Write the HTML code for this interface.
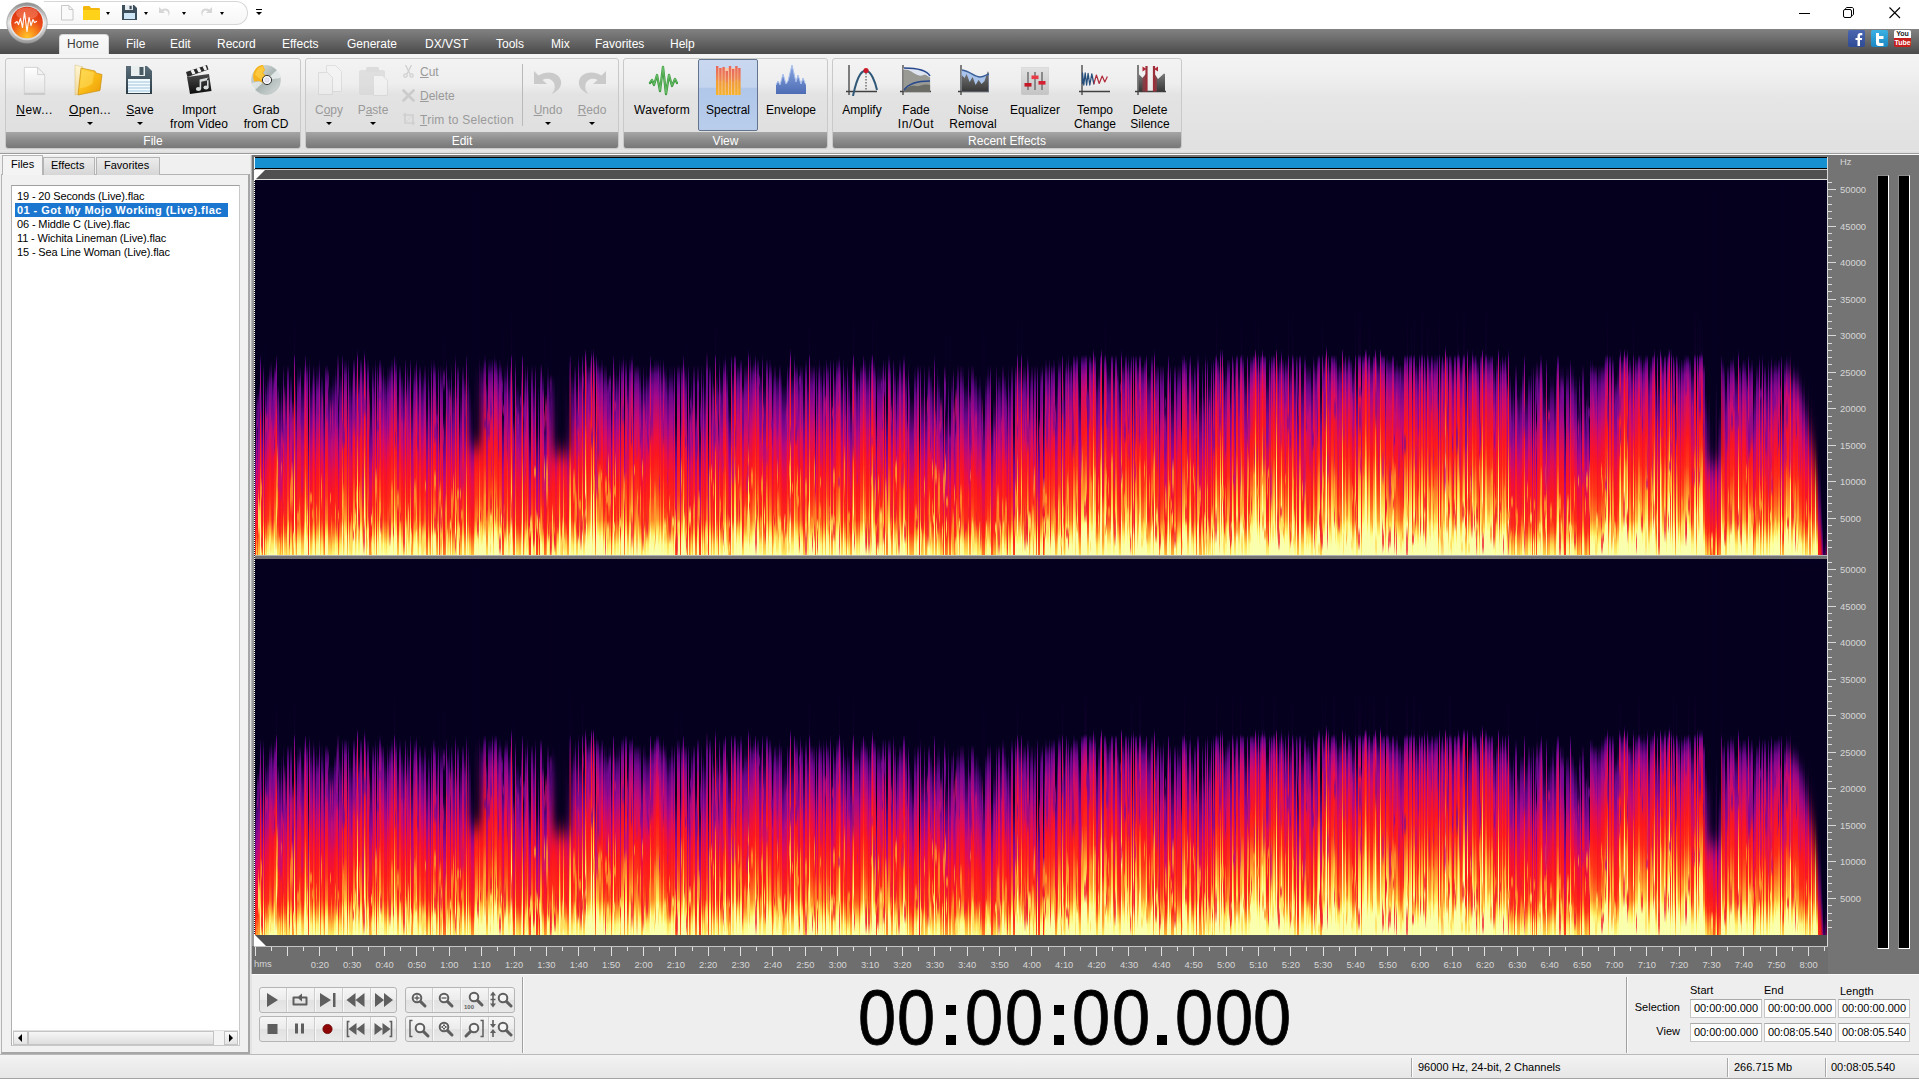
<!DOCTYPE html>
<html><head><meta charset="utf-8"><title>Audio Editor</title>
<style>

html,body{margin:0;padding:0;}
body{width:1919px;height:1079px;overflow:hidden;background:#f0f0f0;font-family:"Liberation Sans",sans-serif;font-size:12px;color:#000;}
#app{position:relative;width:1919px;height:1079px;overflow:hidden;background:#efefef;}
.abs{position:absolute;}
.t{position:absolute;white-space:nowrap;line-height:14px;}
.c{text-align:center;}
/* title */
#title{left:0;top:0;width:1919px;height:29px;background:#fff;}
#menubar{left:0;top:29px;width:1919px;height:25px;background:linear-gradient(#828282 0%,#6a6a6a 45%,#4a4a4a 100%);}
#menubar .m{position:absolute;top:9px;color:#fff;font-size:12px;line-height:14px;white-space:nowrap;}
#hometab{left:59px;top:34px;width:48px;height:21px;background:linear-gradient(#fafafa,#f1f1f1);border:1px solid #d8d8d8;border-bottom:none;border-radius:4px 4px 0 0;}
#ribbon{left:0;top:54px;width:1919px;height:99px;background:linear-gradient(#f4f4f4 0%,#f0f0f0 20%,#e6e6e6 45%,#e0e0e0 100%);}
.grp{position:absolute;top:58px;height:91px;border:1px solid #c9c9c9;border-radius:3px;background:linear-gradient(#f3f3f3 0%,#eeeeee 28%,#e3e3e3 40%,#dedede 100%);box-sizing:border-box;overflow:hidden;}
.grp .lbl{position:absolute;left:0;right:0;bottom:0;height:16px;background:linear-gradient(#a6a6a6,#8c8c8c 50%,#787878);color:#fff;text-align:center;font-size:12px;line-height:18px;}
.rl{position:absolute;font-size:12px;line-height:14px;text-align:center;white-space:nowrap;color:#000;transform:translateX(-50%);}
.rl.dis{color:#9a9a9a;}
.arr{position:absolute;width:0;height:0;border-left:3px solid transparent;border-right:3px solid transparent;border-top:3px solid #000;}
u{text-decoration:underline;}

</style></head>
<body>
<div id="app">
<svg width="0" height="0" style="position:absolute"><defs>
<linearGradient id="gPaper" x1="0" y1="0" x2="0" y2="1"><stop offset="0" stop-color="#ffffff"/><stop offset="1" stop-color="#e4e4e4"/></linearGradient>
<linearGradient id="gFold" x1="0" y1="0" x2="1" y2="1"><stop offset="0" stop-color="#ffd84a"/><stop offset="0.55" stop-color="#f9b915"/><stop offset="1" stop-color="#e99a08"/></linearGradient>
<linearGradient id="gFoldB" x1="0" y1="0" x2="0" y2="1"><stop offset="0" stop-color="#fff6d0"/><stop offset="1" stop-color="#f0d89a"/></linearGradient>
<linearGradient id="gDisk" x1="0" y1="0" x2="0" y2="1"><stop offset="0" stop-color="#5a6d78"/><stop offset="1" stop-color="#2c3d47"/></linearGradient>
<linearGradient id="gClap" x1="0" y1="0" x2="0" y2="1"><stop offset="0" stop-color="#4a4a4a"/><stop offset="1" stop-color="#0c0c0c"/></linearGradient>
<linearGradient id="gCD" x1="0" y1="0" x2="1" y2="1"><stop offset="0" stop-color="#e8ecec"/><stop offset="0.5" stop-color="#a9b5b3"/><stop offset="1" stop-color="#d8dedd"/></linearGradient>
<linearGradient id="gSpec" x1="0" y1="0" x2="0" y2="1"><stop offset="0" stop-color="#e8665e"/><stop offset="0.45" stop-color="#ee8850"/><stop offset="0.5" stop-color="#f09a3a"/><stop offset="1" stop-color="#f4b428"/></linearGradient>
<linearGradient id="gEnv" x1="0" y1="0" x2="0" y2="1"><stop offset="0" stop-color="#8aa6e0"/><stop offset="1" stop-color="#4d6cb4"/></linearGradient>
<linearGradient id="gDk" x1="0" y1="0" x2="0" y2="1"><stop offset="0" stop-color="#7a7a7a"/><stop offset="1" stop-color="#383838"/></linearGradient>
<linearGradient id="gEq" x1="0" y1="0" x2="0" y2="1"><stop offset="0" stop-color="#e2e2e2"/><stop offset="1" stop-color="#c4c4c4"/></linearGradient>
<radialGradient id="gLogo" cx="0.5" cy="0.95" r="0.95"><stop offset="0" stop-color="#ffc42a"/><stop offset="0.30" stop-color="#f98a1c"/><stop offset="0.60" stop-color="#ea4a18"/><stop offset="1" stop-color="#d62e12"/></radialGradient>
<linearGradient id="gRing" x1="0" y1="0" x2="0" y2="1"><stop offset="0" stop-color="#8f8f8f"/><stop offset="0.5" stop-color="#e8e8e8"/><stop offset="1" stop-color="#9a9a9a"/></linearGradient>
</defs></svg>
<div id="title" class="abs"></div>
<div id="menubar" class="abs"></div>
<div class="abs" style="left:44px;top:1px;width:203px;height:22px;border:1px solid #d6d6d6;border-radius:0 12px 12px 0;border-left:none;background:linear-gradient(#ffffff,#f6f6f6);"></div>
<svg class="abs" style="left:61px;top:5px" width="13" height="16" viewBox="0 0 13 16" ><path d="M.5 .5h7.500l4 4v10.500H.5z" fill="#fafafa" stroke="#c8c8c8"/><path d="M8 .5v4h4" fill="none" stroke="#c8c8c8"/></svg>
<svg class="abs" style="left:83px;top:6px" width="17" height="15" viewBox="0 0 17 15" ><path d="M0 1.500c0-1 .5-1.500 1.500-1.500h5l1.500 2h7.500c1 0 1.500.5 1.500 1.500V14H0z" fill="#f4b70c"/><path d="M0 4h17v10H0z" fill="#fdd219"/></svg>
<svg class="abs" style="left:122px;top:5px" width="15" height="15" viewBox="0 0 15 15" ><path d="M0 0h12l3 3v12H0z" fill="#3d4f5a"/><rect x="3" y="0" width="8" height="5" fill="#e8eef2"/><rect x="7.500" y=".8" width="2.200" height="3.400" fill="#3d4f5a"/><rect x="2" y="8" width="11" height="6" fill="#cfe6f7"/></svg>
<svg class="abs" style="left:158px;top:6px" width="16" height="13" viewBox="0 0 16 13" ><path d="M1 1v6h6l-2-2c3-1.500 6 0 5.500 5.500 3-5 0-10-7-7z" fill="#d6d6d6"/></svg>
<svg class="abs" style="left:197px;top:6px" width="16" height="13" viewBox="0 0 16 13" ><path d="M15 1v6H9l2-2C8 3.500 5 5 5.500 10.500 2.500 5.500 5.500 .5 12.500 3.500z" fill="#d6d6d6"/></svg>
<div class="arr" style="left:106px;top:12px;border-width:3px 2.500px 0 2.500px"></div>
<div class="arr" style="left:144px;top:12px;border-width:3px 2.500px 0 2.500px"></div>
<div class="arr" style="left:182px;top:12px;border-width:3px 2.500px 0 2.500px"></div>
<div class="arr" style="left:220px;top:12px;border-width:3px 2.500px 0 2.500px"></div>
<div class="abs" style="left:256px;top:9px;width:6px;height:1px;background:#000"></div>
<div class="arr" style="left:256px;top:12px"></div>
<div class="abs" style="left:1799px;top:13px;width:11px;height:1px;background:#000"></div>
<svg class="abs" style="left:1843px;top:7px" width="12" height="12" viewBox="0 0 12 12" ><rect x=".5" y="2.500" width="8" height="8" rx="1.500" fill="none" stroke="#000"/><path d="M2.500 2.500V2c0-.8.700-1.500 1.500-1.500h5c.8 0 1.500.7 1.500 1.500v5c0 .8-.7 1.500-1.500 1.500H8.500" fill="none" stroke="#000"/></svg>
<svg class="abs" style="left:1889px;top:7px" width="12" height="12" viewBox="0 0 12 12" ><path d="M.5 .5l10.500 10.500M11 .5L.5 11" stroke="#000" stroke-width="1.100"/></svg>
<svg class="abs" style="left:6px;top:2px" width="42" height="42" viewBox="0 0 42 42" ><circle cx="21" cy="21" r="20.200" fill="url(#gRing)" stroke="#8a8a8a" stroke-width=".6"/><circle cx="21" cy="21" r="17.300" fill="#fff" opacity=".55"/><circle cx="21" cy="20.500" r="15.800" fill="url(#gLogo)"/><ellipse cx="21" cy="11.500" rx="11" ry="6" fill="#ff9a78" opacity=".45"/><path d="M9 21l2-1.500 1.500 3 2-6 2 9 2-15 2.500 19 2-14 2 8 2-6 1.500 3 2-1" fill="none" stroke="#fff" stroke-width="1.200" stroke-linejoin="round" stroke-linecap="round" opacity=".95"/></svg>
<div id="hometab" class="abs"></div>
<div id="ribbon" class="abs"></div>
<div class="t mi" style="left:67px;top:37px;color:#3c3c3c;font-size:12px">Home</div>
<div class="t mi" style="left:126px;top:37px;color:#fff;font-size:12px">File</div>
<div class="t mi" style="left:170px;top:37px;color:#fff;font-size:12px">Edit</div>
<div class="t mi" style="left:217px;top:37px;color:#fff;font-size:12px">Record</div>
<div class="t mi" style="left:282px;top:37px;color:#fff;font-size:12px">Effects</div>
<div class="t mi" style="left:347px;top:37px;color:#fff;font-size:12px">Generate</div>
<div class="t mi" style="left:425px;top:37px;color:#fff;font-size:12px">DX/VST</div>
<div class="t mi" style="left:496px;top:37px;color:#fff;font-size:12px">Tools</div>
<div class="t mi" style="left:551px;top:37px;color:#fff;font-size:12px">Mix</div>
<div class="t mi" style="left:595px;top:37px;color:#fff;font-size:12px">Favorites</div>
<div class="t mi" style="left:670px;top:37px;color:#fff;font-size:12px">Help</div>
<div class="abs" style="left:1848px;top:30px;width:17px;height:17px;background:linear-gradient(#4a66b0,#2f4a96);border-radius:2px;"></div>
<svg class="abs" style="left:1848px;top:30px" width="17" height="17" viewBox="0 0 17 17" ><path d="M9.500 16V10H7.500V8h2V6c0-2 1.200-3 3-3h1.800v2.200H13c-.7 0-1 .4-1 1V8h2.200l-.3 2H12v6z" fill="#fff"/></svg>
<div class="abs" style="left:1871px;top:30px;width:17px;height:17px;background:linear-gradient(#3cb2e4,#1a86c2);border-radius:2px;"></div>
<svg class="abs" style="left:1871px;top:30px" width="17" height="17" viewBox="0 0 17 17" ><path d="M5 3h3v3h4.500v3H8v2.500c0 1 .5 1.500 1.500 1.500h3v3H8c-2 0-3-1-3-3z" fill="#fff"/></svg>
<div class="abs" style="left:1894px;top:30px;width:17px;height:9px;background:#fff;border-radius:2px 2px 0 0"></div>
<div class="abs" style="left:1894px;top:38px;width:17px;height:9px;background:#c8201c;border-radius:0 0 2px 2px"></div>
<div class="t" style="left:1894px;top:29px;width:17px;text-align:center;font-size:7px;font-weight:bold;line-height:9px;color:#222">You</div>
<div class="t" style="left:1894px;top:38px;width:17px;text-align:center;font-size:7px;font-weight:bold;line-height:9px;color:#fff">Tube</div>
<div class="grp" style="left:5px;width:296px"><div class="lbl">File</div></div>
<div class="grp" style="left:305px;width:314px"><div class="lbl">Edit</div></div>
<div class="grp" style="left:623px;width:205px"><div class="lbl">View</div></div>
<div class="grp" style="left:832px;width:350px"><div class="lbl">Recent Effects</div></div>
<svg class="abs" style="left:23px;top:66px" width="23" height="29" viewBox="0 0 26 32" preserveAspectRatio="none"><path d="M1.5 1.5h15l8 8v20.5h-23z" fill="url(#gPaper)" stroke="#cfcfcf" stroke-width="1"/><path d="M16.5 1.5v8h8z" fill="#f2f2f2" stroke="#cfcfcf" stroke-width="1"/><path d="M1 31h24" stroke="#c4c4c4" stroke-width="1.5"/></svg>
<svg class="abs" style="left:74px;top:64px" width="30" height="32" viewBox="0 0 30 32" ><path d="M1 1l8 2 -3 27 -5 1z" fill="url(#gFoldB)" stroke="#d9c58a" stroke-width=".6"/><path d="M7 4l14 3 1 2 6 1.5 -2 16 -22 4.5z" fill="url(#gFold)" stroke="#c98f10" stroke-width=".7"/><path d="M8 6l12 2.5-1.5 11c-5 4-9 4-13 5z" fill="#ffe36a" opacity=".45"/></svg>
<svg class="abs" style="left:125px;top:65px" width="28" height="30" viewBox="0 0 28 30" ><path d="M1 1h21l5 5v23H1z" fill="url(#gDisk)"/><rect x="6" y="1" width="14" height="10" fill="#e9eeee"/><rect x="14.5" y="2" width="4" height="8" fill="#4a5a62"/><rect x="3" y="14" width="22" height="14" fill="#f4fbff"/><path d="M3 17h22M3 20h22M3 23h22M3 26h22" stroke="#9fc3dd" stroke-width="1"/></svg>
<svg class="abs" style="left:184px;top:64px" width="30" height="31" viewBox="0 0 30 31" ><path d="M2 8L23 1l1.5 4.5L3.5 13z" fill="#2a2a2a"/><path d="M6.5 6.6l3-1 2 4-3 1zM12.5 4.6l3-1 2 4-3 1zM18.5 2.6l3-1 1.6 4-2.6 1z" fill="#f4f4f4"/><path d="M3 13l22-3 2.5 17L6 30z" fill="url(#gClap)"/><g fill="#d8dcdc"><ellipse cx="14.5" cy="25" rx="2.6" ry="2"/><ellipse cx="22" cy="23.6" rx="2.6" ry="2"/><path d="M15.6 15.5l9-2v2.5l-7.4 1.7v7.3h-1.6zM23 15v8.6h1.6V13.5z"/></g></svg>
<svg class="abs" style="left:251px;top:64px" width="31" height="32" viewBox="0 0 31 32" ><circle cx="15" cy="16" r="14.5" fill="url(#gCD)" stroke="#b8c2c0" stroke-width=".6"/><path d="M15 16L27 5A16 16 0 0 1 29.4 14z" fill="#eef2f1" opacity=".8"/><path d="M15 16L3 27A16 16 0 0 1 .8 19z" fill="#eef2f1" opacity=".7"/><path d="M2 13C2 6 7 1 12 1l2 5-2 3 3 3-1 8-6-3-5 .5z" fill="#f5b320"/><path d="M4 11c1-5 4-8 8-9l1 4-2 3 2 3-1 5-4-3z" fill="#ffd24a" opacity=".7"/><circle cx="16" cy="16" r="4.6" fill="#f4f6f8" stroke="#333" stroke-width="1"/><circle cx="16" cy="16" r="2.2" fill="#e9e4f4" stroke="#c8c8d8" stroke-width=".5"/></svg>
<div class="rl " style="left:34.5px;top:103px"><span style="letter-spacing:.55px"><u>N</u>ew...</span></div>
<div class="rl " style="left:90px;top:103px"><span style="letter-spacing:.35px"><u>O</u>pen...</span></div>
<div class="rl " style="left:140px;top:103px"><u>S</u>ave</div>
<div class="rl " style="left:199px;top:103px">Import<br>from Video</div>
<div class="rl " style="left:266px;top:103px">Grab<br>from CD</div>
<div class="arr" style="left:87px;top:122px;border-top-color:#000"></div>
<div class="arr" style="left:137px;top:122px;border-top-color:#000"></div>
<svg class="abs" style="left:316px;top:64px" width="27" height="32" viewBox="0 0 27 32" ><g opacity=".55"><path d="M10.5 1.5h9l6 6v20h-15z" fill="#f6f6f6" stroke="#d0d0d0"/><path d="M2.5 8.5h9l5 5v17h-14z" fill="#f1f1f1" stroke="#cdcdcd"/></g></svg>
<svg class="abs" style="left:358px;top:65px" width="31" height="31" viewBox="0 0 31 31" ><g opacity=".6"><rect x="1" y="5" width="26" height="25" rx="2" fill="#d4d4d4"/><rect x="8" y="2" width="13" height="5" rx="1.5" fill="#cfcfcf"/><path d="M15.5 10.5h9l5 5v15h-14z" fill="#f3f3f3" stroke="#d2d2d2"/></g></svg>
<div class="rl dis" style="left:329px;top:103px">C<u>o</u>py</div>
<div class="rl dis" style="left:373px;top:103px">P<u>a</u>ste</div>
<div class="arr" style="left:326px;top:122px;border-top-color:#000"></div>
<div class="arr" style="left:370px;top:122px;border-top-color:#000"></div>
<svg class="abs" style="left:403px;top:65px" width="11" height="13" viewBox="0 0 11 13" ><path d="M2.500 0l4.500 9M8.500 0L4 9" stroke="#cfcfcf" stroke-width="1.300"/><circle cx="2.500" cy="10.500" r="1.700" fill="none" stroke="#cfcfcf" stroke-width="1.200"/><circle cx="8.500" cy="10.500" r="1.700" fill="none" stroke="#cfcfcf" stroke-width="1.200"/></svg>
<svg class="abs" style="left:402px;top:89px" width="13" height="13" viewBox="0 0 13 13" ><path d="M1.500 1.500l10 10M11.500 1.500l-10 10" stroke="#cbcbcb" stroke-width="2.600" stroke-linecap="round"/></svg>
<svg class="abs" style="left:403px;top:113px" width="12" height="12" viewBox="0 0 12 12" ><path d="M2 0v10h10M0 2h10v10" fill="none" stroke="#cfcfcf" stroke-width="1.600"/><path d="M3 9l6-6" stroke="#d6d6d6" stroke-width="1"/></svg>
<div class="t" style="left:420px;top:65px;color:#9a9a9a"><u>C</u>ut</div>
<div class="t" style="left:420px;top:89px;color:#9a9a9a"><u>D</u>elete</div>
<div class="t" style="left:420px;top:113px;color:#9a9a9a"><span style="letter-spacing:.25px"><u>T</u>rim to Selection</span></div>
<div class="abs" style="left:522px;top:64px;width:1px;height:62px;background:#b9b9b9"></div>
<svg class="abs" style="left:533px;top:70px" width="30" height="26" viewBox="0 0 30 26" ><path d="M1 1V14H14L9.500 10C14 7.500 20 9 21.500 14.500 22.300 18.500 21 21.500 18.500 24 25.500 21.500 29 16 28 11 26 2.500 14.500 0 5.500 5.500Z" fill="#cacaca"/></svg>
<svg class="abs" style="left:577px;top:70px" width="30" height="26" viewBox="0 0 30 26" ><g transform="translate(30,0) scale(-1,1)"><path d="M1 1V14H14L9.500 10C14 7.500 20 9 21.500 14.500 22.300 18.500 21 21.500 18.500 24 25.500 21.500 29 16 28 11 26 2.500 14.500 0 5.500 5.500Z" fill="#cacaca"/></g></svg>
<div class="rl dis" style="left:548px;top:103px"><u>U</u>ndo</div>
<div class="rl dis" style="left:592px;top:103px"><u>R</u>edo</div>
<div class="arr" style="left:545px;top:122px;border-top-color:#000"></div>
<div class="arr" style="left:589px;top:122px;border-top-color:#000"></div>
<div class="abs" style="left:698px;top:59px;width:58px;height:70px;border:1px solid #63748f;border-radius:2px;background:linear-gradient(#c9d8ef 0%,#c3d4ee 39%,#b0c7ea 40%,#b9cdeb 100%);"></div>
<svg class="abs" style="left:648px;top:65px" width="30" height="32" viewBox="0 0 30 32" ><path d="M2 18l2-3 2 5 3-10 3 16 3-24 3 27 3-19 3 11 3-7 2 4" fill="none" stroke="#3f9a3f" stroke-width="2.300" stroke-linejoin="round" stroke-linecap="round"/><path d="M2 17.500l2-3 2 5 3-10 3 16 3-24 3 27 3-19 3 11 3-7 2 4" fill="none" stroke="#7cd07c" stroke-width=".8" stroke-linejoin="round" opacity=".8"/></svg>
<svg class="abs" style="left:714px;top:64px" width="28" height="32" viewBox="0 0 28 32" ><rect x="2" y="4" width="24" height="27" fill="#f6c8a8"/><g fill="url(#gSpec)"><rect x="2" y="2" width="2.4" height="29"/><rect x="5.2" y="4" width="2.4" height="27"/><rect x="8.4" y="3" width="2.4" height="28"/><rect x="11.6" y="7" width="2.4" height="24"/><rect x="14.8" y="2" width="2.4" height="29"/><rect x="18" y="5" width="2.4" height="26"/><rect x="21.2" y="2" width="2.4" height="29"/><rect x="24.2" y="4" width="2.4" height="27"/></g></svg>
<svg class="abs" style="left:775px;top:64px" width="32" height="32" viewBox="0 0 32 32" ><path d="M1 30V21l2-4 2 4 3-11 3 10 2-3 4-16 4 17 2-7 3 9 2-6 2 5 1 2v9z" fill="url(#gEnv)"/><path d="M1 21l2-4 2 4 3-11 3 10 2-3 4-16 4 17 2-7 3 9 2-6 2 5" fill="none" stroke="#a9c0ee" stroke-width="1"/></svg>
<div class="rl " style="left:662px;top:103px"><span style="letter-spacing:.2px">Waveform</span></div>
<div class="rl " style="left:728px;top:103px">Spectral</div>
<div class="rl " style="left:791px;top:103px">Envelope</div>
<svg class="abs" style="left:846px;top:64px" width="32" height="32" viewBox="0 0 32 32" ><path d="M3 1v30M0 27.5h31" stroke="#404040" stroke-width="1.3"/><path d="M7 32C12 8 17 6 21 7s8 10 10 19" fill="none" stroke="#2f5878" stroke-width="2"/><path d="M20 9v18" stroke="#333" stroke-width="1" stroke-dasharray="1.5 1.5"/><circle cx="20" cy="6.5" r="2.6" fill="#cc1a2a"/></svg>
<svg class="abs" style="left:900px;top:64px" width="32" height="32" viewBox="0 0 32 32" ><path d="M3 1v30M0 27.5h31" stroke="#404040" stroke-width="1.3"/><path d="M3.6 5.5c6-1 10 3 14 5s5-2 8 0l4.5 3v14H3.6z" fill="#9a9a94"/><path d="M3.6 27c4-5 8-6 12-5s8-3 14.5-1v6z" fill="#6c6c66"/><path d="M3.6 6c4-2 9 3 14 5s5-1 8-.5l4.4 2.500V8C22 4 12 3.500 3.600 4z" fill="#dfe6f2"/><path d="M4 4c10 0 22 1 26 8" fill="none" stroke="#27488c" stroke-width="1.5"/><path d="M4 26c4-6 14-9 26-9" fill="none" stroke="#27488c" stroke-width="1.5"/></svg>
<svg class="abs" style="left:958px;top:64px" width="32" height="32" viewBox="0 0 32 32" ><path d="M3 1v30M0 27.5h31" stroke="#404040" stroke-width="1.3"/><path d="M3.600 6c8 1 12 7 18 7 4 0 6-2 9.400-3v17.400H3.600z" fill="#a9c3ea"/><path d="M3.600 11l3 3 2-4 3 8 3-5 3 8 3-5 3 4 3-3 3-9.500 1 .5v19.400H3.600z" fill="url(#gDk)"/><path d="M4 6c8 1 12 7 18 7 4 0 6-2 9-3" fill="none" stroke="#3a5f9a" stroke-width="1.4"/></svg>
<svg class="abs" style="left:1021px;top:67px" width="28" height="28" viewBox="0 0 28 28" ><rect x="0" y="0" width="28" height="28" rx="2" fill="url(#gEq)" stroke="#cfcfcf" stroke-width=".6"/><path d="M7 5v18M14 5v18M21 5v18" stroke="#777" stroke-width="1.6"/><rect x="3.500" y="16" width="7" height="3.600" fill="#c41826"/><rect x="10.500" y="8.500" width="7" height="3.600" fill="#e83a44"/><rect x="17.500" y="14" width="7" height="3.600" fill="#d42030"/></svg>
<svg class="abs" style="left:1079px;top:64px" width="32" height="32" viewBox="0 0 32 32" ><path d="M3 1v30M0 27.5h31" stroke="#404040" stroke-width="1.3"/><path d="M3.500 20V9l1.300 12 1.400-12 1.400 12 1.500-11.500 1.700 11.500 2-11 2.200 10.500" fill="none" stroke="#274f7c" stroke-width="1.3" stroke-linejoin="round"/><path d="M14.800 20l2.600-9 2.800 8.500 3-7.500 2.600 6 2.600-5.500" fill="none" stroke="#b02a3a" stroke-width="1.200" stroke-linejoin="round"/></svg>
<svg class="abs" style="left:1135px;top:64px" width="32" height="32" viewBox="0 0 32 32" ><path d="M3 1v30M0 27.5h31" stroke="#404040" stroke-width="1.3"/><path d="M3.600 10l4 4 4-5v18.400h-8zM19 27.400V9l4 6 6-5.500 1 .5v17.400z" fill="url(#gDk)"/><path d="M7.500 14l4-4.500V27.400h-4z" fill="#8e3b42" opacity=".8"/><path d="M19 9.500l3 4.500v13.400h-3z" fill="#8e3b42" opacity=".8"/><path d="M11.500 2v25.400M19 2v25.400" stroke="#9a2f3a" stroke-width="2.200"/><path d="M7.500 2.500l4 2.500-4 2.500zM23 2.500l-4 2.500 4 2.500z" fill="#b02a3a"/></svg>
<div class="rl " style="left:862px;top:103px">Amplify</div>
<div class="rl " style="left:916px;top:103px">Fade<br><span style="letter-spacing:.6px">In/Out</span></div>
<div class="rl " style="left:973px;top:103px">Noise<br>Removal</div>
<div class="rl " style="left:1035px;top:103px">Equalizer</div>
<div class="rl " style="left:1095px;top:103px">Tempo<br>Change</div>
<div class="rl " style="left:1150px;top:103px">Delete<br>Silence</div>
<div class="abs" style="left:0;top:150px;width:1919px;height:3px;background:linear-gradient(#e9e9e9,#dcdcdc)"></div>
<div class="abs" style="left:0;top:153px;width:1919px;height:1px;background:#9c9c9c"></div>
<div class="abs" style="left:0;top:154px;width:1919px;height:1px;background:#fdfdfd"></div>
<div class="abs" style="left:0;top:155px;width:252px;height:900px;background:#f0f0f0"></div>
<div class="abs" style="left:1px;top:174px;width:249px;height:880px;border:1px solid #b4b4b4;box-sizing:border-box;background:#f1f1f1;border-right:2px solid #a6a6a6;border-bottom:2px solid #a6a6a6"></div>
<div class="abs" style="left:43px;top:157px;width:52px;height:18px;box-sizing:border-box;border:1px solid #b4b4b4;border-bottom:none;background:linear-gradient(#ececec,#d6d6d6)"></div>
<div class="abs" style="left:96px;top:157px;width:64px;height:18px;box-sizing:border-box;border:1px solid #b4b4b4;border-bottom:none;background:linear-gradient(#ececec,#d6d6d6)"></div>
<div class="abs" style="left:2px;top:155px;width:41px;height:20px;box-sizing:border-box;border:1px solid #b4b4b4;border-bottom:none;background:#f4f4f4"></div>
<div class="t" style="left:11px;top:158px;font-size:11px;line-height:13px">Files</div>
<div class="t" style="left:51px;top:159px;font-size:11px;line-height:13px">Effects</div>
<div class="t" style="left:104px;top:159px;font-size:11px;line-height:13px">Favorites</div>
<div class="abs" style="left:11px;top:185px;width:229px;height:861px;box-sizing:border-box;border:1px solid #c8c8c8;border-top-color:#a0a0a0;border-left-color:#b0b0b0;background:#fff"></div>
<div class="abs" style="left:15px;top:203px;width:213px;height:14px;background:#1b76d0"></div>
<div class="t lf" id="lf0" style="left:17px;top:189px;font-size:11px;line-height:14px;letter-spacing:-0.13px;">19 - 20 Seconds (Live).flac</div>
<div class="t lf" id="lf1" style="left:17px;top:203px;font-size:11px;line-height:14px;font-weight:bold;color:#fff;letter-spacing:0.43px;">01 - Got My Mojo Working (Live).flac</div>
<div class="t lf" id="lf2" style="left:17px;top:217px;font-size:11px;line-height:14px;letter-spacing:-0.13px;">06 - Middle C (Live).flac</div>
<div class="t lf" id="lf3" style="left:17px;top:231px;font-size:11px;line-height:14px;letter-spacing:-0.13px;">11 - Wichita Lineman (Live).flac</div>
<div class="t lf" id="lf4" style="left:17px;top:245px;font-size:11px;line-height:14px;letter-spacing:-0.13px;">15 - Sea Line Woman (Live).flac</div>
<div class="abs" style="left:13px;top:1030px;width:225px;height:15px;background:#f4f4f4;border-top:1px solid #e2e2e2;box-sizing:border-box"></div>
<div class="abs" style="left:28px;top:1031px;width:186px;height:14px;box-sizing:border-box;border:1px solid #c4c4c4;background:linear-gradient(#f6f6f6,#dedede)"></div>
<div class="abs" style="left:13px;top:1031px;width:15px;height:14px;box-sizing:border-box;border:1px solid #c4c4c4;background:linear-gradient(#fafafa,#e4e4e4)"></div>
<div class="abs" style="left:224px;top:1031px;width:14px;height:14px;box-sizing:border-box;border:1px solid #c4c4c4;background:linear-gradient(#fafafa,#e4e4e4)"></div>
<div class="abs" style="left:18px;top:1034px;width:0;height:0;border-top:4px solid transparent;border-bottom:4px solid transparent;border-right:4px solid #000"></div>
<div class="abs" style="left:229px;top:1034px;width:0;height:0;border-top:4px solid transparent;border-bottom:4px solid transparent;border-left:4px solid #000"></div>
<div class="abs" style="left:252px;top:155px;width:1667px;height:819px;background:#747474"></div>
<div class="abs" style="left:250px;top:155px;width:2px;height:900px;background:#e4e4e4"></div>
<div class="abs" style="left:251px;top:155px;width:1px;height:819px;background:#b8b8b8"></div>
<div class="abs" style="left:252px;top:180px;width:2px;height:766px;background:#9a9a9a"></div>
<div class="abs" style="left:255px;top:157px;width:1572px;height:12px;background:#000"></div>
<div class="abs" style="left:255px;top:158px;width:1572px;height:10px;background:#1690d0"></div>
<div class="abs" style="left:254px;top:157px;width:1px;height:12px;background:#e8f4ff"></div>
<div class="abs" style="left:255px;top:169px;width:1572px;height:1px;background:#c8c8c8"></div>
<div class="abs" style="left:255px;top:170px;width:1572px;height:9px;background:#505050"></div>
<div class="abs" style="left:255px;top:179px;width:1572px;height:1px;background:#e0e0e0"></div>
<svg class="abs" style="left:254px;top:170px" width="12" height="10"><path d="M0 0h11L1 10H0z" fill="#fff"/></svg>
<div class="abs" style="left:255px;top:555px;width:1572px;height:1px;background:#b0b0b0"></div>
<div class="abs" style="left:255px;top:556px;width:1572px;height:3px;background:#747474"></div>
<svg class="abs" style="left:0;top:0" width="1919" height="1079" viewBox="0 0 1919 1079"><defs><linearGradient id="g0" gradientUnits="userSpaceOnUse" x1="0" y1="555" x2="0" y2="309"><stop offset="0.000" stop-color="#06001f"/><stop offset="1.000" stop-color="#06001f"/></linearGradient><linearGradient id="g1" gradientUnits="userSpaceOnUse" x1="0" y1="555" x2="0" y2="309"><stop offset="0.000" stop-color="#1a013c"/><stop offset="0.041" stop-color="#06001f"/><stop offset="1.000" stop-color="#06001f"/></linearGradient><linearGradient id="g2" gradientUnits="userSpaceOnUse" x1="0" y1="555" x2="0" y2="309"><stop offset="0.000" stop-color="#2f0355"/><stop offset="0.041" stop-color="#06001f"/><stop offset="1.000" stop-color="#06001f"/></linearGradient><linearGradient id="g3" gradientUnits="userSpaceOnUse" x1="0" y1="555" x2="0" y2="309"><stop offset="0.000" stop-color="#46046b"/><stop offset="0.041" stop-color="#1a013c"/><stop offset="0.073" stop-color="#06001f"/><stop offset="1.000" stop-color="#06001f"/></linearGradient><linearGradient id="g4" gradientUnits="userSpaceOnUse" x1="0" y1="555" x2="0" y2="309"><stop offset="0.000" stop-color="#5d0682"/><stop offset="0.041" stop-color="#2f0355"/><stop offset="0.073" stop-color="#06001f"/><stop offset="1.000" stop-color="#06001f"/></linearGradient><linearGradient id="g5" gradientUnits="userSpaceOnUse" x1="0" y1="555" x2="0" y2="309"><stop offset="0.000" stop-color="#720689"/><stop offset="0.041" stop-color="#46046b"/><stop offset="0.081" stop-color="#090023"/><stop offset="1.000" stop-color="#06001f"/></linearGradient><linearGradient id="g6" gradientUnits="userSpaceOnUse" x1="0" y1="555" x2="0" y2="309"><stop offset="0.000" stop-color="#85078a"/><stop offset="0.041" stop-color="#5d0682"/><stop offset="0.093" stop-color="#0c0027"/><stop offset="1.000" stop-color="#06001f"/></linearGradient><linearGradient id="g7" gradientUnits="userSpaceOnUse" x1="0" y1="555" x2="0" y2="309"><stop offset="0.000" stop-color="#98088b"/><stop offset="0.041" stop-color="#720689"/><stop offset="0.093" stop-color="#1f0244"/><stop offset="0.122" stop-color="#06001f"/><stop offset="1.000" stop-color="#06001f"/></linearGradient><linearGradient id="g8" gradientUnits="userSpaceOnUse" x1="0" y1="555" x2="0" y2="309"><stop offset="0.000" stop-color="#aa0885"/><stop offset="0.041" stop-color="#85078a"/><stop offset="0.073" stop-color="#57057b"/><stop offset="0.122" stop-color="#0f012c"/><stop offset="0.142" stop-color="#06001f"/><stop offset="1.000" stop-color="#06001f"/></linearGradient><linearGradient id="g9" gradientUnits="userSpaceOnUse" x1="0" y1="555" x2="0" y2="309"><stop offset="0.000" stop-color="#bc097a"/><stop offset="0.041" stop-color="#98088b"/><stop offset="0.081" stop-color="#610685"/><stop offset="0.122" stop-color="#230249"/><stop offset="0.142" stop-color="#090023"/><stop offset="1.000" stop-color="#06001f"/></linearGradient><linearGradient id="g10" gradientUnits="userSpaceOnUse" x1="0" y1="555" x2="0" y2="309"><stop offset="0.000" stop-color="#ce0a6e"/><stop offset="0.041" stop-color="#aa0885"/><stop offset="0.093" stop-color="#640688"/><stop offset="0.142" stop-color="#1c0240"/><stop offset="0.163" stop-color="#0f012d"/><stop offset="0.203" stop-color="#06001f"/><stop offset="1.000" stop-color="#06001f"/></linearGradient><linearGradient id="g11" gradientUnits="userSpaceOnUse" x1="0" y1="555" x2="0" y2="309"><stop offset="0.000" stop-color="#d90b5d"/><stop offset="0.041" stop-color="#bc097a"/><stop offset="0.093" stop-color="#770789"/><stop offset="0.122" stop-color="#510575"/><stop offset="0.142" stop-color="#330358"/><stop offset="0.203" stop-color="#090023"/><stop offset="1.000" stop-color="#06001f"/></linearGradient><linearGradient id="g12" gradientUnits="userSpaceOnUse" x1="0" y1="555" x2="0" y2="309"><stop offset="0.000" stop-color="#e40d4c"/><stop offset="0.041" stop-color="#ce0a6e"/><stop offset="0.081" stop-color="#9b088c"/><stop offset="0.122" stop-color="#670688"/><stop offset="0.142" stop-color="#4a046e"/><stop offset="0.203" stop-color="#1c0240"/><stop offset="0.244" stop-color="#06001f"/><stop offset="1.000" stop-color="#06001f"/></linearGradient><linearGradient id="g13" gradientUnits="userSpaceOnUse" x1="0" y1="555" x2="0" y2="309"><stop offset="0.000" stop-color="#ef0e3c"/><stop offset="0.041" stop-color="#d90b5d"/><stop offset="0.093" stop-color="#9d088c"/><stop offset="0.142" stop-color="#610685"/><stop offset="0.244" stop-color="#1a013c"/><stop offset="0.285" stop-color="#06001f"/><stop offset="1.000" stop-color="#06001f"/></linearGradient><linearGradient id="g14" gradientUnits="userSpaceOnUse" x1="0" y1="555" x2="0" y2="309"><stop offset="0.000" stop-color="#f41130"/><stop offset="0.041" stop-color="#e40d4c"/><stop offset="0.093" stop-color="#af0982"/><stop offset="0.142" stop-color="#740789"/><stop offset="0.163" stop-color="#680688"/><stop offset="0.285" stop-color="#170138"/><stop offset="0.325" stop-color="#06001f"/><stop offset="1.000" stop-color="#06001f"/></linearGradient><linearGradient id="g15" gradientUnits="userSpaceOnUse" x1="0" y1="555" x2="0" y2="309"><stop offset="0.000" stop-color="#f81424"/><stop offset="0.041" stop-color="#ef0e3c"/><stop offset="0.093" stop-color="#c10976"/><stop offset="0.122" stop-color="#a0088c"/><stop offset="0.142" stop-color="#87078a"/><stop offset="0.203" stop-color="#610685"/><stop offset="0.285" stop-color="#2c0352"/><stop offset="0.325" stop-color="#0e012b"/><stop offset="0.366" stop-color="#06001f"/><stop offset="1.000" stop-color="#06001f"/></linearGradient><linearGradient id="g16" gradientUnits="userSpaceOnUse" x1="0" y1="555" x2="0" y2="309"><stop offset="0.000" stop-color="#fc181c"/><stop offset="0.041" stop-color="#f41130"/><stop offset="0.093" stop-color="#d10a69"/><stop offset="0.142" stop-color="#9b088c"/><stop offset="0.244" stop-color="#5d0682"/><stop offset="0.325" stop-color="#220248"/><stop offset="0.366" stop-color="#06001f"/><stop offset="1.000" stop-color="#06001f"/></linearGradient><linearGradient id="g17" gradientUnits="userSpaceOnUse" x1="0" y1="555" x2="0" y2="309"><stop offset="0.000" stop-color="#fd1e1a"/><stop offset="0.041" stop-color="#f81424"/><stop offset="0.093" stop-color="#dc0c58"/><stop offset="0.142" stop-color="#ad0984"/><stop offset="0.244" stop-color="#720689"/><stop offset="0.285" stop-color="#5a057e"/><stop offset="0.366" stop-color="#1a013c"/><stop offset="0.407" stop-color="#06001f"/><stop offset="1.000" stop-color="#06001f"/></linearGradient><linearGradient id="g18" gradientUnits="userSpaceOnUse" x1="0" y1="555" x2="0" y2="309"><stop offset="0.000" stop-color="#fd2418"/><stop offset="0.041" stop-color="#fc181c"/><stop offset="0.093" stop-color="#e80d48"/><stop offset="0.142" stop-color="#bf0978"/><stop offset="0.203" stop-color="#9b088c"/><stop offset="0.285" stop-color="#6f0689"/><stop offset="0.325" stop-color="#500575"/><stop offset="0.407" stop-color="#11012f"/><stop offset="0.447" stop-color="#06001f"/><stop offset="1.000" stop-color="#06001f"/></linearGradient><linearGradient id="g19" gradientUnits="userSpaceOnUse" x1="0" y1="555" x2="0" y2="309"><stop offset="0.000" stop-color="#fe2917"/><stop offset="0.041" stop-color="#fd1e1a"/><stop offset="0.093" stop-color="#f00f39"/><stop offset="0.142" stop-color="#d00a6c"/><stop offset="0.203" stop-color="#ad0984"/><stop offset="0.325" stop-color="#670688"/><stop offset="0.407" stop-color="#25024b"/><stop offset="0.447" stop-color="#0a0024"/><stop offset="1.000" stop-color="#06001f"/></linearGradient><linearGradient id="g20" gradientUnits="userSpaceOnUse" x1="0" y1="555" x2="0" y2="309"><stop offset="0.000" stop-color="#fe3918"/><stop offset="0.073" stop-color="#fc161c"/><stop offset="0.142" stop-color="#db0c5b"/><stop offset="0.244" stop-color="#aa0885"/><stop offset="0.325" stop-color="#7a0789"/><stop offset="0.366" stop-color="#5d0682"/><stop offset="0.447" stop-color="#1d0241"/><stop offset="0.488" stop-color="#06001f"/><stop offset="1.000" stop-color="#06001f"/></linearGradient><linearGradient id="g21" gradientUnits="userSpaceOnUse" x1="0" y1="555" x2="0" y2="309"><stop offset="0.000" stop-color="#fe501a"/><stop offset="0.041" stop-color="#fe2917"/><stop offset="0.093" stop-color="#fa1521"/><stop offset="0.203" stop-color="#d00a6c"/><stop offset="0.285" stop-color="#a80887"/><stop offset="0.366" stop-color="#720689"/><stop offset="0.407" stop-color="#540578"/><stop offset="0.488" stop-color="#160136"/><stop offset="0.528" stop-color="#06001f"/><stop offset="1.000" stop-color="#06001f"/></linearGradient><linearGradient id="g22" gradientUnits="userSpaceOnUse" x1="0" y1="555" x2="0" y2="309"><stop offset="0.000" stop-color="#fe671d"/><stop offset="0.041" stop-color="#fe3918"/><stop offset="0.093" stop-color="#fc191b"/><stop offset="0.244" stop-color="#ce0a6e"/><stop offset="0.325" stop-color="#a0088c"/><stop offset="0.407" stop-color="#690688"/><stop offset="0.488" stop-color="#2a0350"/><stop offset="0.549" stop-color="#06001f"/><stop offset="1.000" stop-color="#06001f"/></linearGradient><linearGradient id="g23" gradientUnits="userSpaceOnUse" x1="0" y1="555" x2="0" y2="309"><stop offset="0.000" stop-color="#fe8325"/><stop offset="0.073" stop-color="#fe2817"/><stop offset="0.122" stop-color="#fb151f"/><stop offset="0.285" stop-color="#cb0a70"/><stop offset="0.366" stop-color="#98088b"/><stop offset="0.447" stop-color="#620686"/><stop offset="0.569" stop-color="#080022"/><stop offset="1.000" stop-color="#06001f"/></linearGradient><linearGradient id="g24" gradientUnits="userSpaceOnUse" x1="0" y1="555" x2="0" y2="309"><stop offset="0.000" stop-color="#ffa02f"/><stop offset="0.081" stop-color="#fe2a16"/><stop offset="0.203" stop-color="#ef0f3b"/><stop offset="0.285" stop-color="#d80b60"/><stop offset="0.366" stop-color="#aa0885"/><stop offset="0.447" stop-color="#750789"/><stop offset="0.488" stop-color="#59057d"/><stop offset="0.569" stop-color="#1b023e"/><stop offset="0.610" stop-color="#06001f"/><stop offset="1.000" stop-color="#06001f"/></linearGradient><linearGradient id="g25" gradientUnits="userSpaceOnUse" x1="0" y1="555" x2="0" y2="309"><stop offset="0.000" stop-color="#ffbc3c"/><stop offset="0.041" stop-color="#fe8325"/><stop offset="0.093" stop-color="#fe2b16"/><stop offset="0.163" stop-color="#fb151f"/><stop offset="0.285" stop-color="#e30d4f"/><stop offset="0.407" stop-color="#a3088a"/><stop offset="0.488" stop-color="#6e0689"/><stop offset="0.642" stop-color="#06001f"/><stop offset="1.000" stop-color="#06001f"/></linearGradient><linearGradient id="g26" gradientUnits="userSpaceOnUse" x1="0" y1="555" x2="0" y2="309"><stop offset="0.000" stop-color="#ffd84e"/><stop offset="0.041" stop-color="#ffa02f"/><stop offset="0.093" stop-color="#fe4018"/><stop offset="0.122" stop-color="#fd2618"/><stop offset="0.285" stop-color="#ee0e3e"/><stop offset="0.366" stop-color="#ce0a6e"/><stop offset="0.447" stop-color="#9b088c"/><stop offset="0.528" stop-color="#660688"/><stop offset="0.650" stop-color="#10012e"/><stop offset="0.691" stop-color="#06001f"/><stop offset="1.000" stop-color="#06001f"/></linearGradient><linearGradient id="g27" gradientUnits="userSpaceOnUse" x1="0" y1="555" x2="0" y2="309"><stop offset="0.000" stop-color="#feed65"/><stop offset="0.041" stop-color="#ffbc3c"/><stop offset="0.093" stop-color="#fe571b"/><stop offset="0.122" stop-color="#fe2d16"/><stop offset="0.244" stop-color="#f81424"/><stop offset="0.325" stop-color="#e90d45"/><stop offset="0.447" stop-color="#ae0983"/><stop offset="0.549" stop-color="#6c0689"/><stop offset="0.569" stop-color="#600684"/><stop offset="0.650" stop-color="#24024a"/><stop offset="0.691" stop-color="#06001f"/><stop offset="1.000" stop-color="#06001f"/></linearGradient><linearGradient id="g28" gradientUnits="userSpaceOnUse" x1="0" y1="555" x2="0" y2="309"><stop offset="0.000" stop-color="#fdf884"/><stop offset="0.041" stop-color="#ffd84e"/><stop offset="0.093" stop-color="#fe6e1e"/><stop offset="0.142" stop-color="#fe2a16"/><stop offset="0.244" stop-color="#fc181c"/><stop offset="0.366" stop-color="#e40d4c"/><stop offset="0.488" stop-color="#a70888"/><stop offset="0.569" stop-color="#730789"/><stop offset="0.610" stop-color="#5a057e"/><stop offset="0.650" stop-color="#3b0461"/><stop offset="0.691" stop-color="#170138"/><stop offset="0.732" stop-color="#06001f"/><stop offset="1.000" stop-color="#06001f"/></linearGradient><linearGradient id="g29" gradientUnits="userSpaceOnUse" x1="0" y1="555" x2="0" y2="309"><stop offset="0.000" stop-color="#fcff9a"/><stop offset="0.041" stop-color="#feed65"/><stop offset="0.081" stop-color="#ffa430"/><stop offset="0.142" stop-color="#fe3d18"/><stop offset="0.163" stop-color="#fe2d16"/><stop offset="0.285" stop-color="#fc171c"/><stop offset="0.366" stop-color="#ef0e3c"/><stop offset="0.447" stop-color="#d00a6b"/><stop offset="0.528" stop-color="#a0088c"/><stop offset="0.610" stop-color="#6f0689"/><stop offset="0.650" stop-color="#520577"/><stop offset="0.691" stop-color="#2c0352"/><stop offset="0.732" stop-color="#06001f"/><stop offset="1.000" stop-color="#06001f"/></linearGradient><linearGradient id="g30" gradientUnits="userSpaceOnUse" x1="0" y1="555" x2="0" y2="309"><stop offset="0.000" stop-color="#fbffa3"/><stop offset="0.041" stop-color="#fdf884"/><stop offset="0.081" stop-color="#ffc03e"/><stop offset="0.122" stop-color="#fe7320"/><stop offset="0.142" stop-color="#fe541b"/><stop offset="0.203" stop-color="#fe2a16"/><stop offset="0.325" stop-color="#fb151f"/><stop offset="0.407" stop-color="#eb0e43"/><stop offset="0.549" stop-color="#a50889"/><stop offset="0.650" stop-color="#690688"/><stop offset="0.691" stop-color="#430468"/><stop offset="0.732" stop-color="#170138"/><stop offset="0.772" stop-color="#06001f"/><stop offset="1.000" stop-color="#06001f"/></linearGradient><linearGradient id="g31" gradientUnits="userSpaceOnUse" x1="0" y1="555" x2="0" y2="309"><stop offset="0.000" stop-color="#faffac"/><stop offset="0.041" stop-color="#fcff9a"/><stop offset="0.073" stop-color="#ffea5c"/><stop offset="0.093" stop-color="#ffc441"/><stop offset="0.142" stop-color="#fe6b1e"/><stop offset="0.203" stop-color="#fe3d18"/><stop offset="0.244" stop-color="#fe2917"/><stop offset="0.366" stop-color="#f81424"/><stop offset="0.488" stop-color="#d70b61"/><stop offset="0.569" stop-color="#ac0984"/><stop offset="0.650" stop-color="#7c078a"/><stop offset="0.691" stop-color="#5a057e"/><stop offset="0.772" stop-color="#06001f"/><stop offset="1.000" stop-color="#06001f"/></linearGradient><linearGradient id="g32" gradientUnits="userSpaceOnUse" x1="0" y1="555" x2="0" y2="309"><stop offset="0.000" stop-color="#faffb0"/><stop offset="0.041" stop-color="#fbffa3"/><stop offset="0.073" stop-color="#fdf57b"/><stop offset="0.093" stop-color="#ffe053"/><stop offset="0.122" stop-color="#ffad33"/><stop offset="0.142" stop-color="#fe8726"/><stop offset="0.244" stop-color="#fe3918"/><stop offset="0.366" stop-color="#fc181c"/><stop offset="0.447" stop-color="#f00f3a"/><stop offset="0.569" stop-color="#be0979"/><stop offset="0.650" stop-color="#8f078b"/><stop offset="0.691" stop-color="#6f0689"/><stop offset="0.732" stop-color="#430468"/><stop offset="0.772" stop-color="#06001f"/><stop offset="1.000" stop-color="#06001f"/></linearGradient><linearGradient id="g33" gradientUnits="userSpaceOnUse" x1="0" y1="555" x2="0" y2="309"><stop offset="0.000" stop-color="#faffb0"/><stop offset="0.041" stop-color="#faffac"/><stop offset="0.073" stop-color="#fcff97"/><stop offset="0.093" stop-color="#fef06e"/><stop offset="0.122" stop-color="#ffc944"/><stop offset="0.142" stop-color="#ffa430"/><stop offset="0.203" stop-color="#fe6b1e"/><stop offset="0.285" stop-color="#fe3617"/><stop offset="0.407" stop-color="#fb161e"/><stop offset="0.488" stop-color="#ed0e3f"/><stop offset="0.650" stop-color="#a2088b"/><stop offset="0.691" stop-color="#82078a"/><stop offset="0.732" stop-color="#5a057e"/><stop offset="0.772" stop-color="#1a013c"/><stop offset="0.797" stop-color="#06001f"/><stop offset="1.000" stop-color="#06001f"/></linearGradient><linearGradient id="g34" gradientUnits="userSpaceOnUse" x1="0" y1="555" x2="0" y2="309"><stop offset="0.000" stop-color="#faffb0"/><stop offset="0.041" stop-color="#faffb0"/><stop offset="0.081" stop-color="#fcff9b"/><stop offset="0.093" stop-color="#fcfc8d"/><stop offset="0.122" stop-color="#ffe556"/><stop offset="0.142" stop-color="#ffc03e"/><stop offset="0.244" stop-color="#fe671d"/><stop offset="0.325" stop-color="#fe2c16"/><stop offset="0.447" stop-color="#f91522"/><stop offset="0.610" stop-color="#cb0a70"/><stop offset="0.691" stop-color="#95088b"/><stop offset="0.732" stop-color="#6f0689"/><stop offset="0.772" stop-color="#2f0355"/><stop offset="0.797" stop-color="#06001f"/><stop offset="1.000" stop-color="#06001f"/></linearGradient><linearGradient id="g35" gradientUnits="userSpaceOnUse" x1="0" y1="555" x2="0" y2="309"><stop offset="0.000" stop-color="#faffb0"/><stop offset="0.093" stop-color="#fcff9d"/><stop offset="0.122" stop-color="#fef273"/><stop offset="0.142" stop-color="#ffdc50"/><stop offset="0.203" stop-color="#ffa430"/><stop offset="0.366" stop-color="#fe2917"/><stop offset="0.447" stop-color="#fc191b"/><stop offset="0.650" stop-color="#c50a74"/><stop offset="0.691" stop-color="#a80887"/><stop offset="0.732" stop-color="#82078a"/><stop offset="0.772" stop-color="#46046b"/><stop offset="0.797" stop-color="#140134"/><stop offset="0.817" stop-color="#06001f"/><stop offset="1.000" stop-color="#06001f"/></linearGradient><linearGradient id="g36" gradientUnits="userSpaceOnUse" x1="0" y1="555" x2="0" y2="309"><stop offset="0.000" stop-color="#faffb0"/><stop offset="0.081" stop-color="#faffad"/><stop offset="0.122" stop-color="#fcfe92"/><stop offset="0.142" stop-color="#feef6a"/><stop offset="0.163" stop-color="#ffe556"/><stop offset="0.244" stop-color="#ffa02f"/><stop offset="0.366" stop-color="#fe3918"/><stop offset="0.488" stop-color="#fc161c"/><stop offset="0.650" stop-color="#d40b65"/><stop offset="0.691" stop-color="#ba097b"/><stop offset="0.732" stop-color="#95088b"/><stop offset="0.772" stop-color="#5d0682"/><stop offset="0.797" stop-color="#29024e"/><stop offset="0.813" stop-color="#06001f"/><stop offset="1.000" stop-color="#06001f"/></linearGradient><linearGradient id="g37" gradientUnits="userSpaceOnUse" x1="0" y1="555" x2="0" y2="309"><stop offset="0.000" stop-color="#faffb0"/><stop offset="0.093" stop-color="#faffaf"/><stop offset="0.122" stop-color="#fbff9e"/><stop offset="0.203" stop-color="#ffdc50"/><stop offset="0.285" stop-color="#ff9b2d"/><stop offset="0.407" stop-color="#fe2f16"/><stop offset="0.528" stop-color="#fa1520"/><stop offset="0.650" stop-color="#df0c54"/><stop offset="0.691" stop-color="#cb0a70"/><stop offset="0.732" stop-color="#a80887"/><stop offset="0.772" stop-color="#720689"/><stop offset="0.797" stop-color="#400465"/><stop offset="0.813" stop-color="#06001f"/><stop offset="1.000" stop-color="#06001f"/></linearGradient><linearGradient id="g38" gradientUnits="userSpaceOnUse" x1="0" y1="555" x2="0" y2="309"><stop offset="0.000" stop-color="#faffb0"/><stop offset="0.093" stop-color="#faffb0"/><stop offset="0.163" stop-color="#fcfe93"/><stop offset="0.203" stop-color="#feef6a"/><stop offset="0.285" stop-color="#ffb839"/><stop offset="0.366" stop-color="#fe671d"/><stop offset="0.447" stop-color="#fe2b16"/><stop offset="0.569" stop-color="#f91423"/><stop offset="0.650" stop-color="#ea0e44"/><stop offset="0.691" stop-color="#d80b60"/><stop offset="0.732" stop-color="#ba097b"/><stop offset="0.772" stop-color="#85078a"/><stop offset="0.797" stop-color="#57057b"/><stop offset="0.817" stop-color="#0c0027"/><stop offset="1.000" stop-color="#06001f"/></linearGradient><linearGradient id="g39" gradientUnits="userSpaceOnUse" x1="0" y1="555" x2="0" y2="309"><stop offset="0.000" stop-color="#faffb0"/><stop offset="0.122" stop-color="#faffb0"/><stop offset="0.203" stop-color="#fdfa89"/><stop offset="0.244" stop-color="#feed65"/><stop offset="0.285" stop-color="#ffd44b"/><stop offset="0.366" stop-color="#fe8325"/><stop offset="0.447" stop-color="#fe3d18"/><stop offset="0.488" stop-color="#fe2817"/><stop offset="0.569" stop-color="#fc181b"/><stop offset="0.650" stop-color="#f11036"/><stop offset="0.732" stop-color="#cb0a70"/><stop offset="0.772" stop-color="#98088b"/><stop offset="0.797" stop-color="#6c0689"/><stop offset="0.817" stop-color="#1f0244"/><stop offset="0.837" stop-color="#06001f"/><stop offset="1.000" stop-color="#06001f"/></linearGradient><linearGradient id="g40" gradientUnits="userSpaceOnUse" x1="0" y1="555" x2="0" y2="309"><stop offset="0.000" stop-color="#faffb0"/><stop offset="0.163" stop-color="#fbffa7"/><stop offset="0.203" stop-color="#fcff9b"/><stop offset="0.244" stop-color="#fdf884"/><stop offset="0.285" stop-color="#ffeb61"/><stop offset="0.366" stop-color="#ffa02f"/><stop offset="0.488" stop-color="#fe3417"/><stop offset="0.610" stop-color="#fc171c"/><stop offset="0.691" stop-color="#ee0e3e"/><stop offset="0.732" stop-color="#d80b60"/><stop offset="0.772" stop-color="#aa0885"/><stop offset="0.797" stop-color="#7f078a"/><stop offset="0.813" stop-color="#46046b"/><stop offset="0.817" stop-color="#36035b"/><stop offset="0.837" stop-color="#06001f"/><stop offset="1.000" stop-color="#06001f"/></linearGradient><linearGradient id="g41" gradientUnits="userSpaceOnUse" x1="0" y1="555" x2="0" y2="309"><stop offset="0.000" stop-color="#faffb0"/><stop offset="0.163" stop-color="#faffb0"/><stop offset="0.244" stop-color="#fcff9a"/><stop offset="0.285" stop-color="#fdf780"/><stop offset="0.325" stop-color="#ffe455"/><stop offset="0.407" stop-color="#ff932a"/><stop offset="0.528" stop-color="#fe2c16"/><stop offset="0.650" stop-color="#fb151e"/><stop offset="0.732" stop-color="#e30d4f"/><stop offset="0.772" stop-color="#bc097a"/><stop offset="0.797" stop-color="#92088b"/><stop offset="0.813" stop-color="#5d0681"/><stop offset="0.837" stop-color="#06001f"/><stop offset="1.000" stop-color="#06001f"/></linearGradient><linearGradient id="g42" gradientUnits="userSpaceOnUse" x1="0" y1="555" x2="0" y2="309"><stop offset="0.000" stop-color="#faffb0"/><stop offset="0.203" stop-color="#faffad"/><stop offset="0.285" stop-color="#fcff99"/><stop offset="0.325" stop-color="#fef273"/><stop offset="0.366" stop-color="#ffd84e"/><stop offset="0.407" stop-color="#ffb034"/><stop offset="0.549" stop-color="#fe3317"/><stop offset="0.650" stop-color="#fc1b1b"/><stop offset="0.691" stop-color="#f81426"/><stop offset="0.732" stop-color="#ee0e3e"/><stop offset="0.772" stop-color="#ce0a6e"/><stop offset="0.797" stop-color="#a50889"/><stop offset="0.817" stop-color="#640688"/><stop offset="0.837" stop-color="#06001f"/><stop offset="1.000" stop-color="#06001f"/></linearGradient><linearGradient id="g43" gradientUnits="userSpaceOnUse" x1="0" y1="555" x2="0" y2="309"><stop offset="0.000" stop-color="#faffb0"/><stop offset="0.244" stop-color="#faffac"/><stop offset="0.325" stop-color="#fcfd92"/><stop offset="0.366" stop-color="#feed65"/><stop offset="0.447" stop-color="#ffa530"/><stop offset="0.569" stop-color="#fe3b18"/><stop offset="0.691" stop-color="#fc171c"/><stop offset="0.732" stop-color="#f31132"/><stop offset="0.772" stop-color="#d90b5d"/><stop offset="0.797" stop-color="#b7097d"/><stop offset="0.817" stop-color="#770789"/><stop offset="0.837" stop-color="#090023"/><stop offset="1.000" stop-color="#06001f"/></linearGradient><linearGradient id="g44" gradientUnits="userSpaceOnUse" x1="0" y1="555" x2="0" y2="309"><stop offset="0.000" stop-color="#faffb0"/><stop offset="0.285" stop-color="#faffab"/><stop offset="0.325" stop-color="#fbff9e"/><stop offset="0.366" stop-color="#fdf884"/><stop offset="0.407" stop-color="#ffe858"/><stop offset="0.528" stop-color="#fe721f"/><stop offset="0.610" stop-color="#fe3617"/><stop offset="0.691" stop-color="#fd1d1a"/><stop offset="0.732" stop-color="#f81426"/><stop offset="0.772" stop-color="#e40d4c"/><stop offset="0.797" stop-color="#c90a71"/><stop offset="0.813" stop-color="#97088b"/><stop offset="0.817" stop-color="#8a078b"/><stop offset="0.837" stop-color="#1c0240"/><stop offset="0.854" stop-color="#06001f"/><stop offset="1.000" stop-color="#06001f"/></linearGradient><linearGradient id="g45" gradientUnits="userSpaceOnUse" x1="0" y1="555" x2="0" y2="309"><stop offset="0.000" stop-color="#faffb0"/><stop offset="0.285" stop-color="#faffb0"/><stop offset="0.366" stop-color="#fcff9a"/><stop offset="0.407" stop-color="#fef477"/><stop offset="0.447" stop-color="#ffdd51"/><stop offset="0.569" stop-color="#fe6a1d"/><stop offset="0.650" stop-color="#fe2e16"/><stop offset="0.732" stop-color="#fc171c"/><stop offset="0.772" stop-color="#ef0e3c"/><stop offset="0.797" stop-color="#d60b62"/><stop offset="0.817" stop-color="#9d088c"/><stop offset="0.837" stop-color="#330358"/><stop offset="0.854" stop-color="#06001f"/><stop offset="1.000" stop-color="#06001f"/></linearGradient><linearGradient id="g46" gradientUnits="userSpaceOnUse" x1="0" y1="555" x2="0" y2="309"><stop offset="0.000" stop-color="#faffb0"/><stop offset="0.325" stop-color="#faffb0"/><stop offset="0.407" stop-color="#fcff96"/><stop offset="0.447" stop-color="#feef6b"/><stop offset="0.528" stop-color="#ffab32"/><stop offset="0.691" stop-color="#fe2917"/><stop offset="0.732" stop-color="#fd1d1a"/><stop offset="0.772" stop-color="#f41130"/><stop offset="0.797" stop-color="#e10c51"/><stop offset="0.817" stop-color="#af0982"/><stop offset="0.837" stop-color="#4a046e"/><stop offset="0.854" stop-color="#06001f"/><stop offset="1.000" stop-color="#06001f"/></linearGradient><linearGradient id="g47" gradientUnits="userSpaceOnUse" x1="0" y1="555" x2="0" y2="309"><stop offset="0.000" stop-color="#faffb0"/><stop offset="0.366" stop-color="#faffac"/><stop offset="0.447" stop-color="#fdfb8a"/><stop offset="0.488" stop-color="#ffeb5f"/><stop offset="0.569" stop-color="#ffa22f"/><stop offset="0.691" stop-color="#fe3617"/><stop offset="0.772" stop-color="#f81424"/><stop offset="0.797" stop-color="#ec0e40"/><stop offset="0.817" stop-color="#c10976"/><stop offset="0.837" stop-color="#610685"/><stop offset="0.854" stop-color="#06001f"/><stop offset="1.000" stop-color="#06001f"/></linearGradient><linearGradient id="g48" gradientUnits="userSpaceOnUse" x1="0" y1="555" x2="0" y2="309"><stop offset="0.000" stop-color="#faffb0"/><stop offset="0.366" stop-color="#faffb0"/><stop offset="0.447" stop-color="#fcff9c"/><stop offset="0.488" stop-color="#fdf67e"/><stop offset="0.528" stop-color="#ffe355"/><stop offset="0.610" stop-color="#ff9b2d"/><stop offset="0.732" stop-color="#fe2917"/><stop offset="0.772" stop-color="#fc181c"/><stop offset="0.797" stop-color="#f21034"/><stop offset="0.817" stop-color="#d10a69"/><stop offset="0.837" stop-color="#740789"/><stop offset="0.854" stop-color="#06001f"/><stop offset="1.000" stop-color="#06001f"/></linearGradient><filter id="bx" color-interpolation-filters="sRGB" x="0" y="0" width="1" height="1" filterUnits="objectBoundingBox"><feGaussianBlur stdDeviation="0.5 0"/></filter><filter id="bm" color-interpolation-filters="sRGB" x="-0.05" y="-0.05" width="1.1" height="1.1"><feGaussianBlur stdDeviation="3 10"/></filter><clipPath id="cl0"><rect x="255" y="180" width="1572" height="375"/></clipPath><clipPath id="cl1"><rect x="255" y="179" width="1572" height="376"/></clipPath><linearGradient id="sh" x1="0" y1="0" x2="0" y2="1"><stop offset="0" stop-color="#ff9a2c" stop-opacity="0"/><stop offset="0.35" stop-color="#ff9a2c" stop-opacity="1"/><stop offset="0.65" stop-color="#ff9a2c" stop-opacity="1"/><stop offset="1" stop-color="#ff9a2c" stop-opacity="0"/></linearGradient><linearGradient id="sy" x1="0" y1="0" x2="0" y2="1"><stop offset="0" stop-color="#ffe060" stop-opacity="0"/><stop offset="0.35" stop-color="#ffe060" stop-opacity="1"/><stop offset="0.65" stop-color="#ffe060" stop-opacity="1"/><stop offset="1" stop-color="#ffe060" stop-opacity="0"/></linearGradient><linearGradient id="sr" x1="0" y1="0" x2="0" y2="1"><stop offset="0" stop-color="#f0182c" stop-opacity="0"/><stop offset="0.35" stop-color="#f0182c" stop-opacity="1"/><stop offset="0.65" stop-color="#f0182c" stop-opacity="1"/><stop offset="1" stop-color="#f0182c" stop-opacity="0"/></linearGradient><linearGradient id="sp" x1="0" y1="0" x2="0" y2="1"><stop offset="0" stop-color="#7a0a96" stop-opacity="0"/><stop offset="0.35" stop-color="#7a0a96" stop-opacity="1"/><stop offset="0.65" stop-color="#7a0a96" stop-opacity="1"/><stop offset="1" stop-color="#7a0a96" stop-opacity="0"/></linearGradient><linearGradient id="sm" x1="0" y1="0" x2="0" y2="1"><stop offset="0" stop-color="#c80e70" stop-opacity="0"/><stop offset="0.35" stop-color="#c80e70" stop-opacity="1"/><stop offset="0.65" stop-color="#c80e70" stop-opacity="1"/><stop offset="1" stop-color="#c80e70" stop-opacity="0"/></linearGradient><rect id="h00" width="1" height="14" fill="url(#sh)" opacity="0.8"/><rect id="h01" width="2" height="14" fill="url(#sh)" opacity="0.8"/><rect id="h10" width="1" height="24" fill="url(#sh)" opacity="0.8"/><rect id="h11" width="2" height="24" fill="url(#sh)" opacity="0.8"/><rect id="h20" width="1" height="38" fill="url(#sh)" opacity="0.8"/><rect id="h21" width="2" height="38" fill="url(#sh)" opacity="0.8"/><rect id="h30" width="1" height="56" fill="url(#sh)" opacity="0.8"/><rect id="h31" width="2" height="56" fill="url(#sh)" opacity="0.8"/><rect id="y00" width="1" height="14" fill="url(#sy)" opacity="0.85"/><rect id="y01" width="2" height="14" fill="url(#sy)" opacity="0.85"/><rect id="y10" width="1" height="24" fill="url(#sy)" opacity="0.85"/><rect id="y11" width="2" height="24" fill="url(#sy)" opacity="0.85"/><rect id="y20" width="1" height="38" fill="url(#sy)" opacity="0.85"/><rect id="y21" width="2" height="38" fill="url(#sy)" opacity="0.85"/><rect id="y30" width="1" height="56" fill="url(#sy)" opacity="0.85"/><rect id="y31" width="2" height="56" fill="url(#sy)" opacity="0.85"/><rect id="r00" width="1" height="14" fill="url(#sr)" opacity="0.75"/><rect id="r01" width="2" height="14" fill="url(#sr)" opacity="0.75"/><rect id="r10" width="1" height="24" fill="url(#sr)" opacity="0.75"/><rect id="r11" width="2" height="24" fill="url(#sr)" opacity="0.75"/><rect id="r20" width="1" height="38" fill="url(#sr)" opacity="0.75"/><rect id="r21" width="2" height="38" fill="url(#sr)" opacity="0.75"/><rect id="r30" width="1" height="56" fill="url(#sr)" opacity="0.75"/><rect id="r31" width="2" height="56" fill="url(#sr)" opacity="0.75"/><rect id="p00" width="1" height="14" fill="url(#sp)" opacity="0.7"/><rect id="p01" width="2" height="14" fill="url(#sp)" opacity="0.7"/><rect id="p10" width="1" height="24" fill="url(#sp)" opacity="0.7"/><rect id="p11" width="2" height="24" fill="url(#sp)" opacity="0.7"/><rect id="p20" width="1" height="38" fill="url(#sp)" opacity="0.7"/><rect id="p21" width="2" height="38" fill="url(#sp)" opacity="0.7"/><rect id="p30" width="1" height="56" fill="url(#sp)" opacity="0.7"/><rect id="p31" width="2" height="56" fill="url(#sp)" opacity="0.7"/><rect id="m00" width="1" height="14" fill="url(#sm)" opacity="0.7"/><rect id="m01" width="2" height="14" fill="url(#sm)" opacity="0.7"/><rect id="m10" width="1" height="24" fill="url(#sm)" opacity="0.7"/><rect id="m11" width="2" height="24" fill="url(#sm)" opacity="0.7"/><rect id="m20" width="1" height="38" fill="url(#sm)" opacity="0.7"/><rect id="m21" width="2" height="38" fill="url(#sm)" opacity="0.7"/><rect id="m30" width="1" height="56" fill="url(#sm)" opacity="0.7"/><rect id="m31" width="2" height="56" fill="url(#sm)" opacity="0.7"/></defs><g transform="translate(0,0)"><rect x="255" y="180" width="1572" height="375" fill="rgb(6,0,31)"/><g clip-path="url(#cl0)"><g filter="url(#bx)"><rect x="251" y="170" width="1580" height="395" fill="none"/><path fill="url(#g3)" d="M1823 309h2v246h-2z"/><path fill="url(#g6)" d="M1825 309h1v246h-1z"/><path fill="url(#g9)" d="M1822 309h1v246h-1z"/><path fill="url(#g12)" d="M1826 309h1v246h-1z"/><path fill="url(#g13)" d="M1821 309h1v246h-1z"/><path fill="url(#g18)" d="M1818 309h3v246h-3z"/><path fill="url(#g20)" d="M255 309h1v246h-1zM1717 309h1v246h-1z"/><path fill="url(#g21)" d="M529 309h2v246h-2zM536 309h2v246h-2zM539 309h1v246h-1zM699 309h2v246h-2zM708 309h1v246h-1zM919 309h1v246h-1zM1013 309h2v246h-2zM1043 309h1v246h-1zM1564 309h2v246h-2zM1713 309h2v246h-2z"/><path fill="url(#g22)" d="M308 309h1v246h-1zM439 309h1v246h-1zM675 309h2v246h-2zM680 309h1v246h-1zM943 309h1v246h-1zM991 309h2v246h-2zM1038 309h2v246h-2zM1536 309h1v246h-1zM1589 309h1v246h-1zM1710 309h2v246h-2z"/><path fill="url(#g23)" d="M257 309h1v246h-1zM262 309h1v246h-1zM264 309h1v246h-1zM443 309h2v246h-2zM459 309h1v246h-1zM502 309h2v246h-2zM513 309h2v246h-2zM544 309h2v246h-2zM687 309h1v246h-1zM815 309h1v246h-1zM876 309h1v246h-1zM945 309h2v246h-2zM949 309h2v246h-2zM982 309h3v246h-3zM1036 309h1v246h-1zM1181 309h1v246h-1zM1532 309h1v246h-1zM1581 309h1v246h-1zM1718 309h1v246h-1z"/><path fill="url(#g24)" d="M324 309h1v246h-1zM338 309h1v246h-1zM369 309h3v246h-3zM426 309h2v246h-2zM445 309h1v246h-1zM523 309h1v246h-1zM611 309h1v246h-1zM624 309h1v246h-1zM689 309h1v246h-1zM695 309h2v246h-2zM718 309h1v246h-1zM729 309h2v246h-2zM886 309h2v246h-2zM907 309h1v246h-1zM947 309h1v246h-1zM954 309h2v246h-2zM1159 309h1v246h-1zM1196 309h1v246h-1zM1577 309h1v246h-1zM1585 309h2v246h-2zM1707 309h1v246h-1zM1712 309h1v246h-1zM1719 309h2v246h-2z"/><path fill="url(#g25)" d="M279 309h2v246h-2zM282 309h1v246h-1zM292 309h2v246h-2zM296 309h1v246h-1zM376 309h1v246h-1zM411 309h2v246h-2zM430 309h1v246h-1zM437 309h1v246h-1zM471 309h3v246h-3zM546 309h1v246h-1zM567 309h2v246h-2zM595 309h1v246h-1zM620 309h1v246h-1zM846 309h1v246h-1zM850 309h2v246h-2zM884 309h1v246h-1zM910 309h2v246h-2zM912 309h2v246h-2zM925 309h2v246h-2zM969 309h2v246h-2zM993 309h3v246h-3zM1007 309h1v246h-1zM1044 309h1v246h-1zM1061 309h1v246h-1zM1165 309h2v246h-2zM1171 309h3v246h-3zM1199 309h3v246h-3zM1514 309h1v246h-1zM1534 309h1v246h-1zM1547 309h1v246h-1zM1578 309h2v246h-2zM1708 309h1v246h-1zM1753 309h1v246h-1zM1780 309h1v246h-1zM1782 309h2v246h-2zM1809 309h2v246h-2z"/><path fill="url(#g26)" d="M256 309h1v246h-1zM258 309h2v246h-2zM286 309h1v246h-1zM289 309h1v246h-1zM315 309h1v246h-1zM323 309h1v246h-1zM347 309h1v246h-1zM397 309h2v246h-2zM436 309h1v246h-1zM450 309h1v246h-1zM452 309h1v246h-1zM460 309h2v246h-2zM464 309h2v246h-2zM519 309h2v246h-2zM555 309h2v246h-2zM561 309h2v246h-2zM633 309h1v246h-1zM690 309h1v246h-1zM692 309h1v246h-1zM704 309h1v246h-1zM711 309h1v246h-1zM728 309h1v246h-1zM772 309h1v246h-1zM803 309h2v246h-2zM831 309h2v246h-2zM891 309h2v246h-2zM896 309h1v246h-1zM909 309h1v246h-1zM921 309h3v246h-3zM935 309h2v246h-2zM940 309h2v246h-2zM942 309h1v246h-1zM959 309h1v246h-1zM981 309h1v246h-1zM1029 309h1v246h-1zM1033 309h1v246h-1zM1055 309h2v246h-2zM1064 309h1v246h-1zM1079 309h2v246h-2zM1132 309h1v246h-1zM1164 309h1v246h-1zM1203 309h2v246h-2zM1212 309h1v246h-1zM1230 309h1v246h-1zM1297 309h2v246h-2zM1320 309h2v246h-2zM1511 309h2v246h-2zM1517 309h3v246h-3zM1525 309h2v246h-2zM1527 309h1v246h-1zM1543 309h1v246h-1zM1544 309h2v246h-2zM1548 309h2v246h-2zM1554 309h2v246h-2zM1569 309h1v246h-1zM1580 309h1v246h-1zM1584 309h1v246h-1zM1587 309h2v246h-2zM1675 309h1v246h-1zM1705 309h2v246h-2zM1709 309h1v246h-1zM1715 309h1v246h-1zM1805 309h1v246h-1z"/><path fill="url(#g27)" d="M261 309h1v246h-1zM266 309h1v246h-1zM277 309h2v246h-2zM281 309h1v246h-1zM284 309h2v246h-2zM301 309h1v246h-1zM302 309h2v246h-2zM310 309h2v246h-2zM320 309h1v246h-1zM328 309h2v246h-2zM330 309h2v246h-2zM343 309h1v246h-1zM351 309h1v246h-1zM366 309h1v246h-1zM403 309h1v246h-1zM406 309h1v246h-1zM418 309h1v246h-1zM429 309h1v246h-1zM432 309h1v246h-1zM453 309h2v246h-2zM456 309h1v246h-1zM469 309h2v246h-2zM486 309h2v246h-2zM516 309h3v246h-3zM528 309h1v246h-1zM533 309h2v246h-2zM538 309h1v246h-1zM576 309h2v246h-2zM641 309h2v246h-2zM702 309h1v246h-1zM705 309h1v246h-1zM713 309h2v246h-2zM742 309h2v246h-2zM763 309h3v246h-3zM782 309h2v246h-2zM784 309h2v246h-2zM817 309h1v246h-1zM822 309h1v246h-1zM825 309h1v246h-1zM829 309h1v246h-1zM841 309h2v246h-2zM932 309h2v246h-2zM953 309h1v246h-1zM964 309h1v246h-1zM965 309h2v246h-2zM967 309h1v246h-1zM977 309h2v246h-2zM997 309h1v246h-1zM1001 309h1v246h-1zM1006 309h1v246h-1zM1009 309h2v246h-2zM1102 309h2v246h-2zM1119 309h2v246h-2zM1134 309h1v246h-1zM1176 309h1v246h-1zM1206 309h1v246h-1zM1208 309h1v246h-1zM1513 309h1v246h-1zM1520 309h2v246h-2zM1656 309h1v246h-1zM1696 309h1v246h-1zM1725 309h2v246h-2zM1754 309h2v246h-2zM1760 309h1v246h-1zM1763 309h1v246h-1zM1806 309h2v246h-2z"/><path fill="url(#g28)" d="M265 309h1v246h-1zM295 309h1v246h-1zM332 309h2v246h-2zM334 309h1v246h-1zM339 309h1v246h-1zM349 309h2v246h-2zM355 309h1v246h-1zM374 309h1v246h-1zM386 309h1v246h-1zM404 309h1v246h-1zM421 309h1v246h-1zM422 309h1v246h-1zM447 309h2v246h-2zM467 309h1v246h-1zM493 309h1v246h-1zM508 309h2v246h-2zM524 309h1v246h-1zM549 309h3v246h-3zM564 309h2v246h-2zM566 309h1v246h-1zM573 309h1v246h-1zM583 309h2v246h-2zM607 309h1v246h-1zM614 309h2v246h-2zM627 309h1v246h-1zM628 309h1v246h-1zM644 309h2v246h-2zM667 309h2v246h-2zM673 309h1v246h-1zM691 309h1v246h-1zM721 309h2v246h-2zM786 309h1v246h-1zM807 309h2v246h-2zM848 309h2v246h-2zM856 309h2v246h-2zM859 309h1v246h-1zM870 309h1v246h-1zM916 309h1v246h-1zM927 309h1v246h-1zM938 309h2v246h-2zM948 309h1v246h-1zM951 309h2v246h-2zM956 309h1v246h-1zM979 309h2v246h-2zM985 309h2v246h-2zM1000 309h1v246h-1zM1057 309h1v246h-1zM1087 309h2v246h-2zM1096 309h2v246h-2zM1153 309h1v246h-1zM1187 309h2v246h-2zM1193 309h1v246h-1zM1209 309h2v246h-2zM1224 309h1v246h-1zM1234 309h2v246h-2zM1245 309h2v246h-2zM1266 309h3v246h-3zM1301 309h3v246h-3zM1311 309h2v246h-2zM1356 309h2v246h-2zM1361 309h1v246h-1zM1438 309h1v246h-1zM1465 309h2v246h-2zM1479 309h1v246h-1zM1507 309h1v246h-1zM1509 309h1v246h-1zM1530 309h1v246h-1zM1550 309h2v246h-2zM1552 309h2v246h-2zM1559 309h1v246h-1zM1574 309h3v246h-3zM1608 309h1v246h-1zM1614 309h3v246h-3zM1658 309h2v246h-2zM1716 309h1v246h-1zM1766 309h2v246h-2zM1769 309h1v246h-1zM1802 309h1v246h-1zM1812 309h1v246h-1z"/><path fill="url(#g29)" d="M267 309h2v246h-2zM271 309h3v246h-3zM290 309h2v246h-2zM312 309h1v246h-1zM321 309h2v246h-2zM336 309h2v246h-2zM340 309h2v246h-2zM352 309h1v246h-1zM358 309h2v246h-2zM378 309h1v246h-1zM381 309h2v246h-2zM384 309h2v246h-2zM393 309h1v246h-1zM401 309h2v246h-2zM408 309h2v246h-2zM413 309h1v246h-1zM417 309h1v246h-1zM423 309h1v246h-1zM449 309h1v246h-1zM512 309h1v246h-1zM526 309h1v246h-1zM542 309h2v246h-2zM552 309h3v246h-3zM557 309h2v246h-2zM571 309h2v246h-2zM603 309h1v246h-1zM608 309h2v246h-2zM612 309h1v246h-1zM617 309h2v246h-2zM647 309h2v246h-2zM716 309h2v246h-2zM720 309h1v246h-1zM732 309h2v246h-2zM759 309h2v246h-2zM761 309h1v246h-1zM768 309h1v246h-1zM773 309h1v246h-1zM776 309h3v246h-3zM781 309h1v246h-1zM788 309h1v246h-1zM791 309h3v246h-3zM798 309h1v246h-1zM834 309h2v246h-2zM844 309h2v246h-2zM858 309h1v246h-1zM897 309h2v246h-2zM905 309h2v246h-2zM930 309h2v246h-2zM974 309h2v246h-2zM976 309h1v246h-1zM989 309h1v246h-1zM998 309h2v246h-2zM1004 309h2v246h-2zM1022 309h1v246h-1zM1026 309h1v246h-1zM1030 309h1v246h-1zM1050 309h1v246h-1zM1063 309h1v246h-1zM1078 309h1v246h-1zM1113 309h2v246h-2zM1147 309h3v246h-3zM1169 309h1v246h-1zM1214 309h1v246h-1zM1231 309h1v246h-1zM1244 309h1v246h-1zM1289 309h1v246h-1zM1294 309h2v246h-2zM1385 309h1v246h-1zM1412 309h1v246h-1zM1495 309h1v246h-1zM1510 309h1v246h-1zM1528 309h2v246h-2zM1597 309h1v246h-1zM1611 309h1v246h-1zM1735 309h1v246h-1zM1736 309h2v246h-2zM1741 309h1v246h-1zM1746 309h2v246h-2zM1761 309h1v246h-1zM1803 309h1v246h-1zM1817 309h1v246h-1z"/><path fill="url(#g30)" d="M297 309h2v246h-2zM299 309h2v246h-2zM314 309h1v246h-1zM316 309h1v246h-1zM317 309h2v246h-2zM335 309h1v246h-1zM356 309h1v246h-1zM362 309h2v246h-2zM373 309h1v246h-1zM387 309h1v246h-1zM388 309h1v246h-1zM428 309h1v246h-1zM441 309h2v246h-2zM468 309h1v246h-1zM474 309h1v246h-1zM478 309h1v246h-1zM498 309h1v246h-1zM504 309h1v246h-1zM505 309h2v246h-2zM521 309h1v246h-1zM547 309h2v246h-2zM560 309h1v246h-1zM579 309h3v246h-3zM592 309h1v246h-1zM610 309h1v246h-1zM616 309h1v246h-1zM639 309h2v246h-2zM646 309h1v246h-1zM661 309h2v246h-2zM664 309h2v246h-2zM666 309h1v246h-1zM669 309h2v246h-2zM671 309h2v246h-2zM685 309h2v246h-2zM703 309h1v246h-1zM712 309h1v246h-1zM726 309h2v246h-2zM736 309h1v246h-1zM749 309h1v246h-1zM799 309h1v246h-1zM820 309h2v246h-2zM866 309h2v246h-2zM868 309h1v246h-1zM875 309h1v246h-1zM877 309h3v246h-3zM880 309h2v246h-2zM894 309h1v246h-1zM895 309h1v246h-1zM901 309h2v246h-2zM914 309h2v246h-2zM937 309h1v246h-1zM962 309h2v246h-2zM987 309h2v246h-2zM1008 309h1v246h-1zM1040 309h2v246h-2zM1072 309h1v246h-1zM1098 309h2v246h-2zM1107 309h2v246h-2zM1109 309h2v246h-2zM1118 309h1v246h-1zM1150 309h1v246h-1zM1160 309h1v246h-1zM1177 309h1v246h-1zM1191 309h2v246h-2zM1225 309h2v246h-2zM1238 309h2v246h-2zM1248 309h2v246h-2zM1352 309h2v246h-2zM1426 309h1v246h-1zM1440 309h1v246h-1zM1448 309h1v246h-1zM1499 309h1v246h-1zM1522 309h2v246h-2zM1531 309h1v246h-1zM1535 309h1v246h-1zM1537 309h2v246h-2zM1542 309h1v246h-1zM1560 309h1v246h-1zM1561 309h3v246h-3zM1566 309h3v246h-3zM1571 309h1v246h-1zM1572 309h2v246h-2zM1617 309h2v246h-2zM1628 309h1v246h-1zM1648 309h2v246h-2zM1655 309h1v246h-1zM1666 309h1v246h-1zM1672 309h1v246h-1zM1680 309h1v246h-1zM1691 309h3v246h-3zM1729 309h1v246h-1zM1758 309h1v246h-1zM1791 309h2v246h-2zM1813 309h2v246h-2zM1816 309h1v246h-1z"/><path fill="url(#g31)" d="M269 309h2v246h-2zM283 309h1v246h-1zM372 309h1v246h-1zM383 309h1v246h-1zM389 309h2v246h-2zM407 309h1v246h-1zM414 309h2v246h-2zM424 309h2v246h-2zM440 309h1v246h-1zM451 309h1v246h-1zM462 309h1v246h-1zM463 309h1v246h-1zM482 309h1v246h-1zM525 309h1v246h-1zM531 309h2v246h-2zM540 309h2v246h-2zM574 309h1v246h-1zM587 309h1v246h-1zM604 309h1v246h-1zM605 309h2v246h-2zM634 309h1v246h-1zM643 309h1v246h-1zM649 309h1v246h-1zM659 309h1v246h-1zM693 309h2v246h-2zM697 309h2v246h-2zM701 309h1v246h-1zM739 309h1v246h-1zM744 309h2v246h-2zM746 309h2v246h-2zM750 309h2v246h-2zM756 309h1v246h-1zM774 309h2v246h-2zM780 309h1v246h-1zM801 309h2v246h-2zM810 309h1v246h-1zM811 309h2v246h-2zM816 309h1v246h-1zM818 309h1v246h-1zM823 309h1v246h-1zM824 309h1v246h-1zM854 309h2v246h-2zM882 309h1v246h-1zM908 309h1v246h-1zM924 309h1v246h-1zM928 309h2v246h-2zM944 309h1v246h-1zM957 309h2v246h-2zM960 309h1v246h-1zM961 309h1v246h-1zM968 309h1v246h-1zM971 309h3v246h-3zM996 309h1v246h-1zM1002 309h2v246h-2zM1011 309h2v246h-2zM1016 309h1v246h-1zM1018 309h1v246h-1zM1019 309h2v246h-2zM1023 309h1v246h-1zM1024 309h2v246h-2zM1031 309h2v246h-2zM1034 309h2v246h-2zM1047 309h2v246h-2zM1069 309h1v246h-1zM1117 309h1v246h-1zM1124 309h1v246h-1zM1129 309h1v246h-1zM1155 309h2v246h-2zM1161 309h2v246h-2zM1167 309h1v246h-1zM1178 309h3v246h-3zM1195 309h1v246h-1zM1202 309h1v246h-1zM1270 309h1v246h-1zM1278 309h1v246h-1zM1284 309h1v246h-1zM1290 309h2v246h-2zM1306 309h2v246h-2zM1308 309h1v246h-1zM1309 309h2v246h-2zM1315 309h2v246h-2zM1337 309h2v246h-2zM1400 309h2v246h-2zM1402 309h2v246h-2zM1408 309h1v246h-1zM1417 309h2v246h-2zM1423 309h1v246h-1zM1452 309h2v246h-2zM1456 309h1v246h-1zM1468 309h1v246h-1zM1493 309h2v246h-2zM1515 309h2v246h-2zM1533 309h1v246h-1zM1539 309h1v246h-1zM1556 309h1v246h-1zM1582 309h2v246h-2zM1598 309h3v246h-3zM1631 309h2v246h-2zM1634 309h1v246h-1zM1670 309h1v246h-1zM1678 309h1v246h-1zM1703 309h2v246h-2zM1724 309h1v246h-1zM1756 309h2v246h-2zM1770 309h1v246h-1zM1772 309h2v246h-2zM1799 309h3v246h-3zM1804 309h1v246h-1z"/><path fill="url(#g32)" d="M263 309h1v246h-1zM274 309h2v246h-2zM287 309h2v246h-2zM304 309h1v246h-1zM306 309h2v246h-2zM313 309h1v246h-1zM325 309h3v246h-3zM377 309h1v246h-1zM399 309h2v246h-2zM419 309h2v246h-2zM435 309h1v246h-1zM438 309h1v246h-1zM457 309h2v246h-2zM475 309h3v246h-3zM480 309h2v246h-2zM497 309h1v246h-1zM501 309h1v246h-1zM510 309h1v246h-1zM527 309h1v246h-1zM535 309h1v246h-1zM575 309h1v246h-1zM588 309h2v246h-2zM599 309h2v246h-2zM635 309h2v246h-2zM637 309h2v246h-2zM651 309h3v246h-3zM674 309h1v246h-1zM677 309h1v246h-1zM678 309h2v246h-2zM681 309h1v246h-1zM682 309h1v246h-1zM684 309h1v246h-1zM688 309h1v246h-1zM706 309h2v246h-2zM709 309h2v246h-2zM737 309h2v246h-2zM752 309h1v246h-1zM771 309h1v246h-1zM779 309h1v246h-1zM787 309h1v246h-1zM795 309h3v246h-3zM800 309h1v246h-1zM813 309h2v246h-2zM827 309h2v246h-2zM840 309h1v246h-1zM847 309h1v246h-1zM860 309h1v246h-1zM861 309h2v246h-2zM890 309h1v246h-1zM917 309h2v246h-2zM920 309h1v246h-1zM990 309h1v246h-1zM1015 309h1v246h-1zM1037 309h1v246h-1zM1042 309h1v246h-1zM1051 309h2v246h-2zM1065 309h1v246h-1zM1067 309h1v246h-1zM1070 309h2v246h-2zM1122 309h2v246h-2zM1127 309h1v246h-1zM1137 309h2v246h-2zM1141 309h3v246h-3zM1157 309h2v246h-2zM1163 309h1v246h-1zM1170 309h1v246h-1zM1174 309h2v246h-2zM1194 309h1v246h-1zM1219 309h1v246h-1zM1221 309h1v246h-1zM1223 309h1v246h-1zM1259 309h1v246h-1zM1275 309h1v246h-1zM1329 309h2v246h-2zM1340 309h1v246h-1zM1341 309h1v246h-1zM1354 309h1v246h-1zM1394 309h2v246h-2zM1398 309h2v246h-2zM1415 309h1v246h-1zM1420 309h1v246h-1zM1460 309h2v246h-2zM1501 309h1v246h-1zM1506 309h1v246h-1zM1591 309h1v246h-1zM1593 309h2v246h-2zM1595 309h2v246h-2zM1601 309h3v246h-3zM1642 309h1v246h-1zM1727 309h2v246h-2zM1734 309h1v246h-1zM1739 309h2v246h-2zM1749 309h2v246h-2zM1764 309h2v246h-2zM1777 309h1v246h-1zM1795 309h2v246h-2z"/><path fill="url(#g33)" d="M309 309h1v246h-1zM319 309h1v246h-1zM344 309h3v246h-3zM348 309h1v246h-1zM367 309h2v246h-2zM375 309h1v246h-1zM391 309h2v246h-2zM395 309h2v246h-2zM431 309h1v246h-1zM433 309h1v246h-1zM434 309h1v246h-1zM446 309h1v246h-1zM483 309h1v246h-1zM488 309h3v246h-3zM491 309h1v246h-1zM499 309h2v246h-2zM507 309h1v246h-1zM515 309h1v246h-1zM597 309h2v246h-2zM601 309h1v246h-1zM602 309h1v246h-1zM619 309h1v246h-1zM621 309h2v246h-2zM625 309h2v246h-2zM629 309h2v246h-2zM654 309h2v246h-2zM656 309h3v246h-3zM660 309h1v246h-1zM719 309h1v246h-1zM723 309h2v246h-2zM753 309h2v246h-2zM769 309h2v246h-2zM789 309h1v246h-1zM805 309h2v246h-2zM819 309h1v246h-1zM836 309h2v246h-2zM843 309h1v246h-1zM852 309h1v246h-1zM864 309h2v246h-2zM869 309h1v246h-1zM873 309h2v246h-2zM885 309h1v246h-1zM899 309h2v246h-2zM1028 309h1v246h-1zM1045 309h2v246h-2zM1053 309h2v246h-2zM1058 309h2v246h-2zM1060 309h1v246h-1zM1130 309h1v246h-1zM1211 309h1v246h-1zM1257 309h1v246h-1zM1286 309h2v246h-2zM1314 309h1v246h-1zM1323 309h2v246h-2zM1327 309h1v246h-1zM1339 309h1v246h-1zM1346 309h2v246h-2zM1370 309h1v246h-1zM1371 309h2v246h-2zM1377 309h3v246h-3zM1396 309h2v246h-2zM1416 309h1v246h-1zM1425 309h1v246h-1zM1429 309h2v246h-2zM1433 309h1v246h-1zM1469 309h3v246h-3zM1477 309h2v246h-2zM1483 309h1v246h-1zM1484 309h1v246h-1zM1496 309h2v246h-2zM1590 309h1v246h-1zM1592 309h1v246h-1zM1604 309h1v246h-1zM1650 309h2v246h-2zM1662 309h2v246h-2zM1679 309h1v246h-1zM1682 309h2v246h-2zM1698 309h1v246h-1zM1722 309h2v246h-2zM1742 309h1v246h-1zM1744 309h2v246h-2zM1751 309h1v246h-1zM1752 309h1v246h-1zM1768 309h1v246h-1zM1774 309h1v246h-1zM1775 309h2v246h-2zM1784 309h2v246h-2zM1808 309h1v246h-1z"/><path fill="url(#g34)" d="M353 309h2v246h-2zM360 309h2v246h-2zM365 309h1v246h-1zM379 309h2v246h-2zM405 309h1v246h-1zM410 309h1v246h-1zM416 309h1v246h-1zM492 309h1v246h-1zM495 309h2v246h-2zM559 309h1v246h-1zM563 309h1v246h-1zM590 309h1v246h-1zM594 309h1v246h-1zM663 309h1v246h-1zM740 309h2v246h-2zM757 309h2v246h-2zM766 309h2v246h-2zM826 309h1v246h-1zM830 309h1v246h-1zM833 309h1v246h-1zM838 309h1v246h-1zM883 309h1v246h-1zM893 309h1v246h-1zM1049 309h1v246h-1zM1066 309h1v246h-1zM1075 309h1v246h-1zM1091 309h2v246h-2zM1106 309h1v246h-1zM1144 309h1v246h-1zM1145 309h1v246h-1zM1185 309h2v246h-2zM1189 309h1v246h-1zM1207 309h1v246h-1zM1213 309h1v246h-1zM1217 309h2v246h-2zM1227 309h2v246h-2zM1229 309h1v246h-1zM1233 309h1v246h-1zM1277 309h1v246h-1zM1279 309h2v246h-2zM1282 309h1v246h-1zM1283 309h1v246h-1zM1285 309h1v246h-1zM1343 309h2v246h-2zM1350 309h2v246h-2zM1367 309h1v246h-1zM1388 309h1v246h-1zM1389 309h2v246h-2zM1391 309h1v246h-1zM1441 309h1v246h-1zM1443 309h2v246h-2zM1500 309h1v246h-1zM1503 309h2v246h-2zM1546 309h1v246h-1zM1570 309h1v246h-1zM1613 309h1v246h-1zM1621 309h2v246h-2zM1629 309h2v246h-2zM1636 309h2v246h-2zM1643 309h2v246h-2zM1674 309h1v246h-1zM1681 309h1v246h-1zM1689 309h2v246h-2zM1730 309h2v246h-2zM1732 309h1v246h-1zM1743 309h1v246h-1zM1778 309h2v246h-2zM1793 309h1v246h-1zM1794 309h1v246h-1zM1797 309h2v246h-2z"/><path fill="url(#g35)" d="M455 309h1v246h-1zM479 309h1v246h-1zM484 309h2v246h-2zM494 309h1v246h-1zM569 309h1v246h-1zM578 309h1v246h-1zM586 309h1v246h-1zM623 309h1v246h-1zM631 309h1v246h-1zM632 309h1v246h-1zM725 309h1v246h-1zM762 309h1v246h-1zM794 309h1v246h-1zM839 309h1v246h-1zM871 309h1v246h-1zM888 309h2v246h-2zM903 309h2v246h-2zM934 309h1v246h-1zM1027 309h1v246h-1zM1068 309h1v246h-1zM1128 309h1v246h-1zM1151 309h2v246h-2zM1182 309h2v246h-2zM1197 309h2v246h-2zM1205 309h1v246h-1zM1242 309h2v246h-2zM1250 309h3v246h-3zM1269 309h1v246h-1zM1272 309h1v246h-1zM1296 309h1v246h-1zM1304 309h2v246h-2zM1313 309h1v246h-1zM1317 309h1v246h-1zM1335 309h2v246h-2zM1386 309h2v246h-2zM1434 309h1v246h-1zM1435 309h2v246h-2zM1451 309h1v246h-1zM1462 309h1v246h-1zM1474 309h1v246h-1zM1476 309h1v246h-1zM1487 309h2v246h-2zM1489 309h1v246h-1zM1540 309h1v246h-1zM1541 309h1v246h-1zM1612 309h1v246h-1zM1635 309h1v246h-1zM1640 309h2v246h-2zM1677 309h1v246h-1zM1684 309h1v246h-1zM1685 309h1v246h-1zM1733 309h1v246h-1zM1759 309h1v246h-1zM1762 309h1v246h-1zM1771 309h1v246h-1zM1787 309h2v246h-2zM1789 309h1v246h-1zM1811 309h1v246h-1z"/><path fill="url(#g36)" d="M260 309h1v246h-1zM276 309h1v246h-1zM305 309h1v246h-1zM342 309h1v246h-1zM394 309h1v246h-1zM466 309h1v246h-1zM582 309h1v246h-1zM596 309h1v246h-1zM613 309h1v246h-1zM650 309h1v246h-1zM683 309h1v246h-1zM731 309h1v246h-1zM755 309h1v246h-1zM863 309h1v246h-1zM1073 309h2v246h-2zM1076 309h2v246h-2zM1081 309h2v246h-2zM1083 309h1v246h-1zM1084 309h1v246h-1zM1089 309h2v246h-2zM1094 309h2v246h-2zM1104 309h1v246h-1zM1115 309h2v246h-2zM1125 309h2v246h-2zM1131 309h1v246h-1zM1135 309h2v246h-2zM1168 309h1v246h-1zM1184 309h1v246h-1zM1190 309h1v246h-1zM1215 309h1v246h-1zM1256 309h1v246h-1zM1260 309h1v246h-1zM1271 309h1v246h-1zM1293 309h1v246h-1zM1333 309h1v246h-1zM1348 309h2v246h-2zM1362 309h2v246h-2zM1376 309h1v246h-1zM1406 309h1v246h-1zM1428 309h1v246h-1zM1432 309h1v246h-1zM1437 309h1v246h-1zM1473 309h1v246h-1zM1480 309h1v246h-1zM1490 309h1v246h-1zM1491 309h1v246h-1zM1502 309h1v246h-1zM1505 309h1v246h-1zM1524 309h1v246h-1zM1557 309h1v246h-1zM1558 309h1v246h-1zM1605 309h2v246h-2zM1609 309h2v246h-2zM1623 309h1v246h-1zM1645 309h2v246h-2zM1667 309h1v246h-1zM1686 309h2v246h-2zM1688 309h1v246h-1zM1721 309h1v246h-1zM1748 309h1v246h-1zM1781 309h1v246h-1zM1786 309h1v246h-1z"/><path fill="url(#g37)" d="M522 309h1v246h-1zM570 309h1v246h-1zM734 309h1v246h-1zM735 309h1v246h-1zM1062 309h1v246h-1zM1085 309h2v246h-2zM1100 309h1v246h-1zM1111 309h2v246h-2zM1133 309h1v246h-1zM1139 309h2v246h-2zM1146 309h1v246h-1zM1232 309h1v246h-1zM1236 309h2v246h-2zM1240 309h1v246h-1zM1247 309h1v246h-1zM1253 309h2v246h-2zM1261 309h1v246h-1zM1263 309h1v246h-1zM1264 309h1v246h-1zM1265 309h1v246h-1zM1273 309h2v246h-2zM1299 309h2v246h-2zM1318 309h2v246h-2zM1325 309h1v246h-1zM1328 309h1v246h-1zM1331 309h2v246h-2zM1334 309h1v246h-1zM1345 309h1v246h-1zM1364 309h1v246h-1zM1368 309h1v246h-1zM1373 309h2v246h-2zM1381 309h2v246h-2zM1383 309h2v246h-2zM1392 309h2v246h-2zM1404 309h2v246h-2zM1409 309h2v246h-2zM1413 309h1v246h-1zM1419 309h1v246h-1zM1424 309h1v246h-1zM1431 309h1v246h-1zM1442 309h1v246h-1zM1446 309h1v246h-1zM1447 309h1v246h-1zM1449 309h2v246h-2zM1454 309h2v246h-2zM1459 309h1v246h-1zM1475 309h1v246h-1zM1481 309h1v246h-1zM1492 309h1v246h-1zM1619 309h1v246h-1zM1625 309h2v246h-2zM1638 309h2v246h-2zM1647 309h1v246h-1zM1652 309h2v246h-2zM1657 309h1v246h-1zM1661 309h1v246h-1zM1664 309h2v246h-2zM1673 309h1v246h-1zM1676 309h1v246h-1z"/><path fill="url(#g38)" d="M294 309h1v246h-1zM511 309h1v246h-1zM715 309h1v246h-1zM809 309h1v246h-1zM853 309h1v246h-1zM872 309h1v246h-1zM1017 309h1v246h-1zM1021 309h1v246h-1zM1105 309h1v246h-1zM1216 309h1v246h-1zM1241 309h1v246h-1zM1258 309h1v246h-1zM1288 309h1v246h-1zM1292 309h1v246h-1zM1322 309h1v246h-1zM1355 309h1v246h-1zM1358 309h2v246h-2zM1360 309h1v246h-1zM1369 309h1v246h-1zM1407 309h1v246h-1zM1411 309h1v246h-1zM1414 309h1v246h-1zM1421 309h2v246h-2zM1427 309h1v246h-1zM1439 309h1v246h-1zM1457 309h1v246h-1zM1463 309h2v246h-2zM1485 309h2v246h-2zM1607 309h1v246h-1zM1633 309h1v246h-1zM1694 309h2v246h-2zM1697 309h1v246h-1zM1699 309h2v246h-2zM1702 309h1v246h-1z"/><path fill="url(#g39)" d="M357 309h1v246h-1zM364 309h1v246h-1zM591 309h1v246h-1zM748 309h1v246h-1zM1121 309h1v246h-1zM1154 309h1v246h-1zM1281 309h1v246h-1zM1458 309h1v246h-1zM1472 309h1v246h-1zM1508 309h1v246h-1zM1668 309h1v246h-1zM1671 309h1v246h-1zM1701 309h1v246h-1zM1738 309h1v246h-1zM1815 309h1v246h-1z"/><path fill="url(#g40)" d="M593 309h1v246h-1zM790 309h1v246h-1zM1220 309h1v246h-1zM1222 309h1v246h-1zM1366 309h1v246h-1zM1467 309h1v246h-1zM1620 309h1v246h-1zM1627 309h1v246h-1zM1654 309h1v246h-1zM1790 309h1v246h-1z"/><path fill="url(#g41)" d="M585 309h1v246h-1zM1093 309h1v246h-1zM1101 309h1v246h-1zM1262 309h1v246h-1zM1498 309h1v246h-1zM1660 309h1v246h-1z"/><path fill="url(#g42)" d="M1342 309h1v246h-1zM1365 309h1v246h-1zM1375 309h1v246h-1zM1380 309h1v246h-1zM1482 309h1v246h-1zM1624 309h1v246h-1zM1669 309h1v246h-1z"/><path fill="url(#g43)" d="M1255 309h1v246h-1zM1276 309h1v246h-1z"/><path fill="url(#g44)" d="M1326 309h1v246h-1zM1445 309h1v246h-1z"/><g id="stk"><use href="#h01" x="1108" y="505"/><use href="#h00" x="820" y="475"/><use href="#h01" x="579" y="498"/><use href="#h00" x="312" y="507"/><use href="#h21" x="608" y="480"/><use href="#h10" x="1545" y="464"/><use href="#h01" x="946" y="495"/><use href="#h10" x="1633" y="504"/><use href="#h20" x="885" y="480"/><use href="#h11" x="805" y="477"/><use href="#h11" x="1236" y="514"/><use href="#h11" x="833" y="466"/><use href="#h10" x="1746" y="462"/><use href="#h10" x="1223" y="483"/><use href="#h10" x="1106" y="467"/><use href="#h20" x="1004" y="512"/><use href="#h20" x="890" y="504"/><use href="#h00" x="1124" y="493"/><use href="#h20" x="1479" y="454"/><use href="#h20" x="1696" y="503"/><use href="#h10" x="1122" y="470"/><use href="#h21" x="1121" y="484"/><use href="#h21" x="1033" y="464"/><use href="#h10" x="1510" y="505"/><use href="#h10" x="1346" y="523"/><use href="#h00" x="630" y="516"/><use href="#h10" x="917" y="518"/><use href="#h11" x="1199" y="484"/><use href="#h30" x="844" y="444"/><use href="#h20" x="453" y="472"/><use href="#h00" x="529" y="525"/><use href="#h20" x="1021" y="489"/><use href="#h10" x="637" y="488"/><use href="#h01" x="606" y="492"/><use href="#h11" x="1163" y="518"/><use href="#h21" x="484" y="500"/><use href="#h20" x="1076" y="497"/><use href="#h21" x="1054" y="506"/><use href="#h20" x="1798" y="509"/><use href="#h10" x="1585" y="494"/><use href="#h00" x="1077" y="520"/><use href="#h30" x="1137" y="494"/><use href="#h00" x="1268" y="466"/><use href="#h20" x="745" y="499"/><use href="#h00" x="871" y="474"/><use href="#h10" x="1197" y="504"/><use href="#h31" x="445" y="493"/><use href="#h20" x="544" y="454"/><use href="#h10" x="1806" y="498"/><use href="#h21" x="1625" y="458"/><use href="#h10" x="796" y="480"/><use href="#h20" x="1205" y="508"/><use href="#h10" x="667" y="511"/><use href="#h10" x="1151" y="509"/><use href="#h20" x="1149" y="473"/><use href="#h00" x="1171" y="513"/><use href="#h10" x="744" y="504"/><use href="#h11" x="1020" y="513"/><use href="#h01" x="1626" y="512"/><use href="#h11" x="876" y="523"/><use href="#h01" x="1464" y="505"/><use href="#h10" x="623" y="487"/><use href="#h00" x="586" y="512"/><use href="#h21" x="847" y="512"/><use href="#h30" x="1248" y="450"/><use href="#h00" x="1356" y="515"/><use href="#h11" x="1407" y="499"/><use href="#h00" x="1578" y="474"/><use href="#h11" x="760" y="515"/><use href="#h10" x="990" y="525"/><use href="#h00" x="792" y="481"/><use href="#h21" x="929" y="512"/><use href="#h10" x="720" y="495"/><use href="#h20" x="277" y="481"/><use href="#h10" x="316" y="502"/><use href="#h30" x="788" y="493"/><use href="#h21" x="486" y="509"/><use href="#h11" x="1212" y="504"/><use href="#h30" x="1589" y="459"/><use href="#h30" x="1665" y="466"/><use href="#h31" x="599" y="463"/><use href="#h21" x="1094" y="465"/><use href="#h31" x="777" y="485"/><use href="#h10" x="536" y="509"/><use href="#h11" x="1488" y="492"/><use href="#h21" x="1481" y="501"/><use href="#h11" x="895" y="460"/><use href="#h20" x="814" y="454"/><use href="#h21" x="1240" y="488"/><use href="#h20" x="1651" y="466"/><use href="#h20" x="1067" y="470"/><use href="#h10" x="335" y="502"/><use href="#h20" x="608" y="452"/><use href="#h30" x="766" y="481"/><use href="#h10" x="1336" y="506"/><use href="#h10" x="713" y="478"/><use href="#h11" x="1506" y="507"/><use href="#h00" x="497" y="506"/><use href="#h01" x="1104" y="523"/><use href="#h31" x="1102" y="495"/><use href="#h10" x="1194" y="475"/><use href="#h21" x="573" y="467"/><use href="#h01" x="1264" y="527"/><use href="#h10" x="1433" y="485"/><use href="#h31" x="1081" y="445"/><use href="#h31" x="291" y="461"/><use href="#h00" x="802" y="511"/><use href="#h21" x="943" y="467"/><use href="#h11" x="1586" y="470"/><use href="#h10" x="259" y="524"/><use href="#h01" x="811" y="515"/><use href="#h10" x="1108" y="476"/><use href="#h31" x="1153" y="451"/><use href="#h10" x="953" y="512"/><use href="#h20" x="290" y="476"/><use href="#h21" x="960" y="483"/><use href="#h10" x="1352" y="483"/><use href="#h00" x="1752" y="512"/><use href="#h11" x="605" y="475"/><use href="#h31" x="546" y="454"/><use href="#h01" x="1760" y="498"/><use href="#h20" x="1015" y="478"/><use href="#h20" x="1205" y="487"/><use href="#h20" x="866" y="517"/><use href="#h20" x="1219" y="517"/><use href="#h31" x="1441" y="504"/><use href="#h10" x="1424" y="514"/><use href="#h10" x="630" y="502"/><use href="#h30" x="1609" y="482"/><use href="#h21" x="1172" y="458"/><use href="#h01" x="848" y="510"/><use href="#h10" x="608" y="478"/><use href="#h31" x="885" y="476"/><use href="#h11" x="1669" y="475"/><use href="#h11" x="1752" y="506"/><use href="#h10" x="1429" y="485"/><use href="#h10" x="1199" y="497"/><use href="#h21" x="1612" y="500"/><use href="#h21" x="391" y="479"/><use href="#h21" x="727" y="513"/><use href="#h01" x="457" y="487"/><use href="#h30" x="1702" y="448"/><use href="#h20" x="307" y="504"/><use href="#h11" x="885" y="512"/><use href="#h21" x="1090" y="474"/><use href="#h20" x="1225" y="484"/><use href="#h11" x="1262" y="509"/><use href="#h10" x="766" y="495"/><use href="#h00" x="1534" y="498"/><use href="#h11" x="1413" y="515"/><use href="#h10" x="924" y="475"/><use href="#h21" x="439" y="480"/><use href="#h11" x="879" y="510"/><use href="#h00" x="425" y="479"/><use href="#h01" x="1261" y="473"/><use href="#h31" x="440" y="508"/><use href="#h00" x="338" y="509"/><use href="#h21" x="414" y="477"/><use href="#h20" x="896" y="455"/><use href="#h11" x="1067" y="484"/><use href="#h10" x="1354" y="491"/><use href="#h11" x="1470" y="474"/><use href="#h11" x="1014" y="514"/><use href="#h11" x="1613" y="515"/><use href="#h20" x="709" y="465"/><use href="#h20" x="694" y="492"/><use href="#h11" x="455" y="494"/><use href="#h20" x="1494" y="482"/><use href="#h21" x="1043" y="477"/><use href="#h01" x="1243" y="517"/><use href="#h00" x="1762" y="489"/><use href="#h00" x="1291" y="529"/><use href="#h20" x="585" y="507"/><use href="#h10" x="1229" y="517"/><use href="#h00" x="1402" y="528"/><use href="#h10" x="891" y="510"/><use href="#h01" x="461" y="508"/><use href="#h10" x="584" y="513"/><use href="#h10" x="1063" y="501"/><use href="#h20" x="945" y="452"/><use href="#h00" x="939" y="511"/><use href="#h11" x="1221" y="482"/><use href="#h10" x="1602" y="474"/><use href="#h01" x="1508" y="508"/><use href="#h10" x="1169" y="479"/><use href="#h01" x="1511" y="495"/><use href="#h01" x="310" y="491"/><use href="#h21" x="1394" y="462"/><use href="#h11" x="1491" y="468"/><use href="#h10" x="503" y="516"/><use href="#h11" x="630" y="507"/><use href="#h20" x="321" y="472"/><use href="#h20" x="777" y="452"/><use href="#h21" x="1165" y="481"/><use href="#h00" x="1285" y="472"/><use href="#h11" x="1067" y="482"/><use href="#h10" x="1504" y="484"/><use href="#h01" x="415" y="519"/><use href="#h01" x="1249" y="512"/><use href="#h11" x="1516" y="507"/><use href="#h11" x="935" y="462"/><use href="#h20" x="1388" y="501"/><use href="#h20" x="343" y="482"/><use href="#h20" x="1521" y="514"/><use href="#h10" x="1654" y="499"/><use href="#h11" x="1567" y="493"/><use href="#h21" x="275" y="513"/><use href="#h00" x="1477" y="526"/><use href="#h10" x="610" y="487"/><use href="#h10" x="760" y="513"/><use href="#h11" x="1355" y="499"/><use href="#h11" x="1669" y="469"/><use href="#h20" x="1755" y="488"/><use href="#h20" x="575" y="482"/><use href="#h10" x="1801" y="519"/><use href="#h11" x="1447" y="479"/><use href="#h20" x="1741" y="516"/><use href="#h00" x="1171" y="498"/><use href="#h30" x="1540" y="499"/><use href="#h20" x="896" y="509"/><use href="#h10" x="372" y="505"/><use href="#h31" x="1058" y="484"/><use href="#h01" x="1253" y="471"/><use href="#h31" x="654" y="480"/><use href="#h20" x="1077" y="479"/><use href="#h20" x="1574" y="475"/><use href="#h10" x="1144" y="459"/><use href="#h01" x="1045" y="492"/><use href="#h20" x="709" y="485"/><use href="#h20" x="681" y="457"/><use href="#h20" x="1418" y="487"/><use href="#h01" x="1639" y="490"/><use href="#h10" x="1527" y="480"/><use href="#h10" x="693" y="502"/><use href="#h10" x="1302" y="479"/><use href="#h21" x="1111" y="452"/><use href="#h01" x="534" y="465"/><use href="#h21" x="451" y="487"/><use href="#h11" x="1559" y="492"/><use href="#h20" x="576" y="489"/><use href="#h01" x="614" y="484"/><use href="#h10" x="343" y="519"/><use href="#h00" x="970" y="468"/><use href="#h10" x="738" y="463"/><use href="#h10" x="1790" y="460"/><use href="#h31" x="952" y="507"/><use href="#h10" x="1414" y="464"/><use href="#h21" x="583" y="510"/><use href="#h10" x="1329" y="505"/><use href="#h00" x="330" y="491"/><use href="#h20" x="1322" y="505"/><use href="#h11" x="1170" y="511"/><use href="#h10" x="954" y="483"/><use href="#h21" x="698" y="489"/><use href="#h11" x="1681" y="495"/><use href="#h10" x="1207" y="483"/><use href="#h11" x="915" y="503"/><use href="#h20" x="1795" y="480"/><use href="#h10" x="1296" y="486"/><use href="#h00" x="634" y="463"/><use href="#h20" x="1482" y="499"/><use href="#h10" x="1539" y="518"/><use href="#h00" x="1482" y="522"/><use href="#h30" x="277" y="443"/><use href="#h10" x="1787" y="495"/><use href="#h01" x="297" y="510"/><use href="#h10" x="669" y="494"/><use href="#h10" x="878" y="473"/><use href="#h01" x="1292" y="477"/><use href="#h10" x="789" y="459"/><use href="#h20" x="1098" y="475"/><use href="#h11" x="397" y="488"/><use href="#h10" x="1091" y="479"/><use href="#h20" x="1267" y="468"/><use href="#h10" x="1782" y="515"/><use href="#h21" x="649" y="496"/><use href="#h10" x="797" y="471"/><use href="#h20" x="1187" y="452"/><use href="#h20" x="1321" y="489"/><use href="#h20" x="749" y="509"/><use href="#h20" x="1100" y="457"/><use href="#h10" x="642" y="458"/><use href="#h30" x="797" y="463"/><use href="#h11" x="1446" y="510"/><use href="#h31" x="938" y="468"/><use href="#h10" x="1363" y="474"/><use href="#h11" x="819" y="501"/><use href="#h20" x="299" y="497"/><use href="#h00" x="366" y="526"/><use href="#h10" x="1334" y="489"/><use href="#h10" x="1139" y="492"/><use href="#h11" x="434" y="469"/><use href="#h11" x="1494" y="495"/><use href="#h00" x="1511" y="529"/><use href="#h11" x="503" y="503"/><use href="#h30" x="882" y="499"/><use href="#h20" x="541" y="505"/><use href="#h10" x="1002" y="497"/><use href="#h21" x="739" y="485"/><use href="#h10" x="1533" y="511"/><use href="#h10" x="1323" y="471"/><use href="#h20" x="258" y="486"/><use href="#h20" x="1788" y="507"/><use href="#h30" x="879" y="494"/><use href="#h20" x="1661" y="462"/><use href="#h10" x="1124" y="490"/><use href="#h30" x="1563" y="502"/><use href="#h11" x="1550" y="501"/><use href="#h10" x="281" y="461"/><use href="#h20" x="359" y="480"/><use href="#h11" x="1032" y="503"/><use href="#h10" x="655" y="522"/><use href="#h10" x="1454" y="508"/><use href="#h21" x="375" y="467"/><use href="#h30" x="815" y="490"/><use href="#h11" x="1016" y="489"/><use href="#h20" x="773" y="511"/><use href="#h30" x="615" y="451"/><use href="#h31" x="997" y="483"/><use href="#h11" x="598" y="471"/><use href="#h11" x="1043" y="515"/><use href="#h21" x="1809" y="510"/><use href="#h10" x="1656" y="508"/><use href="#h10" x="1530" y="495"/><use href="#h00" x="1283" y="525"/><use href="#h20" x="624" y="472"/><use href="#h00" x="1651" y="490"/><use href="#h20" x="871" y="516"/><use href="#h11" x="593" y="473"/><use href="#h10" x="1033" y="522"/><use href="#h10" x="764" y="502"/><use href="#h10" x="839" y="519"/><use href="#h00" x="578" y="521"/><use href="#h10" x="932" y="498"/><use href="#h10" x="1619" y="480"/><use href="#h10" x="261" y="478"/><use href="#h21" x="1611" y="513"/><use href="#h10" x="1346" y="500"/><use href="#h11" x="761" y="474"/><use href="#h20" x="1139" y="460"/><use href="#h20" x="1190" y="457"/><use href="#h20" x="929" y="488"/><use href="#h01" x="1257" y="485"/><use href="#h10" x="828" y="512"/><use href="#h20" x="1760" y="484"/><use href="#h10" x="853" y="512"/><use href="#h00" x="1324" y="511"/><use href="#h10" x="1728" y="486"/><use href="#h11" x="1544" y="494"/><use href="#h20" x="800" y="467"/><use href="#h10" x="1372" y="509"/><use href="#h20" x="640" y="484"/><use href="#h21" x="874" y="475"/><use href="#h01" x="875" y="522"/><use href="#h10" x="711" y="463"/><use href="#h10" x="1391" y="469"/><use href="#h11" x="751" y="466"/><use href="#h20" x="956" y="497"/><use href="#h21" x="1005" y="496"/><use href="#h11" x="484" y="492"/><use href="#h10" x="1193" y="462"/><use href="#h11" x="1391" y="493"/><use href="#h11" x="1146" y="521"/><use href="#h20" x="1589" y="481"/><use href="#h31" x="636" y="502"/><use href="#h00" x="749" y="491"/><use href="#h00" x="460" y="487"/><use href="#h00" x="601" y="469"/><use href="#h10" x="351" y="511"/><use href="#h10" x="277" y="486"/><use href="#h31" x="886" y="497"/><use href="#h10" x="356" y="485"/><use href="#h11" x="342" y="503"/><use href="#h00" x="268" y="523"/><use href="#h10" x="932" y="458"/><use href="#h20" x="331" y="514"/><use href="#h11" x="1490" y="521"/><use href="#h01" x="379" y="500"/><use href="#h01" x="797" y="494"/><use href="#h20" x="1541" y="465"/><use href="#h10" x="1467" y="493"/><use href="#h00" x="1394" y="525"/><use href="#h10" x="1601" y="461"/><use href="#h30" x="650" y="472"/><use href="#y00" x="478" y="523"/><use href="#y11" x="689" y="505"/><use href="#y10" x="355" y="507"/><use href="#y10" x="293" y="530"/><use href="#y01" x="1439" y="526"/><use href="#y10" x="1172" y="506"/><use href="#y11" x="560" y="535"/><use href="#y11" x="664" y="517"/><use href="#y10" x="1421" y="508"/><use href="#y10" x="432" y="530"/><use href="#y11" x="776" y="529"/><use href="#y00" x="1382" y="521"/><use href="#y10" x="279" y="536"/><use href="#y11" x="1046" y="518"/><use href="#y10" x="1095" y="521"/><use href="#y10" x="1242" y="535"/><use href="#y10" x="1699" y="510"/><use href="#y10" x="1389" y="518"/><use href="#y01" x="563" y="537"/><use href="#y00" x="1090" y="539"/><use href="#y10" x="1242" y="529"/><use href="#y21" x="287" y="528"/><use href="#y10" x="1375" y="532"/><use href="#y10" x="819" y="523"/><use href="#y11" x="785" y="531"/><use href="#y11" x="1223" y="532"/><use href="#y00" x="729" y="541"/><use href="#y10" x="808" y="527"/><use href="#y01" x="581" y="517"/><use href="#y11" x="607" y="521"/><use href="#y00" x="724" y="540"/><use href="#y00" x="1063" y="539"/><use href="#y00" x="654" y="538"/><use href="#y21" x="972" y="521"/><use href="#y20" x="808" y="500"/><use href="#y11" x="1062" y="521"/><use href="#y10" x="1443" y="535"/><use href="#y11" x="1204" y="523"/><use href="#y10" x="658" y="524"/><use href="#y01" x="490" y="512"/><use href="#y20" x="406" y="516"/><use href="#y10" x="1068" y="520"/><use href="#y21" x="979" y="520"/><use href="#y10" x="1561" y="517"/><use href="#y10" x="1143" y="517"/><use href="#y21" x="705" y="519"/><use href="#y20" x="552" y="503"/><use href="#y10" x="1308" y="526"/><use href="#y10" x="764" y="507"/><use href="#y10" x="698" y="524"/><use href="#y11" x="880" y="506"/><use href="#y11" x="1204" y="511"/><use href="#y00" x="367" y="536"/><use href="#y10" x="574" y="521"/><use href="#y10" x="896" y="527"/><use href="#y10" x="684" y="508"/><use href="#y11" x="999" y="518"/><use href="#y20" x="675" y="508"/><use href="#y01" x="788" y="540"/><use href="#y11" x="530" y="514"/><use href="#y00" x="1571" y="523"/><use href="#y10" x="1131" y="533"/><use href="#y20" x="1451" y="522"/><use href="#y01" x="678" y="519"/><use href="#y10" x="490" y="520"/><use href="#y21" x="630" y="520"/><use href="#y11" x="419" y="525"/><use href="#y10" x="1226" y="520"/><use href="#y00" x="1017" y="531"/><use href="#y00" x="1020" y="524"/><use href="#y11" x="258" y="511"/><use href="#y11" x="1596" y="511"/><use href="#y01" x="1569" y="521"/><use href="#y00" x="1110" y="529"/><use href="#y21" x="422" y="524"/><use href="#y00" x="817" y="518"/><use href="#y00" x="265" y="538"/><use href="#y11" x="880" y="523"/><use href="#y10" x="1044" y="515"/><use href="#y11" x="424" y="530"/><use href="#y10" x="1075" y="536"/><use href="#y20" x="1339" y="514"/><use href="#y20" x="1058" y="498"/><use href="#y11" x="1047" y="513"/><use href="#y01" x="706" y="541"/><use href="#y20" x="408" y="502"/><use href="#y00" x="933" y="512"/><use href="#y10" x="942" y="522"/><use href="#y11" x="781" y="529"/><use href="#y10" x="957" y="536"/><use href="#y01" x="1539" y="521"/><use href="#y00" x="270" y="540"/><use href="#y10" x="1384" y="509"/><use href="#y10" x="946" y="515"/><use href="#y10" x="920" y="520"/><use href="#y11" x="643" y="525"/><use href="#y10" x="930" y="520"/><use href="#y21" x="350" y="520"/><use href="#y20" x="1315" y="527"/><use href="#y00" x="1797" y="540"/><use href="#y10" x="537" y="512"/><use href="#y00" x="1206" y="528"/><use href="#y10" x="829" y="505"/><use href="#y10" x="539" y="516"/><use href="#y10" x="1241" y="531"/><use href="#y01" x="1530" y="511"/><use href="#y21" x="1032" y="511"/><use href="#y10" x="620" y="536"/><use href="#y10" x="549" y="535"/><use href="#y10" x="1306" y="527"/><use href="#y01" x="1060" y="535"/><use href="#y01" x="1230" y="521"/><use href="#y01" x="509" y="532"/><use href="#y00" x="1475" y="526"/><use href="#y10" x="1281" y="513"/><use href="#y00" x="1355" y="513"/><use href="#y00" x="371" y="513"/><use href="#y11" x="1272" y="519"/><use href="#y21" x="1749" y="502"/><use href="#y01" x="1382" y="533"/><use href="#y20" x="1075" y="510"/><use href="#y00" x="729" y="515"/><use href="#y00" x="1293" y="534"/><use href="#y10" x="1481" y="507"/><use href="#y21" x="1645" y="520"/><use href="#y11" x="1156" y="507"/><use href="#y01" x="1461" y="540"/><use href="#y00" x="1003" y="520"/><use href="#y00" x="368" y="528"/><use href="#y11" x="1130" y="509"/><use href="#y01" x="1351" y="537"/><use href="#y11" x="1595" y="536"/><use href="#y10" x="389" y="526"/><use href="#y11" x="955" y="536"/><use href="#y20" x="923" y="529"/><use href="#y11" x="1400" y="529"/><use href="#y20" x="344" y="519"/><use href="#y01" x="1468" y="541"/><use href="#y10" x="307" y="508"/><use href="#y11" x="1028" y="510"/><use href="#y00" x="1770" y="510"/><use href="#y11" x="458" y="521"/><use href="#y10" x="921" y="526"/><use href="#y01" x="613" y="521"/><use href="#y00" x="490" y="541"/><use href="#y00" x="1182" y="538"/><use href="#y10" x="1212" y="536"/><use href="#y10" x="809" y="516"/><use href="#y01" x="1730" y="519"/><use href="#y00" x="620" y="516"/><use href="#y10" x="986" y="519"/><use href="#y11" x="1545" y="512"/><use href="#y11" x="1711" y="531"/><use href="#y00" x="1465" y="525"/><use href="#y00" x="1434" y="512"/><use href="#y20" x="1795" y="507"/><use href="#y00" x="1250" y="530"/><use href="#y21" x="1682" y="510"/><use href="#y11" x="1614" y="521"/><use href="#y01" x="500" y="512"/><use href="#y11" x="784" y="513"/><use href="#y20" x="1403" y="507"/><use href="#y10" x="1335" y="521"/><use href="#y01" x="1141" y="535"/><use href="#y10" x="778" y="512"/><use href="#y10" x="1430" y="518"/><use href="#y21" x="1207" y="517"/><use href="#y10" x="834" y="514"/><use href="#y00" x="959" y="517"/><use href="#y11" x="779" y="515"/><use href="#y11" x="1211" y="512"/><use href="#y21" x="732" y="522"/><use href="#y11" x="1029" y="511"/><use href="#y10" x="1681" y="523"/><use href="#y21" x="440" y="503"/><use href="#y00" x="1067" y="526"/><use href="#y11" x="831" y="513"/><use href="#y20" x="1331" y="510"/><use href="#y11" x="1127" y="506"/><use href="#y10" x="437" y="510"/><use href="#y10" x="1376" y="534"/><use href="#y01" x="1318" y="542"/><use href="#y10" x="936" y="517"/><use href="#y10" x="411" y="527"/><use href="#y20" x="749" y="506"/><use href="#y10" x="1477" y="532"/><use href="#y10" x="1282" y="512"/><use href="#y10" x="1619" y="510"/><use href="#y11" x="526" y="528"/><use href="#y01" x="672" y="515"/><use href="#y11" x="1346" y="515"/><use href="#y01" x="293" y="531"/><use href="#y21" x="258" y="498"/><use href="#y01" x="904" y="519"/><use href="#y00" x="630" y="521"/><use href="#y21" x="747" y="506"/><use href="#y10" x="1775" y="515"/><use href="#y21" x="562" y="516"/><use href="#y10" x="1403" y="517"/><use href="#y10" x="972" y="516"/><use href="#y10" x="288" y="519"/><use href="#y10" x="481" y="522"/><use href="#y10" x="1740" y="520"/><use href="#y10" x="1065" y="533"/><use href="#y00" x="995" y="521"/><use href="#y10" x="371" y="535"/><use href="#y20" x="1201" y="517"/><use href="#y01" x="1450" y="538"/><use href="#y00" x="450" y="518"/><use href="#y20" x="1104" y="516"/><use href="#y00" x="1343" y="530"/><use href="#y20" x="996" y="522"/><use href="#y10" x="447" y="527"/><use href="#y20" x="1294" y="508"/><use href="#y10" x="1343" y="534"/><use href="#y00" x="1386" y="524"/><use href="#y11" x="1515" y="523"/><use href="#y20" x="1567" y="500"/><use href="#y10" x="1098" y="508"/><use href="#y11" x="357" y="514"/><use href="#r20" x="272" y="498"/><use href="#r11" x="1424" y="491"/><use href="#r11" x="1601" y="531"/><use href="#r10" x="470" y="491"/><use href="#r10" x="1423" y="513"/><use href="#r21" x="755" y="518"/><use href="#r20" x="1382" y="517"/><use href="#r10" x="1455" y="508"/><use href="#r10" x="1339" y="511"/><use href="#r10" x="1449" y="497"/><use href="#r10" x="1666" y="492"/><use href="#r00" x="720" y="518"/><use href="#r20" x="1425" y="511"/><use href="#r10" x="1156" y="520"/><use href="#r10" x="812" y="530"/><use href="#r11" x="1724" y="523"/><use href="#r20" x="437" y="495"/><use href="#r20" x="604" y="487"/><use href="#r11" x="1319" y="508"/><use href="#r11" x="1520" y="492"/><use href="#r11" x="1389" y="525"/><use href="#r00" x="756" y="516"/><use href="#r11" x="1278" y="527"/><use href="#r21" x="642" y="514"/><use href="#r10" x="1106" y="508"/><use href="#r10" x="1572" y="492"/><use href="#r00" x="1239" y="510"/><use href="#r20" x="737" y="491"/><use href="#r20" x="444" y="495"/><use href="#r10" x="1027" y="524"/><use href="#r21" x="1277" y="504"/><use href="#r10" x="441" y="511"/><use href="#r11" x="1574" y="527"/><use href="#r10" x="1259" y="504"/><use href="#r21" x="1559" y="523"/><use href="#r21" x="669" y="506"/><use href="#r21" x="577" y="506"/><use href="#r21" x="1406" y="525"/><use href="#r11" x="1159" y="527"/><use href="#r10" x="338" y="517"/><use href="#r10" x="283" y="495"/><use href="#r11" x="490" y="492"/><use href="#r20" x="495" y="489"/><use href="#r10" x="1601" y="511"/><use href="#r11" x="833" y="518"/><use href="#r10" x="647" y="515"/><use href="#r20" x="1533" y="505"/><use href="#r20" x="1510" y="499"/><use href="#r11" x="1358" y="527"/><use href="#r20" x="1327" y="513"/><use href="#r10" x="877" y="520"/><use href="#r20" x="486" y="485"/><use href="#r21" x="865" y="517"/><use href="#r21" x="1026" y="508"/><use href="#r11" x="876" y="526"/><use href="#r00" x="913" y="498"/><use href="#r10" x="1515" y="514"/><use href="#r21" x="676" y="525"/><use href="#r21" x="439" y="498"/><use href="#r10" x="1019" y="498"/><use href="#r20" x="1609" y="485"/><use href="#r10" x="684" y="496"/><use href="#r10" x="1251" y="494"/><use href="#r10" x="799" y="530"/><use href="#r01" x="1280" y="505"/><use href="#r11" x="533" y="523"/><use href="#r01" x="1385" y="498"/><use href="#r11" x="1641" y="510"/><use href="#r20" x="917" y="486"/><use href="#r10" x="1668" y="510"/><use href="#r10" x="841" y="493"/><use href="#r10" x="618" y="504"/><use href="#r21" x="789" y="486"/><use href="#r00" x="943" y="529"/><use href="#r21" x="403" y="518"/><use href="#r11" x="883" y="521"/><use href="#r00" x="480" y="509"/><use href="#r10" x="555" y="509"/><use href="#r00" x="1230" y="536"/><use href="#r11" x="477" y="515"/><use href="#r10" x="1474" y="509"/><use href="#r11" x="557" y="511"/><use href="#r00" x="400" y="510"/><use href="#r10" x="585" y="492"/><use href="#r10" x="1334" y="505"/><use href="#r10" x="686" y="531"/><use href="#r10" x="1008" y="503"/><use href="#r21" x="631" y="511"/><use href="#r11" x="1172" y="492"/><use href="#r20" x="1158" y="491"/><use href="#r11" x="1453" y="497"/><use href="#r10" x="638" y="496"/><use href="#r11" x="1026" y="513"/><use href="#r11" x="1266" y="493"/><use href="#r10" x="817" y="531"/><use href="#r20" x="336" y="499"/><use href="#r10" x="829" y="504"/><use href="#r00" x="1603" y="531"/><use href="#r20" x="1086" y="487"/><use href="#r20" x="902" y="490"/><use href="#r10" x="765" y="521"/><use href="#r21" x="1215" y="506"/><use href="#r10" x="1605" y="501"/><use href="#r20" x="1076" y="490"/><use href="#r00" x="353" y="528"/><use href="#r20" x="1653" y="493"/><use href="#r11" x="554" y="529"/><use href="#r10" x="1420" y="514"/><use href="#r21" x="577" y="496"/><use href="#r21" x="1114" y="509"/><use href="#r10" x="785" y="514"/><use href="#r20" x="1209" y="492"/><use href="#r20" x="892" y="489"/><use href="#r00" x="774" y="514"/><use href="#r10" x="757" y="498"/><use href="#r10" x="1529" y="494"/><use href="#r10" x="1759" y="503"/><use href="#r10" x="739" y="498"/><use href="#r20" x="1709" y="487"/><use href="#r11" x="434" y="511"/><use href="#r21" x="1229" y="505"/><use href="#r10" x="548" y="518"/><use href="#r20" x="1627" y="506"/><use href="#r21" x="998" y="519"/><use href="#r11" x="1462" y="500"/><use href="#r10" x="964" y="517"/><use href="#r10" x="1469" y="493"/><use href="#r20" x="980" y="485"/><use href="#r01" x="721" y="509"/><use href="#r20" x="1524" y="519"/><use href="#r10" x="955" y="492"/><use href="#r10" x="1415" y="506"/><use href="#r00" x="1393" y="497"/><use href="#r10" x="500" y="505"/><use href="#r21" x="368" y="491"/><use href="#r11" x="1086" y="493"/><use href="#r10" x="1338" y="509"/><use href="#r10" x="1224" y="511"/><use href="#r10" x="1320" y="520"/><use href="#r10" x="1245" y="509"/><use href="#r10" x="1068" y="527"/><use href="#r20" x="1508" y="522"/><use href="#r21" x="1664" y="505"/><use href="#r21" x="898" y="519"/><use href="#r20" x="1394" y="517"/><use href="#r21" x="580" y="513"/><use href="#r10" x="1268" y="524"/><use href="#r10" x="1290" y="525"/><use href="#r20" x="742" y="513"/><use href="#r01" x="1066" y="526"/><use href="#r11" x="1688" y="493"/><use href="#r11" x="1084" y="499"/><use href="#r11" x="875" y="505"/><use href="#r00" x="554" y="531"/><use href="#r01" x="1412" y="532"/><use href="#r20" x="739" y="489"/><use href="#r11" x="1174" y="525"/><use href="#r10" x="1691" y="507"/><use href="#r10" x="1499" y="507"/><use href="#r20" x="550" y="523"/><use href="#r11" x="1482" y="531"/><use href="#r20" x="1314" y="513"/><use href="#r10" x="866" y="527"/><use href="#r21" x="805" y="525"/><use href="#r10" x="1383" y="528"/><use href="#r10" x="723" y="523"/><use href="#r21" x="1730" y="498"/><use href="#r21" x="1471" y="501"/><use href="#r11" x="380" y="511"/><use href="#r10" x="1020" y="492"/><use href="#r10" x="1686" y="516"/><use href="#r11" x="1476" y="502"/><use href="#r20" x="1050" y="511"/><use href="#r20" x="511" y="492"/><use href="#r11" x="904" y="520"/><use href="#r01" x="1787" y="516"/><use href="#r11" x="1185" y="502"/><use href="#r20" x="1523" y="491"/><use href="#r21" x="802" y="494"/><use href="#r21" x="1740" y="508"/><use href="#r21" x="1685" y="509"/><use href="#r21" x="1623" y="490"/><use href="#r11" x="358" y="508"/><use href="#r20" x="878" y="516"/><use href="#r10" x="878" y="496"/><use href="#r10" x="1503" y="533"/><use href="#r11" x="1737" y="508"/><use href="#r00" x="578" y="526"/><use href="#r10" x="729" y="503"/><use href="#r10" x="814" y="519"/><use href="#r10" x="726" y="499"/><use href="#r20" x="1192" y="500"/><use href="#r10" x="543" y="512"/><use href="#r20" x="960" y="502"/><use href="#r10" x="1636" y="531"/><use href="#r20" x="1754" y="494"/><use href="#r20" x="980" y="514"/><use href="#r10" x="895" y="493"/><use href="#r11" x="1627" y="509"/><use href="#r00" x="393" y="524"/><use href="#r10" x="968" y="501"/><use href="#r00" x="1500" y="500"/><use href="#r11" x="876" y="499"/><use href="#r10" x="1045" y="516"/><use href="#r10" x="1159" y="506"/><use href="#r20" x="1152" y="489"/><use href="#r20" x="1355" y="494"/><use href="#r10" x="349" y="498"/><use href="#r20" x="1476" y="520"/><use href="#r21" x="1792" y="492"/><use href="#r20" x="646" y="504"/><use href="#r20" x="1795" y="515"/><use href="#r01" x="1042" y="505"/><use href="#r11" x="1321" y="527"/><use href="#r20" x="1396" y="523"/><use href="#r11" x="581" y="513"/><use href="#r21" x="1024" y="514"/><use href="#r21" x="1493" y="512"/><use href="#r21" x="1307" y="490"/><use href="#r21" x="890" y="491"/><use href="#r10" x="1155" y="519"/><use href="#r20" x="605" y="523"/><use href="#r21" x="550" y="523"/><use href="#r11" x="584" y="512"/><use href="#r01" x="916" y="517"/><use href="#r21" x="1000" y="492"/><use href="#r11" x="261" y="530"/><use href="#r11" x="1223" y="495"/><use href="#r21" x="1658" y="521"/><use href="#r11" x="921" y="507"/><use href="#r11" x="1385" y="495"/><use href="#r10" x="1783" y="522"/><use href="#r10" x="1148" y="501"/><use href="#r10" x="566" y="506"/><use href="#r01" x="965" y="519"/><use href="#r21" x="927" y="510"/><use href="#r10" x="1130" y="531"/><use href="#r21" x="868" y="518"/><use href="#r10" x="1388" y="530"/><use href="#r11" x="937" y="511"/><use href="#r21" x="363" y="517"/><use href="#r10" x="533" y="525"/><use href="#r10" x="1024" y="500"/><use href="#r10" x="854" y="528"/><use href="#r21" x="389" y="509"/><use href="#r20" x="1007" y="523"/><use href="#r21" x="504" y="501"/><use href="#r10" x="455" y="532"/><use href="#r10" x="1231" y="523"/><use href="#r20" x="1206" y="504"/><use href="#r10" x="503" y="500"/><use href="#r11" x="1495" y="501"/><use href="#r20" x="839" y="521"/><use href="#r10" x="289" y="527"/><use href="#r21" x="1133" y="498"/><use href="#r11" x="499" y="532"/><use href="#r10" x="1716" y="493"/><use href="#r10" x="976" y="508"/><use href="#r11" x="894" y="501"/><use href="#m21" x="873" y="452"/><use href="#m20" x="1114" y="456"/><use href="#m10" x="1121" y="461"/><use href="#m01" x="939" y="420"/><use href="#m20" x="735" y="448"/><use href="#m11" x="1139" y="422"/><use href="#m10" x="1574" y="427"/><use href="#m20" x="1760" y="442"/><use href="#m11" x="278" y="470"/><use href="#m10" x="1692" y="398"/><use href="#m00" x="1777" y="444"/><use href="#m10" x="518" y="413"/><use href="#m20" x="968" y="425"/><use href="#m30" x="1652" y="440"/><use href="#m21" x="595" y="447"/><use href="#m11" x="1218" y="426"/><use href="#m30" x="1338" y="435"/><use href="#m21" x="636" y="425"/><use href="#m31" x="1393" y="399"/><use href="#m20" x="525" y="448"/><use href="#m21" x="644" y="417"/><use href="#m21" x="1760" y="442"/><use href="#m21" x="1785" y="432"/><use href="#m31" x="881" y="425"/><use href="#m21" x="786" y="402"/><use href="#m10" x="1578" y="418"/><use href="#m31" x="953" y="397"/><use href="#m31" x="1784" y="381"/><use href="#m01" x="832" y="406"/><use href="#m21" x="969" y="444"/><use href="#m20" x="1356" y="425"/><use href="#m10" x="1764" y="399"/><use href="#m01" x="739" y="421"/><use href="#m20" x="1453" y="456"/><use href="#m00" x="1510" y="456"/><use href="#m11" x="1164" y="465"/><use href="#m30" x="1378" y="429"/><use href="#m10" x="309" y="424"/><use href="#m20" x="332" y="398"/><use href="#m21" x="1015" y="450"/><use href="#m30" x="1166" y="452"/><use href="#m10" x="845" y="413"/><use href="#m20" x="918" y="410"/><use href="#m21" x="596" y="463"/><use href="#m30" x="406" y="389"/><use href="#m20" x="799" y="440"/><use href="#m20" x="462" y="428"/><use href="#m00" x="792" y="433"/><use href="#m10" x="1125" y="401"/><use href="#m21" x="880" y="429"/><use href="#m30" x="1157" y="423"/><use href="#m21" x="692" y="404"/><use href="#m10" x="762" y="440"/><use href="#m21" x="955" y="388"/><use href="#m10" x="1055" y="405"/><use href="#m10" x="968" y="443"/><use href="#m10" x="1694" y="465"/><use href="#m21" x="1693" y="420"/><use href="#m21" x="906" y="421"/><use href="#m11" x="1307" y="411"/><use href="#m20" x="415" y="405"/><use href="#m20" x="265" y="404"/><use href="#m01" x="772" y="444"/><use href="#m20" x="1347" y="413"/><use href="#m30" x="1074" y="412"/><use href="#m10" x="1257" y="441"/><use href="#m21" x="1633" y="405"/><use href="#m20" x="462" y="459"/><use href="#m21" x="1545" y="458"/><use href="#m00" x="870" y="463"/><use href="#m20" x="594" y="405"/><use href="#m20" x="1429" y="444"/><use href="#m20" x="1112" y="402"/><use href="#m30" x="1798" y="427"/><use href="#m30" x="1398" y="436"/><use href="#m11" x="1343" y="418"/><use href="#m10" x="1017" y="437"/><use href="#m00" x="1177" y="438"/><use href="#m00" x="1075" y="432"/><use href="#m20" x="1623" y="388"/><use href="#m21" x="1768" y="426"/><use href="#m30" x="936" y="421"/><use href="#m30" x="527" y="395"/><use href="#m20" x="732" y="448"/><use href="#m21" x="732" y="450"/><use href="#m31" x="1304" y="441"/><use href="#m01" x="1646" y="477"/><use href="#m21" x="599" y="425"/><use href="#m00" x="909" y="475"/><use href="#m20" x="798" y="426"/><use href="#m20" x="935" y="408"/><use href="#m20" x="596" y="440"/><use href="#m20" x="1281" y="415"/><use href="#m21" x="718" y="433"/><use href="#m01" x="838" y="475"/><use href="#m21" x="1327" y="446"/><use href="#m20" x="1234" y="458"/><use href="#m20" x="1029" y="419"/><use href="#m21" x="1196" y="411"/><use href="#m21" x="1036" y="464"/><use href="#m20" x="1239" y="411"/><use href="#m00" x="1189" y="415"/><use href="#m21" x="1045" y="391"/><use href="#m20" x="334" y="434"/><use href="#m21" x="902" y="454"/><use href="#m20" x="463" y="457"/><use href="#m10" x="271" y="419"/><use href="#m10" x="1704" y="407"/><use href="#m01" x="1617" y="416"/><use href="#m10" x="1091" y="399"/><use href="#m11" x="1139" y="398"/><use href="#m20" x="1049" y="423"/><use href="#m11" x="1582" y="465"/><use href="#m20" x="972" y="430"/><use href="#m30" x="713" y="381"/><use href="#m20" x="1442" y="402"/><use href="#m21" x="715" y="401"/><use href="#m10" x="927" y="394"/><use href="#m10" x="1768" y="406"/><use href="#m20" x="867" y="423"/><use href="#m30" x="1071" y="409"/><use href="#m10" x="981" y="464"/><use href="#m20" x="1445" y="427"/><use href="#m11" x="975" y="410"/><use href="#m20" x="1039" y="417"/><use href="#m20" x="287" y="399"/><use href="#m10" x="419" y="442"/><use href="#m30" x="1315" y="431"/><use href="#m30" x="1181" y="428"/><use href="#m11" x="902" y="433"/><use href="#m20" x="404" y="416"/><use href="#m31" x="1270" y="456"/><use href="#m21" x="1309" y="401"/><use href="#m20" x="286" y="431"/><use href="#m21" x="1269" y="415"/><use href="#m31" x="542" y="452"/><use href="#m30" x="461" y="444"/><use href="#m20" x="1698" y="427"/><use href="#m30" x="503" y="456"/><use href="#m20" x="1758" y="435"/><use href="#m20" x="1471" y="461"/><use href="#m21" x="280" y="464"/><use href="#m30" x="369" y="387"/><use href="#m30" x="1285" y="425"/><use href="#m20" x="1765" y="444"/><use href="#m00" x="503" y="403"/><use href="#m30" x="439" y="442"/><use href="#m20" x="441" y="451"/><use href="#m21" x="331" y="432"/><use href="#m21" x="1444" y="457"/><use href="#m30" x="508" y="431"/><use href="#m21" x="280" y="464"/><use href="#m20" x="1748" y="388"/><use href="#m11" x="1047" y="412"/><use href="#m30" x="1240" y="444"/><use href="#m31" x="1303" y="454"/><use href="#m10" x="914" y="452"/><use href="#m10" x="1287" y="425"/><use href="#m30" x="874" y="452"/><use href="#m20" x="322" y="392"/><use href="#m21" x="545" y="394"/><use href="#m30" x="526" y="409"/><use href="#m20" x="1593" y="392"/><use href="#m31" x="1459" y="427"/><use href="#m10" x="443" y="423"/><use href="#m20" x="717" y="416"/><use href="#m30" x="413" y="444"/><use href="#m11" x="747" y="459"/><use href="#m00" x="1576" y="439"/><use href="#m21" x="301" y="460"/><use href="#m21" x="1164" y="414"/><use href="#m30" x="1606" y="452"/><use href="#m20" x="549" y="461"/><use href="#m21" x="449" y="388"/><use href="#m20" x="1352" y="390"/><use href="#m10" x="891" y="404"/><use href="#m00" x="1461" y="405"/><use href="#m10" x="465" y="395"/><use href="#m00" x="934" y="418"/><use href="#m20" x="1377" y="414"/><use href="#m01" x="614" y="399"/><use href="#m31" x="1784" y="418"/><use href="#m21" x="626" y="397"/><use href="#m20" x="1203" y="413"/><use href="#m20" x="1789" y="442"/><use href="#m10" x="588" y="409"/><use href="#m20" x="1536" y="421"/><use href="#m21" x="1745" y="395"/><use href="#m01" x="1661" y="426"/><use href="#m30" x="373" y="440"/><use href="#m20" x="513" y="423"/><use href="#m20" x="880" y="464"/><use href="#m20" x="1254" y="437"/><use href="#m21" x="1309" y="436"/><use href="#m10" x="1298" y="395"/><use href="#m00" x="544" y="477"/><use href="#m11" x="731" y="425"/><use href="#m21" x="968" y="455"/><use href="#m20" x="779" y="406"/><use href="#m11" x="1771" y="473"/><use href="#m21" x="357" y="404"/><use href="#m20" x="1393" y="427"/><use href="#m01" x="1605" y="478"/><use href="#m31" x="1263" y="420"/><use href="#m21" x="1156" y="434"/><use href="#m30" x="982" y="396"/><use href="#m21" x="1770" y="442"/><use href="#m20" x="330" y="399"/><use href="#m10" x="544" y="409"/><use href="#m11" x="1033" y="444"/><use href="#m20" x="994" y="423"/><use href="#m20" x="616" y="446"/><use href="#m30" x="1334" y="422"/><use href="#m21" x="625" y="443"/><use href="#m30" x="1081" y="424"/><use href="#m01" x="1669" y="459"/><use href="#m30" x="1403" y="452"/><use href="#m20" x="1396" y="389"/><use href="#m00" x="1155" y="398"/><use href="#m10" x="1135" y="460"/><use href="#m10" x="1619" y="436"/><use href="#m30" x="959" y="453"/><use href="#m10" x="1699" y="465"/><use href="#m10" x="487" y="407"/><use href="#m00" x="888" y="403"/><use href="#m20" x="548" y="454"/><use href="#m31" x="592" y="386"/><use href="#m31" x="1234" y="439"/><use href="#m10" x="976" y="455"/><use href="#m11" x="824" y="395"/><use href="#m21" x="1493" y="402"/><use href="#m20" x="339" y="439"/><use href="#m21" x="1728" y="397"/><use href="#m10" x="1360" y="453"/><use href="#m11" x="722" y="451"/><use href="#m10" x="659" y="472"/><use href="#m11" x="777" y="440"/><use href="#m20" x="1361" y="388"/><use href="#m21" x="785" y="418"/><use href="#m30" x="1507" y="380"/><use href="#m31" x="777" y="421"/><use href="#m30" x="1768" y="455"/><use href="#m20" x="1018" y="451"/><use href="#m20" x="1209" y="397"/><use href="#m20" x="1025" y="409"/><use href="#m20" x="1367" y="400"/><use href="#m10" x="1692" y="465"/><use href="#m21" x="820" y="431"/><use href="#m21" x="1415" y="439"/><use href="#m20" x="1248" y="420"/><use href="#m00" x="667" y="471"/><use href="#m20" x="543" y="389"/><use href="#m21" x="940" y="398"/><use href="#m01" x="1233" y="472"/><use href="#m11" x="281" y="430"/><use href="#m10" x="1569" y="462"/><use href="#m00" x="636" y="424"/><use href="#m20" x="690" y="412"/><use href="#m10" x="609" y="435"/><use href="#m30" x="284" y="384"/><use href="#m21" x="517" y="411"/><use href="#m21" x="378" y="433"/><use href="#m00" x="257" y="416"/><use href="#m21" x="1479" y="421"/><use href="#m10" x="1001" y="415"/><use href="#m01" x="577" y="423"/><use href="#m11" x="1395" y="410"/><use href="#m10" x="833" y="447"/><use href="#m11" x="272" y="434"/><use href="#m11" x="606" y="453"/><use href="#m11" x="1128" y="438"/><use href="#m31" x="362" y="456"/><use href="#m11" x="1670" y="436"/><use href="#m30" x="1361" y="394"/><use href="#m11" x="401" y="417"/><use href="#m10" x="967" y="450"/><use href="#m11" x="578" y="435"/><use href="#m30" x="1758" y="427"/><use href="#m21" x="1009" y="459"/><use href="#m01" x="1548" y="409"/><use href="#m10" x="792" y="438"/><use href="#m01" x="871" y="434"/><use href="#m20" x="1399" y="441"/><use href="#m20" x="1800" y="442"/><use href="#m30" x="1033" y="438"/><use href="#m11" x="766" y="444"/><use href="#m20" x="491" y="445"/><use href="#m31" x="1789" y="424"/><use href="#m11" x="762" y="402"/><use href="#m20" x="1387" y="386"/><use href="#m10" x="870" y="446"/><use href="#m21" x="955" y="431"/><use href="#m31" x="292" y="401"/><use href="#m21" x="1382" y="448"/><use href="#m20" x="1280" y="414"/><use href="#m31" x="1389" y="454"/><use href="#m10" x="1433" y="444"/><use href="#m00" x="857" y="471"/><use href="#m11" x="746" y="472"/><use href="#m10" x="901" y="466"/><use href="#m30" x="1647" y="435"/><use href="#m21" x="643" y="400"/><use href="#m10" x="1250" y="411"/><use href="#m11" x="266" y="412"/><use href="#p21" x="1786" y="395"/><use href="#p30" x="1298" y="377"/><use href="#p11" x="299" y="381"/><use href="#p30" x="750" y="353"/><use href="#p10" x="1568" y="411"/><use href="#p20" x="954" y="415"/><use href="#p10" x="1443" y="393"/><use href="#p11" x="1685" y="374"/><use href="#p11" x="1404" y="432"/><use href="#p10" x="982" y="413"/><use href="#p30" x="388" y="388"/><use href="#p20" x="658" y="363"/><use href="#p21" x="714" y="415"/><use href="#p11" x="1731" y="409"/><use href="#p21" x="446" y="379"/><use href="#p11" x="336" y="406"/><use href="#p20" x="760" y="406"/><use href="#p11" x="501" y="376"/><use href="#p10" x="300" y="405"/><use href="#p21" x="1765" y="421"/><use href="#p20" x="631" y="408"/><use href="#p20" x="1006" y="396"/><use href="#p10" x="395" y="427"/><use href="#p11" x="343" y="425"/><use href="#p31" x="651" y="385"/><use href="#p20" x="1071" y="363"/><use href="#p30" x="507" y="410"/><use href="#p31" x="1164" y="414"/><use href="#p30" x="372" y="410"/><use href="#p20" x="498" y="424"/><use href="#p21" x="969" y="391"/><use href="#p21" x="317" y="385"/><use href="#p11" x="1022" y="388"/><use href="#p20" x="664" y="370"/><use href="#p20" x="1579" y="375"/><use href="#p10" x="574" y="398"/><use href="#p01" x="1359" y="385"/><use href="#p31" x="1699" y="371"/><use href="#p10" x="1778" y="425"/><use href="#p30" x="1135" y="395"/><use href="#p21" x="1465" y="416"/><use href="#p10" x="283" y="416"/><use href="#p11" x="1312" y="428"/><use href="#p20" x="696" y="417"/><use href="#p10" x="1597" y="401"/><use href="#p20" x="1230" y="403"/><use href="#p31" x="353" y="381"/><use href="#p01" x="1588" y="406"/><use href="#p20" x="814" y="384"/><use href="#p30" x="1748" y="415"/><use href="#p10" x="542" y="389"/><use href="#p11" x="488" y="418"/><use href="#p21" x="1219" y="398"/><use href="#p21" x="607" y="381"/><use href="#p30" x="673" y="390"/><use href="#p30" x="1065" y="386"/><use href="#p31" x="273" y="377"/><use href="#p30" x="614" y="367"/><use href="#p10" x="1128" y="412"/><use href="#p01" x="697" y="380"/><use href="#p20" x="1051" y="365"/><use href="#p10" x="1594" y="385"/><use href="#p21" x="259" y="383"/><use href="#p21" x="1510" y="413"/><use href="#p00" x="1070" y="387"/><use href="#p11" x="1628" y="373"/><use href="#p20" x="525" y="403"/><use href="#p20" x="541" y="363"/><use href="#p10" x="1494" y="428"/><use href="#p01" x="799" y="374"/><use href="#p21" x="1464" y="371"/><use href="#p11" x="795" y="423"/><use href="#p21" x="1561" y="377"/><use href="#p21" x="1053" y="400"/><use href="#p11" x="1086" y="388"/><use href="#p20" x="1778" y="414"/><use href="#p30" x="1234" y="387"/><use href="#p20" x="913" y="422"/><use href="#p30" x="1317" y="394"/><use href="#p10" x="1062" y="395"/><use href="#p20" x="1272" y="373"/><use href="#p00" x="1394" y="433"/><use href="#p21" x="742" y="387"/><use href="#p00" x="1306" y="419"/><use href="#p20" x="490" y="389"/><use href="#p20" x="1480" y="414"/><use href="#p20" x="351" y="421"/><use href="#p11" x="275" y="369"/><use href="#p20" x="963" y="388"/><use href="#p10" x="838" y="385"/><use href="#p21" x="1266" y="411"/><use href="#p20" x="1676" y="410"/><use href="#p20" x="908" y="373"/><use href="#p21" x="1041" y="371"/><use href="#p10" x="551" y="391"/><use href="#p20" x="1444" y="371"/><use href="#p30" x="278" y="386"/><use href="#p20" x="486" y="382"/><use href="#p11" x="609" y="374"/><use href="#p31" x="1046" y="398"/><use href="#p10" x="1469" y="406"/><use href="#p00" x="720" y="392"/><use href="#p21" x="1703" y="363"/><use href="#p30" x="1160" y="365"/><use href="#p21" x="589" y="384"/><use href="#p31" x="464" y="376"/><use href="#p10" x="640" y="426"/><use href="#p01" x="771" y="417"/><use href="#p11" x="550" y="374"/><use href="#p31" x="1615" y="382"/><use href="#p30" x="1203" y="396"/><use href="#p20" x="1586" y="397"/><use href="#p20" x="1749" y="423"/><use href="#p10" x="1703" y="417"/><use href="#p31" x="1324" y="377"/><use href="#p10" x="885" y="377"/><use href="#p00" x="742" y="425"/><use href="#p00" x="685" y="435"/><use href="#p20" x="1640" y="381"/><use href="#p30" x="1465" y="401"/><use href="#p10" x="449" y="395"/><use href="#p20" x="650" y="409"/><use href="#p00" x="1674" y="393"/><use href="#p10" x="1452" y="431"/><use href="#p20" x="663" y="411"/><use href="#p20" x="1402" y="424"/><use href="#p01" x="436" y="413"/><use href="#p11" x="591" y="426"/><use href="#p10" x="1773" y="395"/><use href="#p20" x="1328" y="375"/><use href="#p21" x="1088" y="390"/><use href="#p10" x="648" y="432"/><use href="#p10" x="969" y="408"/><use href="#p31" x="944" y="366"/><use href="#p20" x="1657" y="386"/><use href="#p01" x="1760" y="387"/><use href="#p00" x="1156" y="422"/><use href="#p30" x="276" y="358"/><use href="#p11" x="1662" y="372"/><use href="#p30" x="1595" y="370"/><use href="#p11" x="577" y="409"/><use href="#p30" x="1005" y="410"/><use href="#p31" x="1072" y="403"/><use href="#p20" x="1748" y="414"/><use href="#p21" x="1523" y="400"/><use href="#p20" x="1247" y="412"/><use href="#p11" x="1334" y="397"/><use href="#p21" x="1213" y="421"/><use href="#p30" x="271" y="361"/><use href="#p30" x="586" y="379"/><use href="#p10" x="1027" y="377"/><use href="#p00" x="1165" y="396"/><use href="#p20" x="858" y="379"/><use href="#p00" x="516" y="405"/><use href="#p11" x="434" y="421"/><use href="#p20" x="1431" y="377"/><use href="#p31" x="597" y="412"/><use href="#p00" x="268" y="418"/><use href="#p11" x="1788" y="374"/><use href="#p10" x="1796" y="417"/><use href="#p11" x="622" y="402"/><use href="#p31" x="1751" y="395"/><use href="#p31" x="1375" y="376"/><use href="#p11" x="1774" y="388"/><use href="#p20" x="1420" y="361"/><use href="#p30" x="1517" y="395"/><use href="#p31" x="1296" y="356"/><use href="#p00" x="520" y="394"/><use href="#p20" x="647" y="412"/><use href="#p00" x="759" y="374"/><use href="#p10" x="1738" y="408"/><use href="#p30" x="381" y="363"/><use href="#p30" x="875" y="367"/><use href="#p10" x="283" y="422"/><use href="#p20" x="1400" y="364"/><use href="#p10" x="1285" y="386"/><use href="#p00" x="491" y="404"/><use href="#p10" x="414" y="385"/><use href="#p00" x="881" y="378"/><use href="#p20" x="342" y="414"/><use href="#p30" x="909" y="381"/><use href="#p31" x="359" y="382"/><use href="#p10" x="289" y="410"/><use href="#p20" x="953" y="369"/><use href="#p30" x="1746" y="369"/><use href="#p11" x="326" y="399"/><use href="#p10" x="1778" y="421"/><use href="#p31" x="706" y="352"/><use href="#p11" x="290" y="399"/><use href="#p20" x="456" y="396"/><use href="#p10" x="274" y="432"/><use href="#p10" x="434" y="371"/><use href="#p00" x="1120" y="381"/><use href="#p10" x="1642" y="411"/><use href="#p01" x="484" y="417"/><use href="#p00" x="690" y="397"/><use href="#p10" x="930" y="430"/><use href="#p01" x="1138" y="388"/><use href="#p20" x="286" y="419"/><use href="#p21" x="726" y="390"/><use href="#p20" x="1447" y="398"/><use href="#p21" x="1628" y="366"/><use href="#p30" x="1127" y="367"/><use href="#p31" x="337" y="354"/><use href="#p21" x="785" y="409"/><use href="#p00" x="823" y="384"/><use href="#p31" x="1726" y="400"/><use href="#p20" x="1607" y="391"/><use href="#p10" x="1017" y="420"/><use href="#p10" x="583" y="370"/><use href="#p10" x="1780" y="384"/><use href="#p11" x="523" y="400"/><use href="#p30" x="1317" y="384"/><use href="#p30" x="1235" y="360"/><use href="#p30" x="1024" y="390"/><use href="#p31" x="1749" y="401"/><use href="#p10" x="1117" y="375"/><use href="#p21" x="1027" y="416"/><use href="#p20" x="718" y="387"/><use href="#p31" x="1536" y="361"/><use href="#p20" x="1418" y="402"/><use href="#p20" x="1627" y="412"/><use href="#p10" x="1563" y="383"/><use href="#p11" x="1733" y="389"/><use href="#p21" x="517" y="412"/><use href="#p10" x="328" y="369"/><use href="#p10" x="631" y="425"/><use href="#p11" x="443" y="368"/><use href="#p21" x="1359" y="399"/><use href="#p30" x="681" y="384"/><use href="#p21" x="796" y="402"/><use href="#p20" x="1217" y="366"/><use href="#p00" x="356" y="396"/><use href="#p11" x="1124" y="420"/><use href="#p20" x="719" y="415"/><use href="#p21" x="970" y="419"/><use href="#p01" x="377" y="419"/><use href="#p11" x="490" y="396"/><use href="#p21" x="848" y="404"/><use href="#p20" x="1235" y="423"/><use href="#p00" x="882" y="418"/><use href="#p20" x="735" y="420"/><use href="#p30" x="1139" y="396"/><use href="#p01" x="379" y="388"/><use href="#p00" x="339" y="410"/><use href="#p11" x="1106" y="406"/><use href="#p00" x="769" y="376"/><use href="#p20" x="372" y="386"/><use href="#p00" x="959" y="426"/><use href="#p21" x="1619" y="384"/><use href="#p20" x="801" y="395"/><use href="#p20" x="1437" y="376"/><use href="#p21" x="257" y="393"/><use href="#p20" x="777" y="405"/><use href="#p10" x="622" y="380"/><use href="#p10" x="1615" y="399"/><use href="#p31" x="688" y="405"/><use href="#p01" x="949" y="434"/><use href="#p30" x="748" y="405"/><use href="#p10" x="1322" y="370"/><use href="#p10" x="790" y="424"/><use href="#p21" x="696" y="424"/><use href="#p10" x="1747" y="385"/><use href="#p20" x="300" y="368"/><use href="#p11" x="944" y="377"/><use href="#p20" x="1225" y="422"/><use href="#p11" x="364" y="394"/><use href="#p20" x="1673" y="374"/><use href="#p10" x="1620" y="423"/><use href="#p11" x="417" y="429"/><use href="#p31" x="852" y="407"/><use href="#p10" x="825" y="395"/><use href="#p20" x="504" y="393"/><use href="#p10" x="502" y="393"/><use href="#p11" x="358" y="391"/><use href="#p10" x="1290" y="428"/><use href="#p30" x="1564" y="415"/><use href="#p11" x="883" y="375"/><use href="#p11" x="1699" y="392"/><use href="#p21" x="1456" y="419"/><use href="#p21" x="700" y="400"/><use href="#p10" x="1604" y="380"/><use href="#p20" x="1727" y="384"/><use href="#p11" x="1287" y="411"/></g></g><path d="M470 170H481V446H470zM553 170H570V452H553zM1708 170H1719V462H1708zM1786 170H1840V560H1826C1822 520 1812 420 1800 385C1795 372 1790 368 1786 366z" fill="rgb(6,0,31)" filter="url(#bm)"/></g></g><g transform="translate(0,380)"><rect x="255" y="179" width="1572" height="376" fill="rgb(6,0,31)"/><g clip-path="url(#cl1)"><g filter="url(#bx)"><rect x="251" y="170" width="1580" height="395" fill="none"/><path fill="url(#g4)" d="M1823 309h2v246h-2z"/><path fill="url(#g8)" d="M1825 309h1v246h-1z"/><path fill="url(#g10)" d="M1822 309h1v246h-1z"/><path fill="url(#g11)" d="M1826 309h1v246h-1z"/><path fill="url(#g14)" d="M1821 309h1v246h-1z"/><path fill="url(#g19)" d="M919 309h1v246h-1zM1717 309h1v246h-1zM1818 309h3v246h-3z"/><path fill="url(#g20)" d="M1043 309h1v246h-1z"/><path fill="url(#g21)" d="M255 309h1v246h-1zM536 309h2v246h-2zM539 309h1v246h-1zM699 309h2v246h-2zM1036 309h1v246h-1zM1038 309h2v246h-2zM1564 309h2v246h-2z"/><path fill="url(#g22)" d="M308 309h1v246h-1zM523 309h1v246h-1zM529 309h2v246h-2zM708 309h1v246h-1zM876 309h1v246h-1zM991 309h2v246h-2zM1013 309h2v246h-2zM1589 309h1v246h-1zM1713 309h2v246h-2zM1718 309h1v246h-1z"/><path fill="url(#g23)" d="M262 309h1v246h-1zM439 309h1v246h-1zM443 309h2v246h-2zM445 309h1v246h-1zM513 309h2v246h-2zM675 309h2v246h-2zM680 309h1v246h-1zM982 309h3v246h-3zM1181 309h1v246h-1zM1532 309h1v246h-1zM1536 309h1v246h-1zM1581 309h1v246h-1z"/><path fill="url(#g24)" d="M256 309h1v246h-1zM257 309h1v246h-1zM264 309h1v246h-1zM292 309h2v246h-2zM376 309h1v246h-1zM430 309h1v246h-1zM471 309h3v246h-3zM544 309h2v246h-2zM595 309h1v246h-1zM687 309h1v246h-1zM689 309h1v246h-1zM695 309h2v246h-2zM886 309h2v246h-2zM912 309h2v246h-2zM943 309h1v246h-1zM945 309h2v246h-2zM947 309h1v246h-1zM1159 309h1v246h-1zM1196 309h1v246h-1zM1297 309h2v246h-2zM1514 309h1v246h-1zM1719 309h2v246h-2zM1753 309h1v246h-1z"/><path fill="url(#g25)" d="M258 309h2v246h-2zM282 309h1v246h-1zM286 309h1v246h-1zM296 309h1v246h-1zM320 309h1v246h-1zM324 309h1v246h-1zM338 309h1v246h-1zM369 309h3v246h-3zM411 309h2v246h-2zM426 309h2v246h-2zM450 309h1v246h-1zM459 309h1v246h-1zM546 309h1v246h-1zM611 309h1v246h-1zM620 309h1v246h-1zM624 309h1v246h-1zM711 309h1v246h-1zM718 309h1v246h-1zM772 309h1v246h-1zM815 309h1v246h-1zM949 309h2v246h-2zM954 309h2v246h-2zM1055 309h2v246h-2zM1164 309h1v246h-1zM1165 309h2v246h-2zM1171 309h3v246h-3zM1199 309h3v246h-3zM1212 309h1v246h-1zM1320 309h2v246h-2zM1534 309h1v246h-1zM1577 309h1v246h-1zM1578 309h2v246h-2zM1585 309h2v246h-2zM1707 309h1v246h-1zM1708 309h1v246h-1zM1710 309h2v246h-2zM1712 309h1v246h-1zM1715 309h1v246h-1z"/><path fill="url(#g26)" d="M279 309h2v246h-2zM289 309h1v246h-1zM343 309h1v246h-1zM347 309h1v246h-1zM406 309h1v246h-1zM436 309h1v246h-1zM456 309h1v246h-1zM502 309h2v246h-2zM519 309h2v246h-2zM524 309h1v246h-1zM528 309h1v246h-1zM538 309h1v246h-1zM567 309h2v246h-2zM627 309h1v246h-1zM641 309h2v246h-2zM690 309h1v246h-1zM728 309h1v246h-1zM729 309h2v246h-2zM782 309h2v246h-2zM803 309h2v246h-2zM817 309h1v246h-1zM825 309h1v246h-1zM831 309h2v246h-2zM846 309h1v246h-1zM850 309h2v246h-2zM891 309h2v246h-2zM896 309h1v246h-1zM907 309h1v246h-1zM909 309h1v246h-1zM910 309h2v246h-2zM921 309h3v246h-3zM925 309h2v246h-2zM940 309h2v246h-2zM953 309h1v246h-1zM965 309h2v246h-2zM967 309h1v246h-1zM969 309h2v246h-2zM981 309h1v246h-1zM993 309h3v246h-3zM997 309h1v246h-1zM1009 309h2v246h-2zM1029 309h1v246h-1zM1061 309h1v246h-1zM1132 309h1v246h-1zM1153 309h1v246h-1zM1203 309h2v246h-2zM1517 309h3v246h-3zM1543 309h1v246h-1zM1544 309h2v246h-2zM1547 309h1v246h-1zM1587 309h2v246h-2zM1709 309h1v246h-1zM1782 309h2v246h-2zM1805 309h1v246h-1zM1809 309h2v246h-2z"/><path fill="url(#g27)" d="M261 309h1v246h-1zM266 309h1v246h-1zM277 309h2v246h-2zM284 309h2v246h-2zM302 309h2v246h-2zM315 309h1v246h-1zM328 309h2v246h-2zM330 309h2v246h-2zM332 309h2v246h-2zM351 309h1v246h-1zM386 309h1v246h-1zM397 309h2v246h-2zM403 309h1v246h-1zM418 309h1v246h-1zM432 309h1v246h-1zM453 309h2v246h-2zM460 309h2v246h-2zM464 309h2v246h-2zM467 309h1v246h-1zM486 309h2v246h-2zM516 309h3v246h-3zM583 309h2v246h-2zM633 309h1v246h-1zM702 309h1v246h-1zM704 309h1v246h-1zM705 309h1v246h-1zM713 309h2v246h-2zM784 309h2v246h-2zM786 309h1v246h-1zM859 309h1v246h-1zM884 309h1v246h-1zM927 309h1v246h-1zM932 309h2v246h-2zM979 309h2v246h-2zM1000 309h1v246h-1zM1007 309h1v246h-1zM1033 309h1v246h-1zM1044 309h1v246h-1zM1064 309h1v246h-1zM1079 309h2v246h-2zM1096 309h2v246h-2zM1102 309h2v246h-2zM1176 309h1v246h-1zM1193 309h1v246h-1zM1208 309h1v246h-1zM1214 309h1v246h-1zM1230 309h1v246h-1zM1294 309h2v246h-2zM1311 309h2v246h-2zM1361 309h1v246h-1zM1511 309h2v246h-2zM1525 309h2v246h-2zM1548 309h2v246h-2zM1554 309h2v246h-2zM1559 309h1v246h-1zM1569 309h1v246h-1zM1574 309h3v246h-3zM1584 309h1v246h-1zM1675 309h1v246h-1zM1705 309h2v246h-2zM1725 309h2v246h-2zM1760 309h1v246h-1zM1780 309h1v246h-1z"/><path fill="url(#g28)" d="M265 309h1v246h-1zM267 309h2v246h-2zM281 309h1v246h-1zM301 309h1v246h-1zM312 309h1v246h-1zM323 309h1v246h-1zM340 309h2v246h-2zM349 309h2v246h-2zM352 309h1v246h-1zM362 309h2v246h-2zM366 309h1v246h-1zM384 309h2v246h-2zM423 309h1v246h-1zM429 309h1v246h-1zM437 309h1v246h-1zM469 309h2v246h-2zM533 309h2v246h-2zM542 309h2v246h-2zM557 309h2v246h-2zM561 309h2v246h-2zM564 309h2v246h-2zM566 309h1v246h-1zM571 309h2v246h-2zM576 309h2v246h-2zM579 309h3v246h-3zM628 309h1v246h-1zM667 309h2v246h-2zM721 309h2v246h-2zM742 309h2v246h-2zM759 309h2v246h-2zM763 309h3v246h-3zM788 309h1v246h-1zM791 309h3v246h-3zM798 309h1v246h-1zM822 309h1v246h-1zM841 309h2v246h-2zM916 309h1v246h-1zM935 309h2v246h-2zM942 309h1v246h-1zM974 309h2v246h-2zM977 309h2v246h-2zM1001 309h1v246h-1zM1006 309h1v246h-1zM1119 309h2v246h-2zM1134 309h1v246h-1zM1187 309h2v246h-2zM1231 309h1v246h-1zM1245 309h2v246h-2zM1356 309h2v246h-2zM1465 309h2v246h-2zM1479 309h1v246h-1zM1495 309h1v246h-1zM1510 309h1v246h-1zM1527 309h1v246h-1zM1530 309h1v246h-1zM1550 309h2v246h-2zM1608 309h1v246h-1zM1614 309h3v246h-3zM1716 309h1v246h-1zM1754 309h2v246h-2zM1763 309h1v246h-1zM1766 309h2v246h-2zM1806 309h2v246h-2zM1812 309h1v246h-1z"/><path fill="url(#g29)" d="M295 309h1v246h-1zM317 309h2v246h-2zM334 309h1v246h-1zM335 309h1v246h-1zM339 309h1v246h-1zM355 309h1v246h-1zM358 309h2v246h-2zM374 309h1v246h-1zM378 309h1v246h-1zM388 309h1v246h-1zM393 309h1v246h-1zM401 309h2v246h-2zM404 309h1v246h-1zM408 309h2v246h-2zM417 309h1v246h-1zM421 309h1v246h-1zM422 309h1v246h-1zM428 309h1v246h-1zM447 309h2v246h-2zM508 309h2v246h-2zM512 309h1v246h-1zM549 309h3v246h-3zM555 309h2v246h-2zM603 309h1v246h-1zM607 309h1v246h-1zM614 309h2v246h-2zM646 309h1v246h-1zM647 309h2v246h-2zM669 309h2v246h-2zM673 309h1v246h-1zM692 309h1v246h-1zM703 309h1v246h-1zM716 309h2v246h-2zM720 309h1v246h-1zM726 309h2v246h-2zM736 309h1v246h-1zM773 309h1v246h-1zM807 309h2v246h-2zM829 309h1v246h-1zM834 309h2v246h-2zM844 309h2v246h-2zM848 309h2v246h-2zM868 309h1v246h-1zM870 309h1v246h-1zM897 309h2v246h-2zM930 309h2v246h-2zM951 309h2v246h-2zM956 309h1v246h-1zM959 309h1v246h-1zM964 309h1v246h-1zM976 309h1v246h-1zM985 309h2v246h-2zM1008 309h1v246h-1zM1026 309h1v246h-1zM1057 309h1v246h-1zM1069 309h1v246h-1zM1113 309h2v246h-2zM1191 309h2v246h-2zM1206 309h1v246h-1zM1209 309h2v246h-2zM1224 309h1v246h-1zM1234 309h2v246h-2zM1266 309h3v246h-3zM1289 309h1v246h-1zM1301 309h3v246h-3zM1385 309h1v246h-1zM1438 309h1v246h-1zM1468 309h1v246h-1zM1509 309h1v246h-1zM1513 309h1v246h-1zM1520 309h2v246h-2zM1522 309h2v246h-2zM1535 309h1v246h-1zM1566 309h3v246h-3zM1572 309h2v246h-2zM1580 309h1v246h-1zM1648 309h2v246h-2zM1656 309h1v246h-1zM1658 309h2v246h-2zM1680 309h1v246h-1zM1696 309h1v246h-1zM1735 309h1v246h-1zM1736 309h2v246h-2zM1769 309h1v246h-1zM1803 309h1v246h-1zM1817 309h1v246h-1z"/><path fill="url(#g30)" d="M271 309h3v246h-3zM283 309h1v246h-1zM297 309h2v246h-2zM310 309h2v246h-2zM316 309h1v246h-1zM321 309h2v246h-2zM413 309h1v246h-1zM440 309h1v246h-1zM441 309h2v246h-2zM449 309h1v246h-1zM452 309h1v246h-1zM474 309h1v246h-1zM478 309h1v246h-1zM493 309h1v246h-1zM497 309h1v246h-1zM521 309h1v246h-1zM526 309h1v246h-1zM552 309h3v246h-3zM573 309h1v246h-1zM574 309h1v246h-1zM605 309h2v246h-2zM608 309h2v246h-2zM612 309h1v246h-1zM616 309h1v246h-1zM617 309h2v246h-2zM644 309h2v246h-2zM649 309h1v246h-1zM666 309h1v246h-1zM691 309h1v246h-1zM739 309h1v246h-1zM744 309h2v246h-2zM746 309h2v246h-2zM776 309h3v246h-3zM799 309h1v246h-1zM847 309h1v246h-1zM854 309h2v246h-2zM856 309h2v246h-2zM858 309h1v246h-1zM880 309h2v246h-2zM894 309h1v246h-1zM905 309h2v246h-2zM914 309h2v246h-2zM937 309h1v246h-1zM938 309h2v246h-2zM948 309h1v246h-1zM957 309h2v246h-2zM968 309h1v246h-1zM989 309h1v246h-1zM1004 309h2v246h-2zM1022 309h1v246h-1zM1030 309h1v246h-1zM1034 309h2v246h-2zM1040 309h2v246h-2zM1063 309h1v246h-1zM1078 309h1v246h-1zM1087 309h2v246h-2zM1118 309h1v246h-1zM1147 309h3v246h-3zM1155 309h2v246h-2zM1161 309h2v246h-2zM1167 309h1v246h-1zM1169 309h1v246h-1zM1178 309h3v246h-3zM1238 309h2v246h-2zM1244 309h1v246h-1zM1248 309h2v246h-2zM1278 309h1v246h-1zM1284 309h1v246h-1zM1315 309h2v246h-2zM1352 309h2v246h-2zM1400 309h2v246h-2zM1412 309h1v246h-1zM1448 309h1v246h-1zM1452 309h2v246h-2zM1493 309h2v246h-2zM1507 309h1v246h-1zM1531 309h1v246h-1zM1537 309h2v246h-2zM1542 309h1v246h-1zM1552 309h2v246h-2zM1561 309h3v246h-3zM1571 309h1v246h-1zM1597 309h1v246h-1zM1617 309h2v246h-2zM1655 309h1v246h-1zM1670 309h1v246h-1zM1691 309h3v246h-3zM1729 309h1v246h-1zM1746 309h2v246h-2zM1799 309h3v246h-3zM1802 309h1v246h-1zM1816 309h1v246h-1z"/><path fill="url(#g31)" d="M269 309h2v246h-2zM290 309h2v246h-2zM299 309h2v246h-2zM314 309h1v246h-1zM336 309h2v246h-2zM372 309h1v246h-1zM381 309h2v246h-2zM387 309h1v246h-1zM389 309h2v246h-2zM407 309h1v246h-1zM424 309h2v246h-2zM431 309h1v246h-1zM498 309h1v246h-1zM501 309h1v246h-1zM525 309h1v246h-1zM547 309h2v246h-2zM599 309h2v246h-2zM604 309h1v246h-1zM610 309h1v246h-1zM619 309h1v246h-1zM639 309h2v246h-2zM643 309h1v246h-1zM661 309h2v246h-2zM664 309h2v246h-2zM671 309h2v246h-2zM701 309h1v246h-1zM712 309h1v246h-1zM732 309h2v246h-2zM749 309h1v246h-1zM761 309h1v246h-1zM768 309h1v246h-1zM771 309h1v246h-1zM780 309h1v246h-1zM813 309h2v246h-2zM818 309h1v246h-1zM824 309h1v246h-1zM860 309h1v246h-1zM869 309h1v246h-1zM877 309h3v246h-3zM895 309h1v246h-1zM901 309h2v246h-2zM924 309h1v246h-1zM960 309h1v246h-1zM961 309h1v246h-1zM962 309h2v246h-2zM987 309h2v246h-2zM996 309h1v246h-1zM1019 309h2v246h-2zM1023 309h1v246h-1zM1031 309h2v246h-2zM1050 309h1v246h-1zM1065 309h1v246h-1zM1067 309h1v246h-1zM1072 309h1v246h-1zM1098 309h2v246h-2zM1107 309h2v246h-2zM1117 309h1v246h-1zM1124 309h1v246h-1zM1127 309h1v246h-1zM1129 309h1v246h-1zM1150 309h1v246h-1zM1160 309h1v246h-1zM1177 309h1v246h-1zM1221 309h1v246h-1zM1225 309h2v246h-2zM1286 309h2v246h-2zM1290 309h2v246h-2zM1309 309h2v246h-2zM1337 309h2v246h-2zM1354 309h1v246h-1zM1402 309h2v246h-2zM1408 309h1v246h-1zM1415 309h1v246h-1zM1417 309h2v246h-2zM1426 309h1v246h-1zM1440 309h1v246h-1zM1469 309h3v246h-3zM1499 309h1v246h-1zM1528 309h2v246h-2zM1582 309h2v246h-2zM1598 309h3v246h-3zM1611 309h1v246h-1zM1631 309h2v246h-2zM1634 309h1v246h-1zM1666 309h1v246h-1zM1672 309h1v246h-1zM1734 309h1v246h-1zM1741 309h1v246h-1zM1749 309h2v246h-2zM1758 309h1v246h-1zM1761 309h1v246h-1zM1772 309h2v246h-2zM1791 309h2v246h-2zM1804 309h1v246h-1z"/><path fill="url(#g32)" d="M287 309h2v246h-2zM306 309h2v246h-2zM325 309h3v246h-3zM356 309h1v246h-1zM373 309h1v246h-1zM377 309h1v246h-1zM383 309h1v246h-1zM419 309h2v246h-2zM435 309h1v246h-1zM438 309h1v246h-1zM451 309h1v246h-1zM457 309h2v246h-2zM462 309h1v246h-1zM463 309h1v246h-1zM468 309h1v246h-1zM480 309h2v246h-2zM482 309h1v246h-1zM504 309h1v246h-1zM510 309h1v246h-1zM531 309h2v246h-2zM560 309h1v246h-1zM587 309h1v246h-1zM592 309h1v246h-1zM634 309h1v246h-1zM635 309h2v246h-2zM637 309h2v246h-2zM651 309h3v246h-3zM674 309h1v246h-1zM681 309h1v246h-1zM684 309h1v246h-1zM685 309h2v246h-2zM688 309h1v246h-1zM693 309h2v246h-2zM706 309h2v246h-2zM750 309h2v246h-2zM752 309h1v246h-1zM756 309h1v246h-1zM774 309h2v246h-2zM781 309h1v246h-1zM787 309h1v246h-1zM789 309h1v246h-1zM801 309h2v246h-2zM811 309h2v246h-2zM816 309h1v246h-1zM820 309h2v246h-2zM827 309h2v246h-2zM833 309h1v246h-1zM866 309h2v246h-2zM899 309h2v246h-2zM908 309h1v246h-1zM917 309h2v246h-2zM928 309h2v246h-2zM971 309h3v246h-3zM990 309h1v246h-1zM998 309h2v246h-2zM1016 309h1v246h-1zM1024 309h2v246h-2zM1042 309h1v246h-1zM1047 309h2v246h-2zM1070 309h2v246h-2zM1137 309h2v246h-2zM1170 309h1v246h-1zM1174 309h2v246h-2zM1194 309h1v246h-1zM1195 309h1v246h-1zM1202 309h1v246h-1zM1219 309h1v246h-1zM1223 309h1v246h-1zM1259 309h1v246h-1zM1306 309h2v246h-2zM1346 309h2v246h-2zM1398 309h2v246h-2zM1423 309h1v246h-1zM1460 309h2v246h-2zM1477 309h2v246h-2zM1496 309h2v246h-2zM1501 309h1v246h-1zM1506 309h1v246h-1zM1533 309h1v246h-1zM1539 309h1v246h-1zM1560 309h1v246h-1zM1593 309h2v246h-2zM1595 309h2v246h-2zM1628 309h1v246h-1zM1629 309h2v246h-2zM1698 309h1v246h-1zM1703 309h2v246h-2zM1722 309h2v246h-2zM1756 309h2v246h-2zM1770 309h1v246h-1zM1784 309h2v246h-2zM1813 309h2v246h-2z"/><path fill="url(#g33)" d="M263 309h1v246h-1zM274 309h2v246h-2zM304 309h1v246h-1zM313 309h1v246h-1zM319 309h1v246h-1zM348 309h1v246h-1zM367 309h2v246h-2zM375 309h1v246h-1zM391 309h2v246h-2zM395 309h2v246h-2zM399 309h2v246h-2zM414 309h2v246h-2zM434 309h1v246h-1zM488 309h3v246h-3zM491 309h1v246h-1zM499 309h2v246h-2zM505 309h2v246h-2zM507 309h1v246h-1zM515 309h1v246h-1zM527 309h1v246h-1zM535 309h1v246h-1zM575 309h1v246h-1zM588 309h2v246h-2zM601 309h1v246h-1zM659 309h1v246h-1zM660 309h1v246h-1zM678 309h2v246h-2zM682 309h1v246h-1zM737 309h2v246h-2zM753 309h2v246h-2zM779 309h1v246h-1zM795 309h3v246h-3zM805 309h2v246h-2zM810 309h1v246h-1zM823 309h1v246h-1zM836 309h2v246h-2zM840 309h1v246h-1zM843 309h1v246h-1zM861 309h2v246h-2zM864 309h2v246h-2zM875 309h1v246h-1zM882 309h1v246h-1zM890 309h1v246h-1zM920 309h1v246h-1zM944 309h1v246h-1zM1002 309h2v246h-2zM1011 309h2v246h-2zM1028 309h1v246h-1zM1045 309h2v246h-2zM1051 309h2v246h-2zM1109 309h2v246h-2zM1122 309h2v246h-2zM1130 309h1v246h-1zM1141 309h3v246h-3zM1144 309h1v246h-1zM1157 309h2v246h-2zM1163 309h1v246h-1zM1227 309h2v246h-2zM1257 309h1v246h-1zM1270 309h1v246h-1zM1308 309h1v246h-1zM1314 309h1v246h-1zM1329 309h2v246h-2zM1339 309h1v246h-1zM1340 309h1v246h-1zM1341 309h1v246h-1zM1367 309h1v246h-1zM1377 309h3v246h-3zM1391 309h1v246h-1zM1394 309h2v246h-2zM1420 309h1v246h-1zM1433 309h1v246h-1zM1443 309h2v246h-2zM1484 309h1v246h-1zM1503 309h2v246h-2zM1515 309h2v246h-2zM1556 309h1v246h-1zM1591 309h1v246h-1zM1592 309h1v246h-1zM1601 309h3v246h-3zM1678 309h1v246h-1zM1724 309h1v246h-1zM1739 309h2v246h-2zM1742 309h1v246h-1zM1752 309h1v246h-1zM1794 309h1v246h-1zM1795 309h2v246h-2zM1797 309h2v246h-2zM1808 309h1v246h-1z"/><path fill="url(#g34)" d="M260 309h1v246h-1zM342 309h1v246h-1zM344 309h3v246h-3zM353 309h2v246h-2zM360 309h2v246h-2zM405 309h1v246h-1zM433 309h1v246h-1zM446 309h1v246h-1zM475 309h3v246h-3zM540 309h2v246h-2zM590 309h1v246h-1zM594 309h1v246h-1zM597 309h2v246h-2zM602 309h1v246h-1zM621 309h2v246h-2zM629 309h2v246h-2zM631 309h1v246h-1zM654 309h2v246h-2zM663 309h1v246h-1zM677 309h1v246h-1zM697 309h2v246h-2zM709 309h2v246h-2zM719 309h1v246h-1zM723 309h2v246h-2zM757 309h2v246h-2zM769 309h2v246h-2zM819 309h1v246h-1zM826 309h1v246h-1zM838 309h1v246h-1zM852 309h1v246h-1zM871 309h1v246h-1zM873 309h2v246h-2zM883 309h1v246h-1zM885 309h1v246h-1zM888 309h2v246h-2zM1015 309h1v246h-1zM1018 309h1v246h-1zM1027 309h1v246h-1zM1037 309h1v246h-1zM1049 309h1v246h-1zM1053 309h2v246h-2zM1060 309h1v246h-1zM1068 309h1v246h-1zM1075 309h1v246h-1zM1076 309h2v246h-2zM1106 309h1v246h-1zM1145 309h1v246h-1zM1185 309h2v246h-2zM1189 309h1v246h-1zM1205 309h1v246h-1zM1211 309h1v246h-1zM1229 309h1v246h-1zM1275 309h1v246h-1zM1277 309h1v246h-1zM1283 309h1v246h-1zM1323 309h2v246h-2zM1327 309h1v246h-1zM1350 309h2v246h-2zM1370 309h1v246h-1zM1371 309h2v246h-2zM1389 309h2v246h-2zM1416 309h1v246h-1zM1425 309h1v246h-1zM1429 309h2v246h-2zM1441 309h1v246h-1zM1456 309h1v246h-1zM1483 309h1v246h-1zM1490 309h1v246h-1zM1500 309h1v246h-1zM1540 309h1v246h-1zM1546 309h1v246h-1zM1590 309h1v246h-1zM1642 309h1v246h-1zM1645 309h2v246h-2zM1674 309h1v246h-1zM1679 309h1v246h-1zM1682 309h2v246h-2zM1727 309h2v246h-2zM1732 309h1v246h-1zM1743 309h1v246h-1zM1744 309h2v246h-2zM1751 309h1v246h-1zM1762 309h1v246h-1zM1764 309h2v246h-2zM1768 309h1v246h-1zM1774 309h1v246h-1zM1775 309h2v246h-2zM1777 309h1v246h-1zM1793 309h1v246h-1z"/><path fill="url(#g35)" d="M309 309h1v246h-1zM365 309h1v246h-1zM379 309h2v246h-2zM410 309h1v246h-1zM416 309h1v246h-1zM455 309h1v246h-1zM466 309h1v246h-1zM479 309h1v246h-1zM483 309h1v246h-1zM494 309h1v246h-1zM578 309h1v246h-1zM586 309h1v246h-1zM596 309h1v246h-1zM623 309h1v246h-1zM632 309h1v246h-1zM740 309h2v246h-2zM800 309h1v246h-1zM830 309h1v246h-1zM893 309h1v246h-1zM1058 309h2v246h-2zM1073 309h2v246h-2zM1091 309h2v246h-2zM1094 309h2v246h-2zM1151 309h2v246h-2zM1190 309h1v246h-1zM1207 309h1v246h-1zM1213 309h1v246h-1zM1233 309h1v246h-1zM1256 309h1v246h-1zM1272 309h1v246h-1zM1279 309h2v246h-2zM1282 309h1v246h-1zM1293 309h1v246h-1zM1304 309h2v246h-2zM1335 309h2v246h-2zM1343 309h2v246h-2zM1396 309h2v246h-2zM1428 309h1v246h-1zM1434 309h1v246h-1zM1462 309h1v246h-1zM1474 309h1v246h-1zM1476 309h1v246h-1zM1487 309h2v246h-2zM1604 309h1v246h-1zM1613 309h1v246h-1zM1621 309h2v246h-2zM1635 309h1v246h-1zM1636 309h2v246h-2zM1640 309h2v246h-2zM1643 309h2v246h-2zM1650 309h2v246h-2zM1662 309h2v246h-2zM1681 309h1v246h-1zM1685 309h1v246h-1zM1689 309h2v246h-2zM1730 309h2v246h-2zM1733 309h1v246h-1zM1759 309h1v246h-1zM1778 309h2v246h-2zM1787 309h2v246h-2zM1789 309h1v246h-1z"/><path fill="url(#g36)" d="M484 309h2v246h-2zM492 309h1v246h-1zM495 309h2v246h-2zM522 309h1v246h-1zM559 309h1v246h-1zM563 309h1v246h-1zM569 309h1v246h-1zM625 309h2v246h-2zM656 309h3v246h-3zM735 309h1v246h-1zM762 309h1v246h-1zM766 309h2v246h-2zM903 309h2v246h-2zM934 309h1v246h-1zM1066 309h1v246h-1zM1081 309h2v246h-2zM1089 309h2v246h-2zM1128 309h1v246h-1zM1182 309h2v246h-2zM1197 309h2v246h-2zM1215 309h1v246h-1zM1217 309h2v246h-2zM1236 309h2v246h-2zM1253 309h2v246h-2zM1260 309h1v246h-1zM1285 309h1v246h-1zM1296 309h1v246h-1zM1313 309h1v246h-1zM1317 309h1v246h-1zM1348 309h2v246h-2zM1362 309h2v246h-2zM1368 309h1v246h-1zM1376 309h1v246h-1zM1381 309h2v246h-2zM1431 309h1v246h-1zM1435 309h2v246h-2zM1437 309h1v246h-1zM1446 309h1v246h-1zM1451 309h1v246h-1zM1524 309h1v246h-1zM1541 309h1v246h-1zM1557 309h1v246h-1zM1558 309h1v246h-1zM1570 309h1v246h-1zM1605 309h2v246h-2zM1609 309h2v246h-2zM1612 309h1v246h-1zM1625 309h2v246h-2zM1652 309h2v246h-2zM1661 309h1v246h-1zM1667 309h1v246h-1zM1677 309h1v246h-1zM1686 309h2v246h-2zM1771 309h1v246h-1zM1781 309h1v246h-1zM1786 309h1v246h-1zM1811 309h1v246h-1z"/><path fill="url(#g37)" d="M305 309h1v246h-1zM613 309h1v246h-1zM650 309h1v246h-1zM683 309h1v246h-1zM725 309h1v246h-1zM731 309h1v246h-1zM734 309h1v246h-1zM755 309h1v246h-1zM794 309h1v246h-1zM863 309h1v246h-1zM1021 309h1v246h-1zM1083 309h1v246h-1zM1100 309h1v246h-1zM1104 309h1v246h-1zM1105 309h1v246h-1zM1111 309h2v246h-2zM1115 309h2v246h-2zM1125 309h2v246h-2zM1135 309h2v246h-2zM1146 309h1v246h-1zM1168 309h1v246h-1zM1241 309h1v246h-1zM1242 309h2v246h-2zM1247 309h1v246h-1zM1250 309h3v246h-3zM1265 309h1v246h-1zM1269 309h1v246h-1zM1271 309h1v246h-1zM1299 309h2v246h-2zM1331 309h2v246h-2zM1383 309h2v246h-2zM1388 309h1v246h-1zM1392 309h2v246h-2zM1404 309h2v246h-2zM1409 309h2v246h-2zM1421 309h2v246h-2zM1432 309h1v246h-1zM1442 309h1v246h-1zM1447 309h1v246h-1zM1454 309h2v246h-2zM1457 309h1v246h-1zM1459 309h1v246h-1zM1473 309h1v246h-1zM1475 309h1v246h-1zM1481 309h1v246h-1zM1489 309h1v246h-1zM1491 309h1v246h-1zM1492 309h1v246h-1zM1502 309h1v246h-1zM1505 309h1v246h-1zM1623 309h1v246h-1zM1657 309h1v246h-1zM1684 309h1v246h-1zM1748 309h1v246h-1z"/><path fill="url(#g38)" d="M276 309h1v246h-1zM294 309h1v246h-1zM394 309h1v246h-1zM570 309h1v246h-1zM582 309h1v246h-1zM809 309h1v246h-1zM839 309h1v246h-1zM853 309h1v246h-1zM1017 309h1v246h-1zM1062 309h1v246h-1zM1084 309h1v246h-1zM1085 309h2v246h-2zM1131 309h1v246h-1zM1139 309h2v246h-2zM1184 309h1v246h-1zM1216 309h1v246h-1zM1232 309h1v246h-1zM1240 309h1v246h-1zM1261 309h1v246h-1zM1263 309h1v246h-1zM1273 309h2v246h-2zM1292 309h1v246h-1zM1322 309h1v246h-1zM1325 309h1v246h-1zM1333 309h1v246h-1zM1334 309h1v246h-1zM1355 309h1v246h-1zM1358 309h2v246h-2zM1360 309h1v246h-1zM1369 309h1v246h-1zM1373 309h2v246h-2zM1386 309h2v246h-2zM1406 309h1v246h-1zM1407 309h1v246h-1zM1413 309h1v246h-1zM1414 309h1v246h-1zM1419 309h1v246h-1zM1449 309h2v246h-2zM1508 309h1v246h-1zM1620 309h1v246h-1zM1638 309h2v246h-2zM1673 309h1v246h-1zM1676 309h1v246h-1zM1688 309h1v246h-1zM1694 309h2v246h-2zM1721 309h1v246h-1z"/><path fill="url(#g39)" d="M364 309h1v246h-1zM715 309h1v246h-1zM872 309h1v246h-1zM1133 309h1v246h-1zM1220 309h1v246h-1zM1222 309h1v246h-1zM1258 309h1v246h-1zM1264 309h1v246h-1zM1281 309h1v246h-1zM1288 309h1v246h-1zM1345 309h1v246h-1zM1364 309h1v246h-1zM1411 309h1v246h-1zM1424 309h1v246h-1zM1427 309h1v246h-1zM1472 309h1v246h-1zM1480 309h1v246h-1zM1485 309h2v246h-2zM1633 309h1v246h-1zM1647 309h1v246h-1zM1664 309h2v246h-2zM1668 309h1v246h-1zM1671 309h1v246h-1zM1699 309h2v246h-2zM1701 309h1v246h-1zM1702 309h1v246h-1z"/><path fill="url(#g40)" d="M511 309h1v246h-1zM585 309h1v246h-1zM748 309h1v246h-1zM790 309h1v246h-1zM1093 309h1v246h-1zM1154 309h1v246h-1zM1262 309h1v246h-1zM1318 309h2v246h-2zM1328 309h1v246h-1zM1366 309h1v246h-1zM1439 309h1v246h-1zM1458 309h1v246h-1zM1607 309h1v246h-1zM1619 309h1v246h-1zM1627 309h1v246h-1zM1697 309h1v246h-1zM1738 309h1v246h-1zM1790 309h1v246h-1zM1815 309h1v246h-1z"/><path fill="url(#g41)" d="M357 309h1v246h-1zM591 309h1v246h-1zM1463 309h2v246h-2zM1467 309h1v246h-1zM1498 309h1v246h-1zM1654 309h1v246h-1zM1660 309h1v246h-1z"/><path fill="url(#g42)" d="M593 309h1v246h-1zM1101 309h1v246h-1zM1121 309h1v246h-1zM1255 309h1v246h-1zM1375 309h1v246h-1z"/><path fill="url(#g43)" d="M1276 309h1v246h-1zM1342 309h1v246h-1zM1365 309h1v246h-1zM1445 309h1v246h-1z"/><path fill="url(#g44)" d="M1380 309h1v246h-1zM1624 309h1v246h-1zM1669 309h1v246h-1z"/><path fill="url(#g45)" d="M1326 309h1v246h-1zM1482 309h1v246h-1z"/><use href="#stk"/></g><path d="M470 170H481V446H470zM553 170H570V452H553zM1708 170H1719V462H1708zM1786 170H1840V560H1826C1822 520 1812 420 1800 385C1795 372 1790 368 1786 366z" fill="rgb(6,0,31)" filter="url(#bm)"/></g></g></svg>
<div class="abs" style="left:254px;top:180px;width:1px;height:755px;background:repeating-linear-gradient(#fff 0,#fff 1px,#222 1px,#222 2px)"></div>
<div class="abs" style="left:255px;top:935px;width:1572px;height:11px;background:#505050"></div>
<svg class="abs" style="left:254px;top:935px" width="12" height="11"><path d="M0 0h1l11 11H0z" fill="#fff"/></svg>
<div class="abs" style="left:252px;top:946px;width:1576px;height:28px;background:#6e6e6e"></div>
<div class="abs" style="left:254px;top:946px;width:1574px;height:1px;background:#c4c4c4"></div>
<svg class="abs" style="left:252px;top:946px" width="1580" height="28" font-family="Liberation Sans" font-size="9.4" fill="#d6d6d6"><rect x="3" y="1" width="1" height="9" fill="#e0e0e0"/><rect x="19" y="1" width="1" height="4" fill="#e0e0e0"/><rect x="35" y="1" width="1" height="9" fill="#e0e0e0"/><rect x="51" y="1" width="1" height="4" fill="#e0e0e0"/><rect x="67" y="1" width="1" height="9" fill="#e0e0e0"/><rect x="84" y="1" width="1" height="4" fill="#e0e0e0"/><rect x="100" y="1" width="1" height="9" fill="#e0e0e0"/><rect x="116" y="1" width="1" height="4" fill="#e0e0e0"/><rect x="132" y="1" width="1" height="9" fill="#e0e0e0"/><rect x="148" y="1" width="1" height="4" fill="#e0e0e0"/><rect x="164" y="1" width="1" height="9" fill="#e0e0e0"/><rect x="181" y="1" width="1" height="4" fill="#e0e0e0"/><rect x="197" y="1" width="1" height="9" fill="#e0e0e0"/><rect x="213" y="1" width="1" height="4" fill="#e0e0e0"/><rect x="229" y="1" width="1" height="9" fill="#e0e0e0"/><rect x="245" y="1" width="1" height="4" fill="#e0e0e0"/><rect x="262" y="1" width="1" height="9" fill="#e0e0e0"/><rect x="278" y="1" width="1" height="4" fill="#e0e0e0"/><rect x="294" y="1" width="1" height="9" fill="#e0e0e0"/><rect x="310" y="1" width="1" height="4" fill="#e0e0e0"/><rect x="326" y="1" width="1" height="9" fill="#e0e0e0"/><rect x="342" y="1" width="1" height="4" fill="#e0e0e0"/><rect x="359" y="1" width="1" height="9" fill="#e0e0e0"/><rect x="375" y="1" width="1" height="4" fill="#e0e0e0"/><rect x="391" y="1" width="1" height="9" fill="#e0e0e0"/><rect x="407" y="1" width="1" height="4" fill="#e0e0e0"/><rect x="423" y="1" width="1" height="9" fill="#e0e0e0"/><rect x="440" y="1" width="1" height="4" fill="#e0e0e0"/><rect x="456" y="1" width="1" height="9" fill="#e0e0e0"/><rect x="472" y="1" width="1" height="4" fill="#e0e0e0"/><rect x="488" y="1" width="1" height="9" fill="#e0e0e0"/><rect x="504" y="1" width="1" height="4" fill="#e0e0e0"/><rect x="520" y="1" width="1" height="9" fill="#e0e0e0"/><rect x="537" y="1" width="1" height="4" fill="#e0e0e0"/><rect x="553" y="1" width="1" height="9" fill="#e0e0e0"/><rect x="569" y="1" width="1" height="4" fill="#e0e0e0"/><rect x="585" y="1" width="1" height="9" fill="#e0e0e0"/><rect x="601" y="1" width="1" height="4" fill="#e0e0e0"/><rect x="618" y="1" width="1" height="9" fill="#e0e0e0"/><rect x="634" y="1" width="1" height="4" fill="#e0e0e0"/><rect x="650" y="1" width="1" height="9" fill="#e0e0e0"/><rect x="666" y="1" width="1" height="4" fill="#e0e0e0"/><rect x="682" y="1" width="1" height="9" fill="#e0e0e0"/><rect x="698" y="1" width="1" height="4" fill="#e0e0e0"/><rect x="715" y="1" width="1" height="9" fill="#e0e0e0"/><rect x="731" y="1" width="1" height="4" fill="#e0e0e0"/><rect x="747" y="1" width="1" height="9" fill="#e0e0e0"/><rect x="763" y="1" width="1" height="4" fill="#e0e0e0"/><rect x="779" y="1" width="1" height="9" fill="#e0e0e0"/><rect x="796" y="1" width="1" height="4" fill="#e0e0e0"/><rect x="812" y="1" width="1" height="9" fill="#e0e0e0"/><rect x="828" y="1" width="1" height="4" fill="#e0e0e0"/><rect x="844" y="1" width="1" height="9" fill="#e0e0e0"/><rect x="860" y="1" width="1" height="4" fill="#e0e0e0"/><rect x="876" y="1" width="1" height="9" fill="#e0e0e0"/><rect x="893" y="1" width="1" height="4" fill="#e0e0e0"/><rect x="909" y="1" width="1" height="9" fill="#e0e0e0"/><rect x="925" y="1" width="1" height="4" fill="#e0e0e0"/><rect x="941" y="1" width="1" height="9" fill="#e0e0e0"/><rect x="957" y="1" width="1" height="4" fill="#e0e0e0"/><rect x="974" y="1" width="1" height="9" fill="#e0e0e0"/><rect x="990" y="1" width="1" height="4" fill="#e0e0e0"/><rect x="1006" y="1" width="1" height="9" fill="#e0e0e0"/><rect x="1022" y="1" width="1" height="4" fill="#e0e0e0"/><rect x="1038" y="1" width="1" height="9" fill="#e0e0e0"/><rect x="1054" y="1" width="1" height="4" fill="#e0e0e0"/><rect x="1071" y="1" width="1" height="9" fill="#e0e0e0"/><rect x="1087" y="1" width="1" height="4" fill="#e0e0e0"/><rect x="1103" y="1" width="1" height="9" fill="#e0e0e0"/><rect x="1119" y="1" width="1" height="4" fill="#e0e0e0"/><rect x="1135" y="1" width="1" height="9" fill="#e0e0e0"/><rect x="1152" y="1" width="1" height="4" fill="#e0e0e0"/><rect x="1168" y="1" width="1" height="9" fill="#e0e0e0"/><rect x="1184" y="1" width="1" height="4" fill="#e0e0e0"/><rect x="1200" y="1" width="1" height="9" fill="#e0e0e0"/><rect x="1216" y="1" width="1" height="4" fill="#e0e0e0"/><rect x="1232" y="1" width="1" height="9" fill="#e0e0e0"/><rect x="1249" y="1" width="1" height="4" fill="#e0e0e0"/><rect x="1265" y="1" width="1" height="9" fill="#e0e0e0"/><rect x="1281" y="1" width="1" height="4" fill="#e0e0e0"/><rect x="1297" y="1" width="1" height="9" fill="#e0e0e0"/><rect x="1313" y="1" width="1" height="4" fill="#e0e0e0"/><rect x="1330" y="1" width="1" height="9" fill="#e0e0e0"/><rect x="1346" y="1" width="1" height="4" fill="#e0e0e0"/><rect x="1362" y="1" width="1" height="9" fill="#e0e0e0"/><rect x="1378" y="1" width="1" height="4" fill="#e0e0e0"/><rect x="1394" y="1" width="1" height="9" fill="#e0e0e0"/><rect x="1410" y="1" width="1" height="4" fill="#e0e0e0"/><rect x="1427" y="1" width="1" height="9" fill="#e0e0e0"/><rect x="1443" y="1" width="1" height="4" fill="#e0e0e0"/><rect x="1459" y="1" width="1" height="9" fill="#e0e0e0"/><rect x="1475" y="1" width="1" height="4" fill="#e0e0e0"/><rect x="1491" y="1" width="1" height="9" fill="#e0e0e0"/><rect x="1508" y="1" width="1" height="4" fill="#e0e0e0"/><rect x="1524" y="1" width="1" height="9" fill="#e0e0e0"/><rect x="1540" y="1" width="1" height="4" fill="#e0e0e0"/><rect x="1556" y="1" width="1" height="9" fill="#e0e0e0"/><rect x="1572" y="1" width="1" height="4" fill="#e0e0e0"/><text x="67.8" y="22" text-anchor="middle">0:20</text><text x="100.2" y="22" text-anchor="middle">0:30</text><text x="132.6" y="22" text-anchor="middle">0:40</text><text x="164.9" y="22" text-anchor="middle">0:50</text><text x="197.3" y="22" text-anchor="middle">1:00</text><text x="229.7" y="22" text-anchor="middle">1:10</text><text x="262.0" y="22" text-anchor="middle">1:20</text><text x="294.4" y="22" text-anchor="middle">1:30</text><text x="326.8" y="22" text-anchor="middle">1:40</text><text x="359.1" y="22" text-anchor="middle">1:50</text><text x="391.5" y="22" text-anchor="middle">2:00</text><text x="423.8" y="22" text-anchor="middle">2:10</text><text x="456.2" y="22" text-anchor="middle">2:20</text><text x="488.6" y="22" text-anchor="middle">2:30</text><text x="520.9" y="22" text-anchor="middle">2:40</text><text x="553.3" y="22" text-anchor="middle">2:50</text><text x="585.7" y="22" text-anchor="middle">3:00</text><text x="618.0" y="22" text-anchor="middle">3:10</text><text x="650.4" y="22" text-anchor="middle">3:20</text><text x="682.8" y="22" text-anchor="middle">3:30</text><text x="715.1" y="22" text-anchor="middle">3:40</text><text x="747.5" y="22" text-anchor="middle">3:50</text><text x="779.9" y="22" text-anchor="middle">4:00</text><text x="812.2" y="22" text-anchor="middle">4:10</text><text x="844.6" y="22" text-anchor="middle">4:20</text><text x="877.0" y="22" text-anchor="middle">4:30</text><text x="909.3" y="22" text-anchor="middle">4:40</text><text x="941.7" y="22" text-anchor="middle">4:50</text><text x="974.0" y="22" text-anchor="middle">5:00</text><text x="1006.4" y="22" text-anchor="middle">5:10</text><text x="1038.8" y="22" text-anchor="middle">5:20</text><text x="1071.1" y="22" text-anchor="middle">5:30</text><text x="1103.5" y="22" text-anchor="middle">5:40</text><text x="1135.9" y="22" text-anchor="middle">5:50</text><text x="1168.2" y="22" text-anchor="middle">6:00</text><text x="1200.6" y="22" text-anchor="middle">6:10</text><text x="1233.0" y="22" text-anchor="middle">6:20</text><text x="1265.3" y="22" text-anchor="middle">6:30</text><text x="1297.7" y="22" text-anchor="middle">6:40</text><text x="1330.1" y="22" text-anchor="middle">6:50</text><text x="1362.4" y="22" text-anchor="middle">7:00</text><text x="1394.8" y="22" text-anchor="middle">7:10</text><text x="1427.2" y="22" text-anchor="middle">7:20</text><text x="1459.5" y="22" text-anchor="middle">7:30</text><text x="1491.9" y="22" text-anchor="middle">7:40</text><text x="1524.3" y="22" text-anchor="middle">7:50</text><text x="1556.6" y="22" text-anchor="middle">8:00</text><text x="2" y="21">hms</text></svg>
<div class="abs" style="left:1827px;top:157px;width:1px;height:789px;background:#d8d8d8"></div>
<svg class="abs" style="left:1827px;top:155px" width="50" height="800" font-family="Liberation Sans" font-size="9.4" fill="#d6d6d6"><rect x="1" y="392" width="4" height="1" fill="#d8d8d8"/><rect x="1" y="385" width="4" height="1" fill="#d8d8d8"/><rect x="1" y="378" width="4" height="1" fill="#d8d8d8"/><rect x="1" y="370" width="4" height="1" fill="#d8d8d8"/><rect x="1" y="363" width="8" height="1" fill="#d8d8d8"/><text x="13" y="367">5000</text><rect x="1" y="356" width="4" height="1" fill="#d8d8d8"/><rect x="1" y="348" width="4" height="1" fill="#d8d8d8"/><rect x="1" y="341" width="4" height="1" fill="#d8d8d8"/><rect x="1" y="334" width="4" height="1" fill="#d8d8d8"/><rect x="1" y="326" width="8" height="1" fill="#d8d8d8"/><text x="13" y="330">10000</text><rect x="1" y="319" width="4" height="1" fill="#d8d8d8"/><rect x="1" y="312" width="4" height="1" fill="#d8d8d8"/><rect x="1" y="304" width="4" height="1" fill="#d8d8d8"/><rect x="1" y="297" width="4" height="1" fill="#d8d8d8"/><rect x="1" y="290" width="8" height="1" fill="#d8d8d8"/><text x="13" y="294">15000</text><rect x="1" y="283" width="4" height="1" fill="#d8d8d8"/><rect x="1" y="275" width="4" height="1" fill="#d8d8d8"/><rect x="1" y="268" width="4" height="1" fill="#d8d8d8"/><rect x="1" y="261" width="4" height="1" fill="#d8d8d8"/><rect x="1" y="253" width="8" height="1" fill="#d8d8d8"/><text x="13" y="257">20000</text><rect x="1" y="246" width="4" height="1" fill="#d8d8d8"/><rect x="1" y="239" width="4" height="1" fill="#d8d8d8"/><rect x="1" y="231" width="4" height="1" fill="#d8d8d8"/><rect x="1" y="224" width="4" height="1" fill="#d8d8d8"/><rect x="1" y="217" width="8" height="1" fill="#d8d8d8"/><text x="13" y="221">25000</text><rect x="1" y="209" width="4" height="1" fill="#d8d8d8"/><rect x="1" y="202" width="4" height="1" fill="#d8d8d8"/><rect x="1" y="195" width="4" height="1" fill="#d8d8d8"/><rect x="1" y="188" width="4" height="1" fill="#d8d8d8"/><rect x="1" y="180" width="8" height="1" fill="#d8d8d8"/><text x="13" y="184">30000</text><rect x="1" y="173" width="4" height="1" fill="#d8d8d8"/><rect x="1" y="166" width="4" height="1" fill="#d8d8d8"/><rect x="1" y="158" width="4" height="1" fill="#d8d8d8"/><rect x="1" y="151" width="4" height="1" fill="#d8d8d8"/><rect x="1" y="144" width="8" height="1" fill="#d8d8d8"/><text x="13" y="148">35000</text><rect x="1" y="136" width="4" height="1" fill="#d8d8d8"/><rect x="1" y="129" width="4" height="1" fill="#d8d8d8"/><rect x="1" y="122" width="4" height="1" fill="#d8d8d8"/><rect x="1" y="114" width="4" height="1" fill="#d8d8d8"/><rect x="1" y="107" width="8" height="1" fill="#d8d8d8"/><text x="13" y="111">40000</text><rect x="1" y="100" width="4" height="1" fill="#d8d8d8"/><rect x="1" y="92" width="4" height="1" fill="#d8d8d8"/><rect x="1" y="85" width="4" height="1" fill="#d8d8d8"/><rect x="1" y="78" width="4" height="1" fill="#d8d8d8"/><rect x="1" y="71" width="8" height="1" fill="#d8d8d8"/><text x="13" y="75">45000</text><rect x="1" y="63" width="4" height="1" fill="#d8d8d8"/><rect x="1" y="56" width="4" height="1" fill="#d8d8d8"/><rect x="1" y="49" width="4" height="1" fill="#d8d8d8"/><rect x="1" y="41" width="4" height="1" fill="#d8d8d8"/><rect x="1" y="34" width="8" height="1" fill="#d8d8d8"/><text x="13" y="38">50000</text><rect x="1" y="27" width="4" height="1" fill="#d8d8d8"/><rect x="1" y="772" width="4" height="1" fill="#d8d8d8"/><rect x="1" y="765" width="4" height="1" fill="#d8d8d8"/><rect x="1" y="758" width="4" height="1" fill="#d8d8d8"/><rect x="1" y="750" width="4" height="1" fill="#d8d8d8"/><rect x="1" y="743" width="8" height="1" fill="#d8d8d8"/><text x="13" y="747">5000</text><rect x="1" y="736" width="4" height="1" fill="#d8d8d8"/><rect x="1" y="728" width="4" height="1" fill="#d8d8d8"/><rect x="1" y="721" width="4" height="1" fill="#d8d8d8"/><rect x="1" y="714" width="4" height="1" fill="#d8d8d8"/><rect x="1" y="706" width="8" height="1" fill="#d8d8d8"/><text x="13" y="710">10000</text><rect x="1" y="699" width="4" height="1" fill="#d8d8d8"/><rect x="1" y="692" width="4" height="1" fill="#d8d8d8"/><rect x="1" y="684" width="4" height="1" fill="#d8d8d8"/><rect x="1" y="677" width="4" height="1" fill="#d8d8d8"/><rect x="1" y="670" width="8" height="1" fill="#d8d8d8"/><text x="13" y="674">15000</text><rect x="1" y="663" width="4" height="1" fill="#d8d8d8"/><rect x="1" y="655" width="4" height="1" fill="#d8d8d8"/><rect x="1" y="648" width="4" height="1" fill="#d8d8d8"/><rect x="1" y="641" width="4" height="1" fill="#d8d8d8"/><rect x="1" y="633" width="8" height="1" fill="#d8d8d8"/><text x="13" y="637">20000</text><rect x="1" y="626" width="4" height="1" fill="#d8d8d8"/><rect x="1" y="619" width="4" height="1" fill="#d8d8d8"/><rect x="1" y="611" width="4" height="1" fill="#d8d8d8"/><rect x="1" y="604" width="4" height="1" fill="#d8d8d8"/><rect x="1" y="597" width="8" height="1" fill="#d8d8d8"/><text x="13" y="601">25000</text><rect x="1" y="589" width="4" height="1" fill="#d8d8d8"/><rect x="1" y="582" width="4" height="1" fill="#d8d8d8"/><rect x="1" y="575" width="4" height="1" fill="#d8d8d8"/><rect x="1" y="568" width="4" height="1" fill="#d8d8d8"/><rect x="1" y="560" width="8" height="1" fill="#d8d8d8"/><text x="13" y="564">30000</text><rect x="1" y="553" width="4" height="1" fill="#d8d8d8"/><rect x="1" y="546" width="4" height="1" fill="#d8d8d8"/><rect x="1" y="538" width="4" height="1" fill="#d8d8d8"/><rect x="1" y="531" width="4" height="1" fill="#d8d8d8"/><rect x="1" y="524" width="8" height="1" fill="#d8d8d8"/><text x="13" y="528">35000</text><rect x="1" y="516" width="4" height="1" fill="#d8d8d8"/><rect x="1" y="509" width="4" height="1" fill="#d8d8d8"/><rect x="1" y="502" width="4" height="1" fill="#d8d8d8"/><rect x="1" y="494" width="4" height="1" fill="#d8d8d8"/><rect x="1" y="487" width="8" height="1" fill="#d8d8d8"/><text x="13" y="491">40000</text><rect x="1" y="480" width="4" height="1" fill="#d8d8d8"/><rect x="1" y="472" width="4" height="1" fill="#d8d8d8"/><rect x="1" y="465" width="4" height="1" fill="#d8d8d8"/><rect x="1" y="458" width="4" height="1" fill="#d8d8d8"/><rect x="1" y="451" width="8" height="1" fill="#d8d8d8"/><text x="13" y="455">45000</text><rect x="1" y="443" width="4" height="1" fill="#d8d8d8"/><rect x="1" y="436" width="4" height="1" fill="#d8d8d8"/><rect x="1" y="429" width="4" height="1" fill="#d8d8d8"/><rect x="1" y="421" width="4" height="1" fill="#d8d8d8"/><rect x="1" y="414" width="8" height="1" fill="#d8d8d8"/><text x="13" y="418">50000</text><rect x="1" y="407" width="4" height="1" fill="#d8d8d8"/><text x="13" y="10">Hz</text></svg>
<div class="abs" style="left:1877px;top:175px;width:12px;height:774px;box-sizing:border-box;background:#000;border:1px solid #8c8c8c;border-right-color:#fff;border-bottom-color:#fff"></div>
<div class="abs" style="left:1898px;top:175px;width:12px;height:774px;box-sizing:border-box;background:#000;border:1px solid #8c8c8c;border-right-color:#fff;border-bottom-color:#fff"></div>
<div class="abs" style="left:252px;top:974px;width:1667px;height:81px;background:#eeeeee"></div>
<div class="abs" style="left:252px;top:974px;width:1667px;height:1px;background:#fafafa"></div>
<div class="abs" style="left:522px;top:977px;width:1px;height:76px;background:#a0a0a0"></div>
<div class="abs" style="left:523px;top:977px;width:1px;height:76px;background:#fbfbfb"></div>
<div class="abs" style="left:1626px;top:977px;width:1px;height:76px;background:#a0a0a0"></div>
<div class="abs" style="left:1627px;top:977px;width:1px;height:76px;background:#fbfbfb"></div>
<div class="abs" style="left:259px;top:987px;width:138px;height:26px;box-sizing:border-box;border:1px solid #b5b5b5;border-radius:3px;background:linear-gradient(#f6f6f6 0%,#ececec 48%,#e2e2e2 52%,#e9e9e9 100%);"></div>
<svg class="abs" style="left:259px;top:987px" width="27" height="26" viewBox="0 0 27 26" ><path d="M8 6l11 7-11 7z" fill="#5e5e5e"/></svg>
<div class="abs" style="left:286px;top:988px;width:1px;height:24px;background:#cdcdcd"></div>
<div class="abs" style="left:287px;top:988px;width:1px;height:24px;background:#f8f8f8"></div>
<svg class="abs" style="left:286px;top:987px" width="27" height="26" viewBox="0 0 27 26" ><path d="M12 10.500H7.500v7h13v-7H16" fill="none" stroke="#5e5e5e" stroke-width="2" stroke-linejoin="round"/><path d="M11 10.500l5-4v8z" fill="#5e5e5e"/></svg>
<div class="abs" style="left:314px;top:988px;width:1px;height:24px;background:#cdcdcd"></div>
<div class="abs" style="left:315px;top:988px;width:1px;height:24px;background:#f8f8f8"></div>
<svg class="abs" style="left:314px;top:987px" width="27" height="26" viewBox="0 0 27 26" ><path d="M6 6l11 7-11 7z" fill="#5e5e5e"/><rect x="19" y="6" width="2.500" height="14" fill="#5e5e5e"/></svg>
<div class="abs" style="left:342px;top:988px;width:1px;height:24px;background:#cdcdcd"></div>
<div class="abs" style="left:343px;top:988px;width:1px;height:24px;background:#f8f8f8"></div>
<svg class="abs" style="left:342px;top:987px" width="27" height="26" viewBox="0 0 27 26" ><path d="M13.500 6v14l-9-7zM22.500 6v14l-9-7z" fill="#5e5e5e"/></svg>
<div class="abs" style="left:370px;top:988px;width:1px;height:24px;background:#cdcdcd"></div>
<div class="abs" style="left:371px;top:988px;width:1px;height:24px;background:#f8f8f8"></div>
<svg class="abs" style="left:370px;top:987px" width="27" height="26" viewBox="0 0 27 26" ><path d="M5 6v14l9-7zM14 6v14l9-7z" fill="#5e5e5e"/></svg>
<div class="abs" style="left:259px;top:1016px;width:138px;height:26px;box-sizing:border-box;border:1px solid #b5b5b5;border-radius:3px;background:linear-gradient(#f6f6f6 0%,#ececec 48%,#e2e2e2 52%,#e9e9e9 100%);"></div>
<svg class="abs" style="left:259px;top:1016px" width="27" height="26" viewBox="0 0 27 26" ><rect x="8.500" y="8" width="10" height="10" fill="#5e5e5e"/></svg>
<div class="abs" style="left:286px;top:1017px;width:1px;height:24px;background:#cdcdcd"></div>
<div class="abs" style="left:287px;top:1017px;width:1px;height:24px;background:#f8f8f8"></div>
<svg class="abs" style="left:286px;top:1016px" width="27" height="26" viewBox="0 0 27 26" ><rect x="9" y="7.500" width="3" height="10" fill="#5e5e5e"/><rect x="15" y="7.500" width="3" height="10" fill="#5e5e5e"/></svg>
<div class="abs" style="left:314px;top:1017px;width:1px;height:24px;background:#cdcdcd"></div>
<div class="abs" style="left:315px;top:1017px;width:1px;height:24px;background:#f8f8f8"></div>
<svg class="abs" style="left:314px;top:1016px" width="27" height="26" viewBox="0 0 27 26" ><circle cx="13.500" cy="13" r="4.600" fill="#8e0505"/><circle cx="13.500" cy="13" r="4.600" fill="none" stroke="#6a0000" stroke-width=".8"/></svg>
<div class="abs" style="left:342px;top:1017px;width:1px;height:24px;background:#cdcdcd"></div>
<div class="abs" style="left:343px;top:1017px;width:1px;height:24px;background:#f8f8f8"></div>
<svg class="abs" style="left:342px;top:1016px" width="27" height="26" viewBox="0 0 27 26" ><path d="M7.500 5.500h-2v15h2" fill="none" stroke="#5e5e5e" stroke-width="1.600"/><path d="M14.500 7v12l-8-6zM22.500 7v12l-8-6z" fill="#5e5e5e"/></svg>
<div class="abs" style="left:370px;top:1017px;width:1px;height:24px;background:#cdcdcd"></div>
<div class="abs" style="left:371px;top:1017px;width:1px;height:24px;background:#f8f8f8"></div>
<svg class="abs" style="left:370px;top:1016px" width="27" height="26" viewBox="0 0 27 26" ><path d="M19.500 5.500h2v15h-2" fill="none" stroke="#5e5e5e" stroke-width="1.600"/><path d="M4.500 7v12l8-6zM12.500 7v12l8-6z" fill="#5e5e5e"/></svg>
<div class="abs" style="left:405px;top:987px;width:110px;height:26px;box-sizing:border-box;border:1px solid #b5b5b5;border-radius:3px;background:linear-gradient(#f6f6f6 0%,#ececec 48%,#e2e2e2 52%,#e9e9e9 100%);"></div>
<svg class="abs" style="left:405px;top:987px" width="27" height="26" viewBox="0 0 27 26" ><g transform="translate(6,5)"><circle cx="6" cy="6" r="4.300" fill="#f4f4f4" stroke="#5e5e5e" stroke-width="2"/><path d="M9.600 9.600l4.400 4.400" stroke="#5e5e5e" stroke-width="3" stroke-linecap="round"/><path d="M3.500 6h5M6 3.500v5" stroke="#5e5e5e" stroke-width="1.300"/></g></svg>
<div class="abs" style="left:432px;top:988px;width:1px;height:24px;background:#cdcdcd"></div>
<div class="abs" style="left:433px;top:988px;width:1px;height:24px;background:#f8f8f8"></div>
<svg class="abs" style="left:432px;top:987px" width="27" height="26" viewBox="0 0 27 26" ><g transform="translate(6,5)"><circle cx="6" cy="6" r="4.300" fill="#f4f4f4" stroke="#5e5e5e" stroke-width="2"/><path d="M9.600 9.600l4.400 4.400" stroke="#5e5e5e" stroke-width="3" stroke-linecap="round"/><path d="M3.500 6h5" stroke="#5e5e5e" stroke-width="1.300"/></g></svg>
<div class="abs" style="left:460px;top:988px;width:1px;height:24px;background:#cdcdcd"></div>
<div class="abs" style="left:461px;top:988px;width:1px;height:24px;background:#f8f8f8"></div>
<svg class="abs" style="left:460px;top:987px" width="27" height="26" viewBox="0 0 27 26" ><g transform="translate(8,4)"><circle cx="6" cy="6" r="4.300" fill="#f4f4f4" stroke="#5e5e5e" stroke-width="2"/><path d="M9.600 9.600l4.400 4.400" stroke="#5e5e5e" stroke-width="3" stroke-linecap="round"/></g><text x="4" y="22" font-family="Liberation Sans" font-size="6" font-weight="bold" fill="#5e5e5e">100</text></svg>
<div class="abs" style="left:488px;top:988px;width:1px;height:24px;background:#cdcdcd"></div>
<div class="abs" style="left:489px;top:988px;width:1px;height:24px;background:#f8f8f8"></div>
<svg class="abs" style="left:488px;top:987px" width="27" height="26" viewBox="0 0 27 26" ><g transform="translate(9,5)"><circle cx="6" cy="6" r="4.300" fill="#f4f4f4" stroke="#5e5e5e" stroke-width="2"/><path d="M9.600 9.600l4.400 4.400" stroke="#5e5e5e" stroke-width="3" stroke-linecap="round"/></g><path d="M5 7v11" stroke="#5e5e5e" stroke-width="1.600"/><path d="M2 8.500l3-4 3 4zM2 16.500l3 4 3-4z" fill="#5e5e5e"/><path d="M2.500 12.500h5" stroke="#5e5e5e" stroke-width="1.400"/></svg>
<div class="abs" style="left:405px;top:1016px;width:110px;height:26px;box-sizing:border-box;border:1px solid #b5b5b5;border-radius:3px;background:linear-gradient(#f6f6f6 0%,#ececec 48%,#e2e2e2 52%,#e9e9e9 100%);"></div>
<svg class="abs" style="left:405px;top:1016px" width="27" height="26" viewBox="0 0 27 26" ><g transform="translate(9,6)"><circle cx="6" cy="6" r="4.300" fill="#f4f4f4" stroke="#5e5e5e" stroke-width="2"/><path d="M9.600 9.600l4.400 4.400" stroke="#5e5e5e" stroke-width="3" stroke-linecap="round"/></g><path d="M7.500 4.500h-2.500v16h2.500" fill="none" stroke="#5e5e5e" stroke-width="1.500"/></svg>
<div class="abs" style="left:432px;top:1017px;width:1px;height:24px;background:#cdcdcd"></div>
<div class="abs" style="left:433px;top:1017px;width:1px;height:24px;background:#f8f8f8"></div>
<svg class="abs" style="left:432px;top:1016px" width="27" height="26" viewBox="0 0 27 26" ><g transform="translate(6,5)"><circle cx="6" cy="6" r="4.300" fill="#f4f4f4" stroke="#5e5e5e" stroke-width="2"/><path d="M9.600 9.600l4.400 4.400" stroke="#5e5e5e" stroke-width="3" stroke-linecap="round"/><path d="M3.500 6h5M6 3.500v5" stroke="#5e5e5e" stroke-width="2"/><circle cx="6" cy="6" r="1.100" fill="#f4f4f4"/></g></svg>
<div class="abs" style="left:460px;top:1017px;width:1px;height:24px;background:#cdcdcd"></div>
<div class="abs" style="left:461px;top:1017px;width:1px;height:24px;background:#f8f8f8"></div>
<svg class="abs" style="left:460px;top:1016px" width="27" height="26" viewBox="0 0 27 26" ><g transform="translate(20,6) scale(-1,1)"><circle cx="6" cy="6" r="4.300" fill="#f4f4f4" stroke="#5e5e5e" stroke-width="2"/><path d="M9.600 9.600l4.400 4.400" stroke="#5e5e5e" stroke-width="3" stroke-linecap="round"/></g><path d="M20.500 4.500h2.500v16h-2.500" fill="none" stroke="#5e5e5e" stroke-width="1.500"/></svg>
<div class="abs" style="left:488px;top:1017px;width:1px;height:24px;background:#cdcdcd"></div>
<div class="abs" style="left:489px;top:1017px;width:1px;height:24px;background:#f8f8f8"></div>
<svg class="abs" style="left:488px;top:1016px" width="27" height="26" viewBox="0 0 27 26" ><g transform="translate(9,5)"><circle cx="6" cy="6" r="4.300" fill="#f4f4f4" stroke="#5e5e5e" stroke-width="2"/><path d="M9.600 9.600l4.400 4.400" stroke="#5e5e5e" stroke-width="3" stroke-linecap="round"/></g><path d="M5 4v5M5 16v5" stroke="#5e5e5e" stroke-width="1.600"/><path d="M2 8l3 4 3-4zM2 17l3-4 3 4z" fill="#5e5e5e"/></svg>
<div class="t bt" style="left:858.3px;top:974px;font-size:77px;line-height:86px;transform-origin:0 0;transform:scaleX(0.89);-webkit-text-stroke:0.8px #000;color:#000">0</div>
<div class="t bt" style="left:897.4px;top:974px;font-size:77px;line-height:86px;transform-origin:0 0;transform:scaleX(0.89);-webkit-text-stroke:0.8px #000;color:#000">0</div>
<div class="t bt" style="left:965.4px;top:974px;font-size:77px;line-height:86px;transform-origin:0 0;transform:scaleX(0.89);-webkit-text-stroke:0.8px #000;color:#000">0</div>
<div class="t bt" style="left:1004.8px;top:974px;font-size:77px;line-height:86px;transform-origin:0 0;transform:scaleX(0.89);-webkit-text-stroke:0.8px #000;color:#000">0</div>
<div class="t bt" style="left:1072.4px;top:974px;font-size:77px;line-height:86px;transform-origin:0 0;transform:scaleX(0.89);-webkit-text-stroke:0.8px #000;color:#000">0</div>
<div class="t bt" style="left:1111.5px;top:974px;font-size:77px;line-height:86px;transform-origin:0 0;transform:scaleX(0.89);-webkit-text-stroke:0.8px #000;color:#000">0</div>
<div class="t bt" style="left:1175.3px;top:974px;font-size:77px;line-height:86px;transform-origin:0 0;transform:scaleX(0.89);-webkit-text-stroke:0.8px #000;color:#000">0</div>
<div class="t bt" style="left:1214.7px;top:974px;font-size:77px;line-height:86px;transform-origin:0 0;transform:scaleX(0.89);-webkit-text-stroke:0.8px #000;color:#000">0</div>
<div class="t bt" style="left:1253.4px;top:974px;font-size:77px;line-height:86px;transform-origin:0 0;transform:scaleX(0.89);-webkit-text-stroke:0.8px #000;color:#000">0</div>
<div class="abs" style="left:946px;top:1005px;width:10px;height:10px;background:#000"></div>
<div class="abs" style="left:946px;top:1035px;width:10px;height:10px;background:#000"></div>
<div class="abs" style="left:1053.5px;top:1005px;width:10px;height:10px;background:#000"></div>
<div class="abs" style="left:1053.5px;top:1035px;width:10px;height:10px;background:#000"></div>
<div class="abs" style="left:1157px;top:1035px;width:10px;height:10px;background:#000"></div>
<div class="t" style="left:1690px;top:984px;font-size:11px;line-height:13px">Start</div>
<div class="t" style="left:1764px;top:984px;font-size:11px;line-height:13px">End</div>
<div class="t" style="left:1840px;top:985px;font-size:11px;line-height:13px">Length</div>
<div class="t" style="left:1600px;width:80px;text-align:right;top:1001px;font-size:11px;line-height:13px">Selection</div>
<div class="t" style="left:1600px;width:80px;text-align:right;top:1025px;font-size:11px;line-height:13px">View</div>
<div class="abs" style="left:1690px;top:999px;width:72px;height:19px;box-sizing:border-box;border:1px solid #c6c6c6;border-top-color:#a9a9a9;background:#fff"></div>
<div class="t tv" style="left:1690px;width:72px;text-align:center;top:1002px;font-size:11px;line-height:13px">00:00:00.000</div>
<div class="abs" style="left:1764px;top:999px;width:72px;height:19px;box-sizing:border-box;border:1px solid #c6c6c6;border-top-color:#a9a9a9;background:#fff"></div>
<div class="t tv" style="left:1764px;width:72px;text-align:center;top:1002px;font-size:11px;line-height:13px">00:00:00.000</div>
<div class="abs" style="left:1838px;top:999px;width:72px;height:19px;box-sizing:border-box;border:1px solid #c6c6c6;border-top-color:#a9a9a9;background:#fff"></div>
<div class="t tv" style="left:1838px;width:72px;text-align:center;top:1002px;font-size:11px;line-height:13px">00:00:00.000</div>
<div class="abs" style="left:1690px;top:1023px;width:72px;height:19px;box-sizing:border-box;border:1px solid #c6c6c6;border-top-color:#a9a9a9;background:#fff"></div>
<div class="t tv" style="left:1690px;width:72px;text-align:center;top:1026px;font-size:11px;line-height:13px">00:00:00.000</div>
<div class="abs" style="left:1764px;top:1023px;width:72px;height:19px;box-sizing:border-box;border:1px solid #c6c6c6;border-top-color:#a9a9a9;background:#fff"></div>
<div class="t tv" style="left:1764px;width:72px;text-align:center;top:1026px;font-size:11px;line-height:13px">00:08:05.540</div>
<div class="abs" style="left:1838px;top:1023px;width:72px;height:19px;box-sizing:border-box;border:1px solid #c6c6c6;border-top-color:#a9a9a9;background:#fff"></div>
<div class="t tv" style="left:1838px;width:72px;text-align:center;top:1026px;font-size:11px;line-height:13px">00:08:05.540</div>
<div class="abs" style="left:0;top:1054px;width:1919px;height:1px;background:#b9b9b9"></div>
<div class="abs" style="left:0;top:1055px;width:1919px;height:24px;background:linear-gradient(#f3f3f3,#e6e6e6)"></div>
<div class="abs" style="left:0;top:1078px;width:1919px;height:1px;background:#a4a4a4"></div>
<div class="abs" style="left:1411px;top:1058px;width:1px;height:19px;background:#a8a8a8"></div>
<div class="abs" style="left:1412px;top:1058px;width:1px;height:19px;background:#fdfdfd"></div>
<div class="abs" style="left:1727px;top:1058px;width:1px;height:19px;background:#a8a8a8"></div>
<div class="abs" style="left:1728px;top:1058px;width:1px;height:19px;background:#fdfdfd"></div>
<div class="abs" style="left:1825px;top:1058px;width:1px;height:19px;background:#a8a8a8"></div>
<div class="abs" style="left:1826px;top:1058px;width:1px;height:19px;background:#fdfdfd"></div>
<div class="t" style="left:1418px;top:1061px;font-size:11px;line-height:13px">96000 Hz, 24-bit, 2 Channels</div>
<div class="t" style="left:1734px;top:1061px;font-size:11px;line-height:13px">266.715 Mb</div>
<div class="t" style="left:1831px;top:1061px;font-size:11px;line-height:13px">00:08:05.540</div>
</div>
</body></html>
